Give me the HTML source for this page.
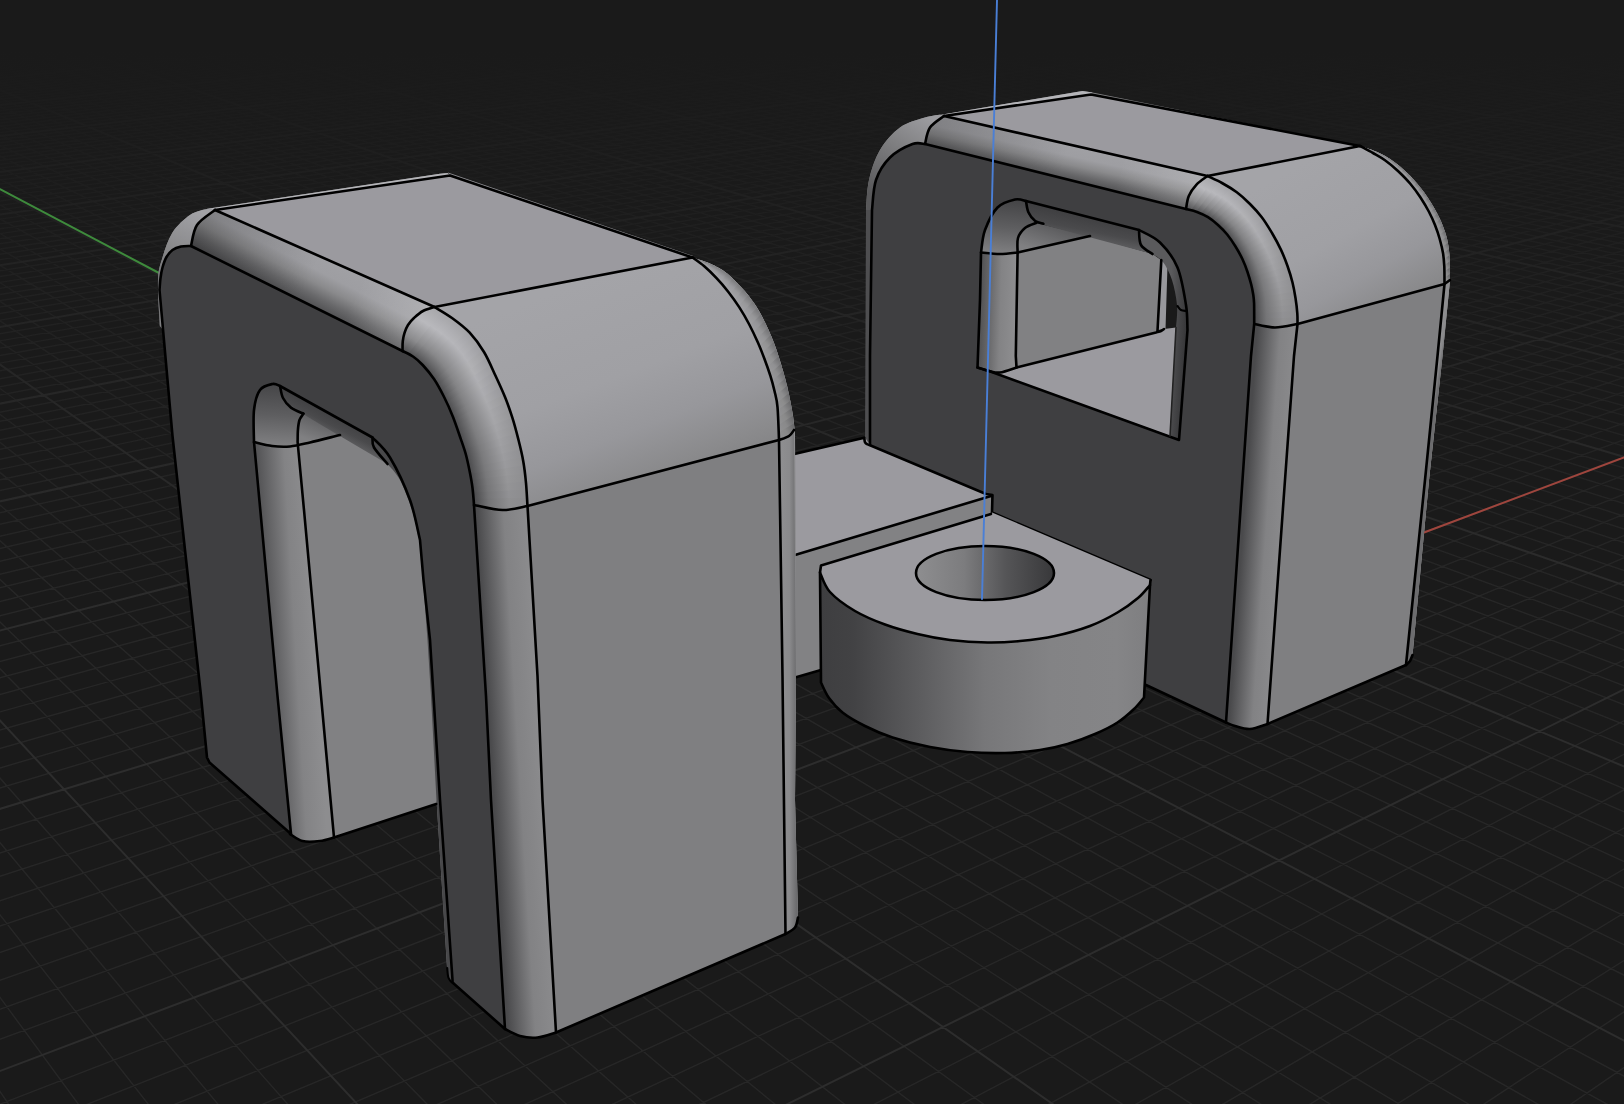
<!DOCTYPE html><html><head><meta charset="utf-8"><title>viewport</title><style>html,body{margin:0;padding:0;background:#1a1a1a;overflow:hidden;font-family:"Liberation Sans",sans-serif}</style></head><body><svg width="1624" height="1104" viewBox="0 0 1624 1104" style="display:block"><defs><linearGradient id="g1" gradientUnits="userSpaceOnUse" x1="0" y1="0" x2="0" y2="620"><stop offset="0" stop-color="#1a1a1a"/><stop offset="0.08" stop-color="#1a1a1a"/><stop offset="0.45" stop-color="#1a1a1a80"/><stop offset="1" stop-color="#1a1a1a00"/></linearGradient><linearGradient id="g2" gradientUnits="userSpaceOnUse" x1="1290" y1="170" x2="1380" y2="330"><stop offset="0" stop-color="#a4a4a8"/><stop offset="0.45" stop-color="#a0a0a4"/><stop offset="0.7" stop-color="#97979b"/><stop offset="0.9" stop-color="#8a8a8c"/><stop offset="1" stop-color="#838385"/></linearGradient><linearGradient id="g3" gradientUnits="userSpaceOnUse" x1="1380" y1="150" x2="1450" y2="300"><stop offset="0" stop-color="#b0b0b4"/><stop offset="1" stop-color="#8c8c8e"/></linearGradient><linearGradient id="g4" gradientUnits="userSpaceOnUse" x1="1362.7" y1="147.4" x2="1363.0" y2="146.9"><stop offset="0" stop-color="#acacb0"/><stop offset="0.5" stop-color="#a0a0a4"/><stop offset="1" stop-color="#808082"/></linearGradient><linearGradient id="g5" gradientUnits="userSpaceOnUse" x1="1368.1" y1="150.3" x2="1368.9" y2="148.9"><stop offset="0" stop-color="#ababaf"/><stop offset="0.5" stop-color="#9f9fa2"/><stop offset="1" stop-color="#7f7f81"/></linearGradient><linearGradient id="g6" gradientUnits="userSpaceOnUse" x1="1373.5" y1="153.3" x2="1374.7" y2="151.0"><stop offset="0" stop-color="#aaaaae"/><stop offset="0.5" stop-color="#9e9ea2"/><stop offset="1" stop-color="#7e7e80"/></linearGradient><linearGradient id="g7" gradientUnits="userSpaceOnUse" x1="1378.8" y1="156.3" x2="1380.4" y2="153.6"><stop offset="0" stop-color="#a9a9ad"/><stop offset="0.5" stop-color="#9d9da0"/><stop offset="1" stop-color="#7d7d7f"/></linearGradient><linearGradient id="g8" gradientUnits="userSpaceOnUse" x1="1384.0" y1="159.6" x2="1385.9" y2="156.5"><stop offset="0" stop-color="#a8a8ac"/><stop offset="0.5" stop-color="#9c9ca0"/><stop offset="1" stop-color="#7c7c7e"/></linearGradient><linearGradient id="g9" gradientUnits="userSpaceOnUse" x1="1389.0" y1="163.2" x2="1391.1" y2="159.9"><stop offset="0" stop-color="#a7a7ab"/><stop offset="0.5" stop-color="#9b9b9e"/><stop offset="1" stop-color="#7c7c7e"/></linearGradient><linearGradient id="g10" gradientUnits="userSpaceOnUse" x1="1393.7" y1="167.2" x2="1396.2" y2="163.5"><stop offset="0" stop-color="#a6a6a9"/><stop offset="0.5" stop-color="#9a9a9e"/><stop offset="1" stop-color="#7b7b7d"/></linearGradient><linearGradient id="g11" gradientUnits="userSpaceOnUse" x1="1398.3" y1="171.3" x2="1401.0" y2="167.4"><stop offset="0" stop-color="#a5a5a8"/><stop offset="0.5" stop-color="#9a9a9c"/><stop offset="1" stop-color="#7a7a7c"/></linearGradient><linearGradient id="g12" gradientUnits="userSpaceOnUse" x1="1402.7" y1="175.5" x2="1405.6" y2="171.5"><stop offset="0" stop-color="#a4a4a7"/><stop offset="0.5" stop-color="#99999c"/><stop offset="1" stop-color="#79797b"/></linearGradient><linearGradient id="g13" gradientUnits="userSpaceOnUse" x1="1406.9" y1="180.0" x2="1410.1" y2="175.9"><stop offset="0" stop-color="#a2a2a6"/><stop offset="0.5" stop-color="#98989a"/><stop offset="1" stop-color="#79797b"/></linearGradient><linearGradient id="g14" gradientUnits="userSpaceOnUse" x1="1410.9" y1="184.6" x2="1414.4" y2="180.4"><stop offset="0" stop-color="#a1a1a5"/><stop offset="0.5" stop-color="#97979a"/><stop offset="1" stop-color="#78787a"/></linearGradient><linearGradient id="g15" gradientUnits="userSpaceOnUse" x1="1414.8" y1="189.4" x2="1418.4" y2="185.1"><stop offset="0" stop-color="#a0a0a3"/><stop offset="0.5" stop-color="#969698"/><stop offset="1" stop-color="#777779"/></linearGradient><linearGradient id="g16" gradientUnits="userSpaceOnUse" x1="1418.4" y1="194.4" x2="1422.3" y2="190.0"><stop offset="0" stop-color="#9f9fa2"/><stop offset="0.5" stop-color="#959598"/><stop offset="1" stop-color="#767678"/></linearGradient><linearGradient id="g17" gradientUnits="userSpaceOnUse" x1="1421.8" y1="199.5" x2="1426.0" y2="195.0"><stop offset="0" stop-color="#9e9ea1"/><stop offset="0.5" stop-color="#949496"/><stop offset="1" stop-color="#757577"/></linearGradient><linearGradient id="g18" gradientUnits="userSpaceOnUse" x1="1425.0" y1="204.7" x2="1429.4" y2="200.2"><stop offset="0" stop-color="#9d9da0"/><stop offset="0.5" stop-color="#949496"/><stop offset="1" stop-color="#757577"/></linearGradient><linearGradient id="g19" gradientUnits="userSpaceOnUse" x1="1428.0" y1="210.1" x2="1432.7" y2="205.5"><stop offset="0" stop-color="#9c9c9f"/><stop offset="0.5" stop-color="#939394"/><stop offset="1" stop-color="#747476"/></linearGradient><linearGradient id="g20" gradientUnits="userSpaceOnUse" x1="1430.8" y1="215.5" x2="1435.8" y2="210.9"><stop offset="0" stop-color="#9b9b9e"/><stop offset="0.5" stop-color="#929294"/><stop offset="1" stop-color="#737375"/></linearGradient><linearGradient id="g21" gradientUnits="userSpaceOnUse" x1="1433.4" y1="221.1" x2="1438.6" y2="216.4"><stop offset="0" stop-color="#9a9a9c"/><stop offset="0.5" stop-color="#919192"/><stop offset="1" stop-color="#727274"/></linearGradient><linearGradient id="g22" gradientUnits="userSpaceOnUse" x1="1435.7" y1="226.8" x2="1441.2" y2="222.1"><stop offset="0" stop-color="#99999b"/><stop offset="0.5" stop-color="#909092"/><stop offset="1" stop-color="#717173"/></linearGradient><linearGradient id="g23" gradientUnits="userSpaceOnUse" x1="1437.7" y1="232.6" x2="1443.6" y2="227.9"><stop offset="0" stop-color="#97979a"/><stop offset="0.5" stop-color="#8f8f90"/><stop offset="1" stop-color="#717173"/></linearGradient><linearGradient id="g24" gradientUnits="userSpaceOnUse" x1="1439.5" y1="238.4" x2="1445.6" y2="233.7"><stop offset="0" stop-color="#969699"/><stop offset="0.5" stop-color="#8e8e90"/><stop offset="1" stop-color="#707072"/></linearGradient><linearGradient id="g25" gradientUnits="userSpaceOnUse" x1="1441.1" y1="244.4" x2="1447.2" y2="239.7"><stop offset="0" stop-color="#959598"/><stop offset="0.5" stop-color="#8e8e8e"/><stop offset="1" stop-color="#6f6f71"/></linearGradient><linearGradient id="g26" gradientUnits="userSpaceOnUse" x1="1442.5" y1="250.4" x2="1448.4" y2="245.8"><stop offset="0" stop-color="#949496"/><stop offset="0.5" stop-color="#8d8d8e"/><stop offset="1" stop-color="#6e6e70"/></linearGradient><linearGradient id="g27" gradientUnits="userSpaceOnUse" x1="1443.5" y1="256.4" x2="1449.2" y2="252.0"><stop offset="0" stop-color="#939395"/><stop offset="0.5" stop-color="#8c8c8c"/><stop offset="1" stop-color="#6e6e70"/></linearGradient><linearGradient id="g28" gradientUnits="userSpaceOnUse" x1="1444.1" y1="262.5" x2="1449.6" y2="258.2"><stop offset="0" stop-color="#929294"/><stop offset="0.5" stop-color="#8b8b8c"/><stop offset="1" stop-color="#6d6d6f"/></linearGradient><linearGradient id="g29" gradientUnits="userSpaceOnUse" x1="1444.4" y1="268.7" x2="1449.8" y2="264.4"><stop offset="0" stop-color="#919193"/><stop offset="0.5" stop-color="#8a8a8a"/><stop offset="1" stop-color="#6c6c6e"/></linearGradient><linearGradient id="g30" gradientUnits="userSpaceOnUse" x1="1444.5" y1="274.8" x2="1449.9" y2="270.7"><stop offset="0" stop-color="#909092"/><stop offset="0.5" stop-color="#89898a"/><stop offset="1" stop-color="#6b6b6d"/></linearGradient><linearGradient id="g31" gradientUnits="userSpaceOnUse" x1="1444.5" y1="280.9" x2="1450.0" y2="276.9"><stop offset="0" stop-color="#8f8f91"/><stop offset="0.5" stop-color="#888888"/><stop offset="1" stop-color="#6a6a6c"/></linearGradient><linearGradient id="g32" gradientUnits="userSpaceOnUse" x1="1437" y1="356" x2="1443" y2="357"><stop offset="0" stop-color="#8e8e90"/><stop offset="0.5" stop-color="#8a8a8c"/><stop offset="1" stop-color="#6c6c6e"/></linearGradient><linearGradient id="g33" gradientUnits="userSpaceOnUse" x1="1075" y1="146" x2="1067.3" y2="180.5"><stop offset="0" stop-color="#a0a0a4"/><stop offset="0.3" stop-color="#9e9ea2"/><stop offset="0.55" stop-color="#8a8a8c"/><stop offset="0.8" stop-color="#68686a"/><stop offset="1" stop-color="#525254"/></linearGradient><linearGradient id="g34" gradientUnits="userSpaceOnUse" x1="935" y1="130" x2="1197" y2="192"><stop offset="0" stop-color="#00000030"/><stop offset="0.5" stop-color="#00000000"/><stop offset="0.7" stop-color="#ffffff00"/><stop offset="1" stop-color="#ffffff26"/></linearGradient><linearGradient id="g35" gradientUnits="userSpaceOnUse" x1="930" y1="118" x2="880" y2="200"><stop offset="0" stop-color="#9c9ca0"/><stop offset="0.4" stop-color="#808082"/><stop offset="1" stop-color="#58585a"/></linearGradient><linearGradient id="g36" gradientUnits="userSpaceOnUse" x1="1186" y1="209" x2="1207.5" y2="176"><stop offset="0" stop-color="#505052"/><stop offset="0.28" stop-color="#8c8c8e"/><stop offset="0.66" stop-color="#b9b9bd"/><stop offset="1" stop-color="#a6a6aa"/></linearGradient><linearGradient id="g37" gradientUnits="userSpaceOnUse" x1="1254.2" y1="324" x2="1297.5" y2="324"><stop offset="0" stop-color="#48484a"/><stop offset="0.28" stop-color="#747476"/><stop offset="0.66" stop-color="#8e8e90"/><stop offset="1" stop-color="#8a8a8c"/></linearGradient><linearGradient id="g38" gradientUnits="userSpaceOnUse" x1="1188.5" y1="209.6" x2="1210.5" y2="177.4"><stop offset="0" stop-color="#505052"/><stop offset="0.28" stop-color="#8c8c8e"/><stop offset="0.66" stop-color="#b9b9bd"/><stop offset="1" stop-color="#a6a6a9"/></linearGradient><linearGradient id="g39" gradientUnits="userSpaceOnUse" x1="1193.5" y1="210.9" x2="1216.4" y2="180.2"><stop offset="0" stop-color="#505052"/><stop offset="0.28" stop-color="#8b8b8d"/><stop offset="0.66" stop-color="#b8b8bc"/><stop offset="1" stop-color="#a4a4a8"/></linearGradient><linearGradient id="g40" gradientUnits="userSpaceOnUse" x1="1198.4" y1="212.6" x2="1222.2" y2="183.2"><stop offset="0" stop-color="#4f4f51"/><stop offset="0.28" stop-color="#8a8a8c"/><stop offset="0.66" stop-color="#b8b8bc"/><stop offset="1" stop-color="#a4a4a7"/></linearGradient><linearGradient id="g41" gradientUnits="userSpaceOnUse" x1="1203.2" y1="214.7" x2="1227.9" y2="186.4"><stop offset="0" stop-color="#4f4f51"/><stop offset="0.28" stop-color="#89898b"/><stop offset="0.66" stop-color="#b7b7bb"/><stop offset="1" stop-color="#a2a2a6"/></linearGradient><linearGradient id="g42" gradientUnits="userSpaceOnUse" x1="1207.7" y1="217.1" x2="1233.4" y2="190.0"><stop offset="0" stop-color="#4f4f51"/><stop offset="0.28" stop-color="#88888a"/><stop offset="0.66" stop-color="#b6b6ba"/><stop offset="1" stop-color="#a2a2a5"/></linearGradient><linearGradient id="g43" gradientUnits="userSpaceOnUse" x1="1212.0" y1="220.0" x2="1238.7" y2="193.8"><stop offset="0" stop-color="#4e4e50"/><stop offset="0.28" stop-color="#878789"/><stop offset="0.66" stop-color="#b5b5b9"/><stop offset="1" stop-color="#a0a0a4"/></linearGradient><linearGradient id="g44" gradientUnits="userSpaceOnUse" x1="1216.0" y1="223.3" x2="1243.7" y2="198.1"><stop offset="0" stop-color="#4e4e50"/><stop offset="0.28" stop-color="#868688"/><stop offset="0.66" stop-color="#b4b4b8"/><stop offset="1" stop-color="#a0a0a3"/></linearGradient><linearGradient id="g45" gradientUnits="userSpaceOnUse" x1="1219.9" y1="226.8" x2="1248.5" y2="202.5"><stop offset="0" stop-color="#4e4e50"/><stop offset="0.28" stop-color="#868688"/><stop offset="0.66" stop-color="#b3b3b7"/><stop offset="1" stop-color="#9e9ea2"/></linearGradient><linearGradient id="g46" gradientUnits="userSpaceOnUse" x1="1223.6" y1="230.4" x2="1253.1" y2="207.2"><stop offset="0" stop-color="#4e4e50"/><stop offset="0.28" stop-color="#858587"/><stop offset="0.66" stop-color="#b2b2b5"/><stop offset="1" stop-color="#9e9ea1"/></linearGradient><linearGradient id="g47" gradientUnits="userSpaceOnUse" x1="1227.0" y1="234.3" x2="1257.5" y2="212.0"><stop offset="0" stop-color="#4d4d4f"/><stop offset="0.28" stop-color="#848486"/><stop offset="0.66" stop-color="#b1b1b4"/><stop offset="1" stop-color="#9c9ca0"/></linearGradient><linearGradient id="g48" gradientUnits="userSpaceOnUse" x1="1230.1" y1="238.4" x2="1261.6" y2="217.1"><stop offset="0" stop-color="#4d4d4f"/><stop offset="0.28" stop-color="#838385"/><stop offset="0.66" stop-color="#afafb3"/><stop offset="1" stop-color="#9c9c9f"/></linearGradient><linearGradient id="g49" gradientUnits="userSpaceOnUse" x1="1233.1" y1="242.7" x2="1265.4" y2="222.4"><stop offset="0" stop-color="#4d4d4f"/><stop offset="0.28" stop-color="#828284"/><stop offset="0.66" stop-color="#aeaeb1"/><stop offset="1" stop-color="#9a9a9e"/></linearGradient><linearGradient id="g50" gradientUnits="userSpaceOnUse" x1="1235.8" y1="247.1" x2="1269.0" y2="228.0"><stop offset="0" stop-color="#4c4c4e"/><stop offset="0.28" stop-color="#818183"/><stop offset="0.66" stop-color="#acacb0"/><stop offset="1" stop-color="#9a9a9d"/></linearGradient><linearGradient id="g51" gradientUnits="userSpaceOnUse" x1="1238.5" y1="251.6" x2="1272.3" y2="233.6"><stop offset="0" stop-color="#4c4c4e"/><stop offset="0.28" stop-color="#808082"/><stop offset="0.66" stop-color="#ababae"/><stop offset="1" stop-color="#98989c"/></linearGradient><linearGradient id="g52" gradientUnits="userSpaceOnUse" x1="1240.9" y1="256.1" x2="1275.5" y2="239.3"><stop offset="0" stop-color="#4c4c4e"/><stop offset="0.28" stop-color="#808082"/><stop offset="0.66" stop-color="#a9a9ac"/><stop offset="1" stop-color="#98989a"/></linearGradient><linearGradient id="g53" gradientUnits="userSpaceOnUse" x1="1243.2" y1="260.8" x2="1278.6" y2="245.1"><stop offset="0" stop-color="#4c4c4e"/><stop offset="0.28" stop-color="#7f7f81"/><stop offset="0.66" stop-color="#a7a7aa"/><stop offset="1" stop-color="#969699"/></linearGradient><linearGradient id="g54" gradientUnits="userSpaceOnUse" x1="1245.2" y1="265.6" x2="1281.5" y2="251.0"><stop offset="0" stop-color="#4b4b4d"/><stop offset="0.28" stop-color="#7e7e80"/><stop offset="0.66" stop-color="#a6a6a9"/><stop offset="1" stop-color="#969698"/></linearGradient><linearGradient id="g55" gradientUnits="userSpaceOnUse" x1="1246.9" y1="270.4" x2="1284.1" y2="257.0"><stop offset="0" stop-color="#4b4b4d"/><stop offset="0.28" stop-color="#7d7d7f"/><stop offset="0.66" stop-color="#a4a4a7"/><stop offset="1" stop-color="#949497"/></linearGradient><linearGradient id="g56" gradientUnits="userSpaceOnUse" x1="1248.6" y1="275.4" x2="1286.4" y2="263.1"><stop offset="0" stop-color="#4b4b4d"/><stop offset="0.28" stop-color="#7c7c7e"/><stop offset="0.66" stop-color="#a2a2a5"/><stop offset="1" stop-color="#949496"/></linearGradient><linearGradient id="g57" gradientUnits="userSpaceOnUse" x1="1250.1" y1="280.3" x2="1288.6" y2="269.3"><stop offset="0" stop-color="#4a4a4c"/><stop offset="0.28" stop-color="#7b7b7d"/><stop offset="0.66" stop-color="#a0a0a3"/><stop offset="1" stop-color="#929295"/></linearGradient><linearGradient id="g58" gradientUnits="userSpaceOnUse" x1="1251.4" y1="285.4" x2="1290.6" y2="275.5"><stop offset="0" stop-color="#4a4a4c"/><stop offset="0.28" stop-color="#7a7a7c"/><stop offset="0.66" stop-color="#9e9ea1"/><stop offset="1" stop-color="#929294"/></linearGradient><linearGradient id="g59" gradientUnits="userSpaceOnUse" x1="1252.5" y1="290.4" x2="1292.3" y2="281.8"><stop offset="0" stop-color="#4a4a4c"/><stop offset="0.28" stop-color="#7a7a7c"/><stop offset="0.66" stop-color="#9c9c9f"/><stop offset="1" stop-color="#909093"/></linearGradient><linearGradient id="g60" gradientUnits="userSpaceOnUse" x1="1253.4" y1="295.5" x2="1293.8" y2="288.2"><stop offset="0" stop-color="#4a4a4c"/><stop offset="0.28" stop-color="#79797b"/><stop offset="0.66" stop-color="#9a9a9d"/><stop offset="1" stop-color="#909092"/></linearGradient><linearGradient id="g61" gradientUnits="userSpaceOnUse" x1="1253.9" y1="300.7" x2="1294.9" y2="294.7"><stop offset="0" stop-color="#49494b"/><stop offset="0.28" stop-color="#78787a"/><stop offset="0.66" stop-color="#98989a"/><stop offset="1" stop-color="#8e8e91"/></linearGradient><linearGradient id="g62" gradientUnits="userSpaceOnUse" x1="1254.1" y1="305.9" x2="1295.9" y2="301.2"><stop offset="0" stop-color="#49494b"/><stop offset="0.28" stop-color="#777779"/><stop offset="0.66" stop-color="#969698"/><stop offset="1" stop-color="#8e8e90"/></linearGradient><linearGradient id="g63" gradientUnits="userSpaceOnUse" x1="1254.2" y1="311.0" x2="1296.7" y2="307.7"><stop offset="0" stop-color="#49494b"/><stop offset="0.28" stop-color="#767678"/><stop offset="0.66" stop-color="#949496"/><stop offset="1" stop-color="#8c8c8f"/></linearGradient><linearGradient id="g64" gradientUnits="userSpaceOnUse" x1="1254.2" y1="316.2" x2="1297.3" y2="314.2"><stop offset="0" stop-color="#48484a"/><stop offset="0.28" stop-color="#757577"/><stop offset="0.66" stop-color="#919194"/><stop offset="1" stop-color="#8c8c8e"/></linearGradient><linearGradient id="g65" gradientUnits="userSpaceOnUse" x1="1254.2" y1="321.4" x2="1297.5" y2="320.7"><stop offset="0" stop-color="#48484a"/><stop offset="0.28" stop-color="#747476"/><stop offset="0.66" stop-color="#8f8f91"/><stop offset="1" stop-color="#8a8a8d"/></linearGradient><linearGradient id="g66" gradientUnits="userSpaceOnUse" x1="1245" y1="500" x2="1287" y2="503"><stop offset="0" stop-color="#4a4a4c"/><stop offset="0.55" stop-color="#828284"/><stop offset="1" stop-color="#8b8b8d"/></linearGradient><linearGradient id="g67" gradientUnits="userSpaceOnUse" x1="1050" y1="222" x2="1040" y2="252"><stop offset="0" stop-color="#58585a"/><stop offset="1" stop-color="#808082"/></linearGradient><linearGradient id="g68" gradientUnits="userSpaceOnUse" x1="979" y1="300" x2="1015" y2="301"><stop offset="0" stop-color="#4e4e50"/><stop offset="0.6" stop-color="#838385"/><stop offset="1" stop-color="#8d8d8f"/></linearGradient><linearGradient id="g69" gradientUnits="userSpaceOnUse" x1="1005" y1="200" x2="1000" y2="254"><stop offset="0" stop-color="#454547"/><stop offset="0.5" stop-color="#5e5e60"/><stop offset="1" stop-color="#808082"/></linearGradient><linearGradient id="g70" gradientUnits="userSpaceOnUse" x1="1085" y1="214" x2="1080" y2="240"><stop offset="0" stop-color="#3e3e40"/><stop offset="0.6" stop-color="#4a4a4c"/><stop offset="1" stop-color="#5e5e60"/></linearGradient><linearGradient id="g71" gradientUnits="userSpaceOnUse" x1="1168" y1="340" x2="1188" y2="341"><stop offset="0" stop-color="#5a5a5c"/><stop offset="0.5" stop-color="#454547"/><stop offset="1" stop-color="#333335"/></linearGradient><linearGradient id="g72" gradientUnits="userSpaceOnUse" x1="820" y1="0" x2="1150" y2="0"><stop offset="0" stop-color="#3e3e40"/><stop offset="0.1" stop-color="#424244"/><stop offset="0.3" stop-color="#5c5c5e"/><stop offset="0.5" stop-color="#777779"/><stop offset="0.7" stop-color="#838385"/><stop offset="0.9" stop-color="#858587"/><stop offset="1" stop-color="#7e7e80"/></linearGradient><linearGradient id="g73" gradientUnits="userSpaceOnUse" x1="916" y1="0" x2="1054" y2="0"><stop offset="0" stop-color="#8e8e90"/><stop offset="0.35" stop-color="#7c7c7e"/><stop offset="0.65" stop-color="#555557"/><stop offset="1" stop-color="#38383a"/></linearGradient><linearGradient id="g74" gradientUnits="userSpaceOnUse" x1="560" y1="290" x2="640" y2="500"><stop offset="0" stop-color="#a4a4a8"/><stop offset="0.45" stop-color="#a0a0a4"/><stop offset="0.7" stop-color="#97979b"/><stop offset="0.9" stop-color="#8a8a8c"/><stop offset="1" stop-color="#838385"/></linearGradient><linearGradient id="g75" gradientUnits="userSpaceOnUse" x1="700" y1="260" x2="796" y2="440"><stop offset="0" stop-color="#b2b2b6"/><stop offset="1" stop-color="#8e8e90"/></linearGradient><linearGradient id="g76" gradientUnits="userSpaceOnUse" x1="695.6" y1="259.7" x2="696.1" y2="258.7"><stop offset="0" stop-color="#acacb0"/><stop offset="0.5" stop-color="#a0a0a4"/><stop offset="1" stop-color="#808082"/></linearGradient><linearGradient id="g77" gradientUnits="userSpaceOnUse" x1="701.5" y1="264.1" x2="703.4" y2="261.1"><stop offset="0" stop-color="#ababaf"/><stop offset="0.5" stop-color="#9f9fa2"/><stop offset="1" stop-color="#7f7f81"/></linearGradient><linearGradient id="g78" gradientUnits="userSpaceOnUse" x1="707.2" y1="269.0" x2="710.5" y2="263.9"><stop offset="0" stop-color="#aaaaae"/><stop offset="0.5" stop-color="#9e9ea2"/><stop offset="1" stop-color="#7e7e80"/></linearGradient><linearGradient id="g79" gradientUnits="userSpaceOnUse" x1="712.6" y1="274.1" x2="717.3" y2="267.2"><stop offset="0" stop-color="#a9a9ad"/><stop offset="0.5" stop-color="#9d9da0"/><stop offset="1" stop-color="#7d7d7f"/></linearGradient><linearGradient id="g80" gradientUnits="userSpaceOnUse" x1="717.8" y1="279.5" x2="723.8" y2="271.2"><stop offset="0" stop-color="#a8a8ac"/><stop offset="0.5" stop-color="#9c9ca0"/><stop offset="1" stop-color="#7c7c7e"/></linearGradient><linearGradient id="g81" gradientUnits="userSpaceOnUse" x1="722.7" y1="285.1" x2="729.8" y2="275.9"><stop offset="0" stop-color="#a7a7ab"/><stop offset="0.5" stop-color="#9b9b9e"/><stop offset="1" stop-color="#7c7c7e"/></linearGradient><linearGradient id="g82" gradientUnits="userSpaceOnUse" x1="727.5" y1="290.9" x2="735.4" y2="281.2"><stop offset="0" stop-color="#a6a6a9"/><stop offset="0.5" stop-color="#9a9a9e"/><stop offset="1" stop-color="#7b7b7d"/></linearGradient><linearGradient id="g83" gradientUnits="userSpaceOnUse" x1="732.0" y1="296.8" x2="740.7" y2="286.6"><stop offset="0" stop-color="#a5a5a8"/><stop offset="0.5" stop-color="#9a9a9c"/><stop offset="1" stop-color="#7a7a7c"/></linearGradient><linearGradient id="g84" gradientUnits="userSpaceOnUse" x1="736.4" y1="302.9" x2="745.7" y2="292.3"><stop offset="0" stop-color="#a4a4a7"/><stop offset="0.5" stop-color="#99999c"/><stop offset="1" stop-color="#79797b"/></linearGradient><linearGradient id="g85" gradientUnits="userSpaceOnUse" x1="740.5" y1="309.2" x2="750.5" y2="298.3"><stop offset="0" stop-color="#a2a2a6"/><stop offset="0.5" stop-color="#98989a"/><stop offset="1" stop-color="#79797b"/></linearGradient><linearGradient id="g86" gradientUnits="userSpaceOnUse" x1="744.3" y1="315.6" x2="754.9" y2="304.5"><stop offset="0" stop-color="#a1a1a5"/><stop offset="0.5" stop-color="#97979a"/><stop offset="1" stop-color="#78787a"/></linearGradient><linearGradient id="g87" gradientUnits="userSpaceOnUse" x1="748.0" y1="322.1" x2="759.0" y2="311.0"><stop offset="0" stop-color="#a0a0a3"/><stop offset="0.5" stop-color="#969698"/><stop offset="1" stop-color="#777779"/></linearGradient><linearGradient id="g88" gradientUnits="userSpaceOnUse" x1="751.4" y1="328.7" x2="762.6" y2="317.7"><stop offset="0" stop-color="#9f9fa2"/><stop offset="0.5" stop-color="#959598"/><stop offset="1" stop-color="#767678"/></linearGradient><linearGradient id="g89" gradientUnits="userSpaceOnUse" x1="754.7" y1="335.5" x2="766.0" y2="324.5"><stop offset="0" stop-color="#9e9ea1"/><stop offset="0.5" stop-color="#949496"/><stop offset="1" stop-color="#757577"/></linearGradient><linearGradient id="g90" gradientUnits="userSpaceOnUse" x1="757.8" y1="342.3" x2="769.2" y2="331.5"><stop offset="0" stop-color="#9d9da0"/><stop offset="0.5" stop-color="#949496"/><stop offset="1" stop-color="#757577"/></linearGradient><linearGradient id="g91" gradientUnits="userSpaceOnUse" x1="760.7" y1="349.2" x2="772.2" y2="338.5"><stop offset="0" stop-color="#9c9c9f"/><stop offset="0.5" stop-color="#939394"/><stop offset="1" stop-color="#747476"/></linearGradient><linearGradient id="g92" gradientUnits="userSpaceOnUse" x1="763.4" y1="356.1" x2="774.9" y2="345.6"><stop offset="0" stop-color="#9b9b9e"/><stop offset="0.5" stop-color="#929294"/><stop offset="1" stop-color="#737375"/></linearGradient><linearGradient id="g93" gradientUnits="userSpaceOnUse" x1="766.0" y1="363.1" x2="777.4" y2="352.9"><stop offset="0" stop-color="#9a9a9c"/><stop offset="0.5" stop-color="#919192"/><stop offset="1" stop-color="#727274"/></linearGradient><linearGradient id="g94" gradientUnits="userSpaceOnUse" x1="768.5" y1="370.2" x2="779.8" y2="360.1"><stop offset="0" stop-color="#99999b"/><stop offset="0.5" stop-color="#909092"/><stop offset="1" stop-color="#717173"/></linearGradient><linearGradient id="g95" gradientUnits="userSpaceOnUse" x1="770.8" y1="377.3" x2="782.0" y2="367.4"><stop offset="0" stop-color="#97979a"/><stop offset="0.5" stop-color="#8f8f90"/><stop offset="1" stop-color="#717173"/></linearGradient><linearGradient id="g96" gradientUnits="userSpaceOnUse" x1="772.9" y1="384.5" x2="784.1" y2="374.8"><stop offset="0" stop-color="#969699"/><stop offset="0.5" stop-color="#8e8e90"/><stop offset="1" stop-color="#707072"/></linearGradient><linearGradient id="g97" gradientUnits="userSpaceOnUse" x1="774.7" y1="391.7" x2="786.1" y2="382.1"><stop offset="0" stop-color="#959598"/><stop offset="0.5" stop-color="#8e8e8e"/><stop offset="1" stop-color="#6f6f71"/></linearGradient><linearGradient id="g98" gradientUnits="userSpaceOnUse" x1="776.3" y1="399.0" x2="787.9" y2="389.6"><stop offset="0" stop-color="#949496"/><stop offset="0.5" stop-color="#8d8d8e"/><stop offset="1" stop-color="#6e6e70"/></linearGradient><linearGradient id="g99" gradientUnits="userSpaceOnUse" x1="777.4" y1="406.4" x2="789.5" y2="397.0"><stop offset="0" stop-color="#939395"/><stop offset="0.5" stop-color="#8c8c8c"/><stop offset="1" stop-color="#6e6e70"/></linearGradient><linearGradient id="g100" gradientUnits="userSpaceOnUse" x1="777.9" y1="413.9" x2="791.0" y2="404.5"><stop offset="0" stop-color="#929294"/><stop offset="0.5" stop-color="#8b8b8c"/><stop offset="1" stop-color="#6d6d6f"/></linearGradient><linearGradient id="g101" gradientUnits="userSpaceOnUse" x1="778.3" y1="421.3" x2="792.3" y2="412.0"><stop offset="0" stop-color="#919193"/><stop offset="0.5" stop-color="#8a8a8a"/><stop offset="1" stop-color="#6c6c6e"/></linearGradient><linearGradient id="g102" gradientUnits="userSpaceOnUse" x1="778.6" y1="428.8" x2="793.3" y2="419.6"><stop offset="0" stop-color="#909092"/><stop offset="0.5" stop-color="#89898a"/><stop offset="1" stop-color="#6b6b6d"/></linearGradient><linearGradient id="g103" gradientUnits="userSpaceOnUse" x1="778.9" y1="436.3" x2="794.1" y2="427.2"><stop offset="0" stop-color="#8f8f91"/><stop offset="0.5" stop-color="#888888"/><stop offset="1" stop-color="#6a6a6c"/></linearGradient><linearGradient id="g104" gradientUnits="userSpaceOnUse" x1="782" y1="0" x2="797" y2="0"><stop offset="0" stop-color="#8e8e90"/><stop offset="0.5" stop-color="#8a8a8c"/><stop offset="1" stop-color="#6a6a6c"/></linearGradient><linearGradient id="g105" gradientUnits="userSpaceOnUse" x1="325" y1="258" x2="303" y2="301"><stop offset="0" stop-color="#a0a0a4"/><stop offset="0.3" stop-color="#9e9ea2"/><stop offset="0.55" stop-color="#8a8a8c"/><stop offset="0.8" stop-color="#68686a"/><stop offset="1" stop-color="#525254"/></linearGradient><linearGradient id="g106" gradientUnits="userSpaceOnUse" x1="203" y1="228" x2="418" y2="329"><stop offset="0" stop-color="#00000030"/><stop offset="0.5" stop-color="#00000000"/><stop offset="0.7" stop-color="#ffffff00"/><stop offset="1" stop-color="#ffffff26"/></linearGradient><linearGradient id="g107" gradientUnits="userSpaceOnUse" x1="200" y1="212" x2="165" y2="290"><stop offset="0" stop-color="#a2a2a6"/><stop offset="0.5" stop-color="#8a8a8c"/><stop offset="1" stop-color="#707072"/></linearGradient><linearGradient id="g108" gradientUnits="userSpaceOnUse" x1="402.5" y1="351" x2="434.5" y2="307"><stop offset="0" stop-color="#505052"/><stop offset="0.28" stop-color="#8c8c8e"/><stop offset="0.66" stop-color="#b9b9bd"/><stop offset="1" stop-color="#a6a6aa"/></linearGradient><linearGradient id="g109" gradientUnits="userSpaceOnUse" x1="474" y1="505" x2="527.5" y2="506"><stop offset="0" stop-color="#48484a"/><stop offset="0.28" stop-color="#747476"/><stop offset="0.66" stop-color="#8e8e90"/><stop offset="1" stop-color="#8a8a8c"/></linearGradient><linearGradient id="g110" gradientUnits="userSpaceOnUse" x1="405.3" y1="352.4" x2="438.0" y2="309.1"><stop offset="0" stop-color="#505052"/><stop offset="0.28" stop-color="#8c8c8e"/><stop offset="0.66" stop-color="#b9b9bd"/><stop offset="1" stop-color="#a6a6a9"/></linearGradient><linearGradient id="g111" gradientUnits="userSpaceOnUse" x1="410.9" y1="355.3" x2="445.0" y2="313.4"><stop offset="0" stop-color="#505052"/><stop offset="0.28" stop-color="#8b8b8d"/><stop offset="0.66" stop-color="#b8b8bc"/><stop offset="1" stop-color="#a4a4a8"/></linearGradient><linearGradient id="g112" gradientUnits="userSpaceOnUse" x1="416.0" y1="358.9" x2="451.8" y2="317.9"><stop offset="0" stop-color="#4f4f51"/><stop offset="0.28" stop-color="#8a8a8c"/><stop offset="0.66" stop-color="#b8b8bc"/><stop offset="1" stop-color="#a4a4a7"/></linearGradient><linearGradient id="g113" gradientUnits="userSpaceOnUse" x1="420.7" y1="363.1" x2="458.4" y2="322.8"><stop offset="0" stop-color="#4f4f51"/><stop offset="0.28" stop-color="#89898b"/><stop offset="0.66" stop-color="#b7b7bb"/><stop offset="1" stop-color="#a2a2a6"/></linearGradient><linearGradient id="g114" gradientUnits="userSpaceOnUse" x1="425.1" y1="367.6" x2="464.7" y2="328.0"><stop offset="0" stop-color="#4f4f51"/><stop offset="0.28" stop-color="#88888a"/><stop offset="0.66" stop-color="#b6b6ba"/><stop offset="1" stop-color="#a2a2a5"/></linearGradient><linearGradient id="g115" gradientUnits="userSpaceOnUse" x1="429.1" y1="372.4" x2="470.5" y2="333.7"><stop offset="0" stop-color="#4e4e50"/><stop offset="0.28" stop-color="#878789"/><stop offset="0.66" stop-color="#b5b5b9"/><stop offset="1" stop-color="#a0a0a4"/></linearGradient><linearGradient id="g116" gradientUnits="userSpaceOnUse" x1="432.9" y1="377.5" x2="475.8" y2="340.0"><stop offset="0" stop-color="#4e4e50"/><stop offset="0.28" stop-color="#868688"/><stop offset="0.66" stop-color="#b4b4b8"/><stop offset="1" stop-color="#a0a0a3"/></linearGradient><linearGradient id="g117" gradientUnits="userSpaceOnUse" x1="436.3" y1="382.7" x2="480.6" y2="346.7"><stop offset="0" stop-color="#4e4e50"/><stop offset="0.28" stop-color="#868688"/><stop offset="0.66" stop-color="#b3b3b7"/><stop offset="1" stop-color="#9e9ea2"/></linearGradient><linearGradient id="g118" gradientUnits="userSpaceOnUse" x1="439.5" y1="388.2" x2="484.8" y2="353.6"><stop offset="0" stop-color="#4e4e50"/><stop offset="0.28" stop-color="#858587"/><stop offset="0.66" stop-color="#b2b2b5"/><stop offset="1" stop-color="#9e9ea1"/></linearGradient><linearGradient id="g119" gradientUnits="userSpaceOnUse" x1="442.4" y1="393.7" x2="488.7" y2="360.9"><stop offset="0" stop-color="#4d4d4f"/><stop offset="0.28" stop-color="#848486"/><stop offset="0.66" stop-color="#b1b1b4"/><stop offset="1" stop-color="#9c9ca0"/></linearGradient><linearGradient id="g120" gradientUnits="userSpaceOnUse" x1="445.2" y1="399.4" x2="492.1" y2="368.3"><stop offset="0" stop-color="#4d4d4f"/><stop offset="0.28" stop-color="#838385"/><stop offset="0.66" stop-color="#afafb3"/><stop offset="1" stop-color="#9c9c9f"/></linearGradient><linearGradient id="g121" gradientUnits="userSpaceOnUse" x1="447.9" y1="405.1" x2="495.5" y2="375.7"><stop offset="0" stop-color="#4d4d4f"/><stop offset="0.28" stop-color="#828284"/><stop offset="0.66" stop-color="#aeaeb1"/><stop offset="1" stop-color="#9a9a9e"/></linearGradient><linearGradient id="g122" gradientUnits="userSpaceOnUse" x1="450.5" y1="410.8" x2="499.0" y2="383.2"><stop offset="0" stop-color="#4c4c4e"/><stop offset="0.28" stop-color="#818183"/><stop offset="0.66" stop-color="#acacb0"/><stop offset="1" stop-color="#9a9a9d"/></linearGradient><linearGradient id="g123" gradientUnits="userSpaceOnUse" x1="452.8" y1="416.7" x2="502.3" y2="390.7"><stop offset="0" stop-color="#4c4c4e"/><stop offset="0.28" stop-color="#808082"/><stop offset="0.66" stop-color="#ababae"/><stop offset="1" stop-color="#98989c"/></linearGradient><linearGradient id="g124" gradientUnits="userSpaceOnUse" x1="455.1" y1="422.5" x2="505.4" y2="398.2"><stop offset="0" stop-color="#4c4c4e"/><stop offset="0.28" stop-color="#808082"/><stop offset="0.66" stop-color="#a9a9ac"/><stop offset="1" stop-color="#98989a"/></linearGradient><linearGradient id="g125" gradientUnits="userSpaceOnUse" x1="457.2" y1="428.5" x2="508.3" y2="405.9"><stop offset="0" stop-color="#4c4c4e"/><stop offset="0.28" stop-color="#7f7f81"/><stop offset="0.66" stop-color="#a7a7aa"/><stop offset="1" stop-color="#969699"/></linearGradient><linearGradient id="g126" gradientUnits="userSpaceOnUse" x1="459.2" y1="434.4" x2="511.0" y2="413.6"><stop offset="0" stop-color="#4b4b4d"/><stop offset="0.28" stop-color="#7e7e80"/><stop offset="0.66" stop-color="#a6a6a9"/><stop offset="1" stop-color="#969698"/></linearGradient><linearGradient id="g127" gradientUnits="userSpaceOnUse" x1="461.3" y1="440.4" x2="513.5" y2="421.4"><stop offset="0" stop-color="#4b4b4d"/><stop offset="0.28" stop-color="#7d7d7f"/><stop offset="0.66" stop-color="#a4a4a7"/><stop offset="1" stop-color="#949497"/></linearGradient><linearGradient id="g128" gradientUnits="userSpaceOnUse" x1="463.3" y1="446.3" x2="515.7" y2="429.3"><stop offset="0" stop-color="#4b4b4d"/><stop offset="0.28" stop-color="#7c7c7e"/><stop offset="0.66" stop-color="#a2a2a5"/><stop offset="1" stop-color="#949496"/></linearGradient><linearGradient id="g129" gradientUnits="userSpaceOnUse" x1="465.2" y1="452.3" x2="517.8" y2="437.2"><stop offset="0" stop-color="#4a4a4c"/><stop offset="0.28" stop-color="#7b7b7d"/><stop offset="0.66" stop-color="#a0a0a3"/><stop offset="1" stop-color="#929295"/></linearGradient><linearGradient id="g130" gradientUnits="userSpaceOnUse" x1="466.8" y1="458.4" x2="519.8" y2="445.2"><stop offset="0" stop-color="#4a4a4c"/><stop offset="0.28" stop-color="#7a7a7c"/><stop offset="0.66" stop-color="#9e9ea1"/><stop offset="1" stop-color="#929294"/></linearGradient><linearGradient id="g131" gradientUnits="userSpaceOnUse" x1="468.3" y1="464.5" x2="521.6" y2="453.2"><stop offset="0" stop-color="#4a4a4c"/><stop offset="0.28" stop-color="#7a7a7c"/><stop offset="0.66" stop-color="#9c9c9f"/><stop offset="1" stop-color="#909093"/></linearGradient><linearGradient id="g132" gradientUnits="userSpaceOnUse" x1="469.5" y1="470.7" x2="523.2" y2="461.2"><stop offset="0" stop-color="#4a4a4c"/><stop offset="0.28" stop-color="#79797b"/><stop offset="0.66" stop-color="#9a9a9d"/><stop offset="1" stop-color="#909092"/></linearGradient><linearGradient id="g133" gradientUnits="userSpaceOnUse" x1="470.7" y1="476.9" x2="524.4" y2="469.3"><stop offset="0" stop-color="#49494b"/><stop offset="0.28" stop-color="#78787a"/><stop offset="0.66" stop-color="#98989a"/><stop offset="1" stop-color="#8e8e91"/></linearGradient><linearGradient id="g134" gradientUnits="userSpaceOnUse" x1="471.8" y1="483.1" x2="525.4" y2="477.4"><stop offset="0" stop-color="#49494b"/><stop offset="0.28" stop-color="#777779"/><stop offset="0.66" stop-color="#969698"/><stop offset="1" stop-color="#8e8e90"/></linearGradient><linearGradient id="g135" gradientUnits="userSpaceOnUse" x1="472.6" y1="489.3" x2="526.2" y2="485.6"><stop offset="0" stop-color="#49494b"/><stop offset="0.28" stop-color="#767678"/><stop offset="0.66" stop-color="#949496"/><stop offset="1" stop-color="#8c8c8f"/></linearGradient><linearGradient id="g136" gradientUnits="userSpaceOnUse" x1="473.3" y1="495.6" x2="526.8" y2="493.7"><stop offset="0" stop-color="#48484a"/><stop offset="0.28" stop-color="#757577"/><stop offset="0.66" stop-color="#919194"/><stop offset="1" stop-color="#8c8c8e"/></linearGradient><linearGradient id="g137" gradientUnits="userSpaceOnUse" x1="473.8" y1="501.9" x2="527.3" y2="501.9"><stop offset="0" stop-color="#48484a"/><stop offset="0.28" stop-color="#747476"/><stop offset="0.66" stop-color="#8f8f91"/><stop offset="1" stop-color="#8a8a8d"/></linearGradient><linearGradient id="g138" gradientUnits="userSpaceOnUse" x1="488" y1="700" x2="537" y2="697"><stop offset="0" stop-color="#4a4a4c"/><stop offset="0.55" stop-color="#828284"/><stop offset="1" stop-color="#8b8b8d"/></linearGradient><linearGradient id="g139" gradientUnits="userSpaceOnUse" x1="325" y1="415" x2="315" y2="442"><stop offset="0" stop-color="#58585a"/><stop offset="1" stop-color="#808082"/></linearGradient><linearGradient id="g140" gradientUnits="userSpaceOnUse" x1="262" y1="600" x2="313" y2="597"><stop offset="0" stop-color="#4e4e50"/><stop offset="0.6" stop-color="#838385"/><stop offset="1" stop-color="#8d8d8f"/></linearGradient><linearGradient id="g141" gradientUnits="userSpaceOnUse" x1="275" y1="384" x2="272" y2="446"><stop offset="0" stop-color="#454547"/><stop offset="0.5" stop-color="#5e5e60"/><stop offset="1" stop-color="#808082"/></linearGradient><linearGradient id="g142" gradientUnits="userSpaceOnUse" x1="335" y1="412" x2="325" y2="432"><stop offset="0" stop-color="#3e3e40"/><stop offset="0.6" stop-color="#4a4a4c"/><stop offset="1" stop-color="#5e5e60"/></linearGradient></defs><rect width="1624" height="1104" fill="#1a1a1a"/>
<path d="M-449963.8,22808.4 L-9719.0,141.0 M-448717.1,22813.9 L-9648.4,138.7 M-447470.5,22819.3 L-9578.5,136.4 M-446223.9,22824.8 L-9509.3,134.2 M-444977.2,22830.3 L-9440.9,132.0 M-443730.6,22835.7 L-9373.1,129.8 M545899.8,27176.2 L524148.9,26074.6 M-442484.0,22841.2 L-9306.1,127.6 M544356.9,27169.5 L395413.6,19606.2 M-441237.4,22846.7 L-9239.7,125.5 M542814.1,27162.7 L317371.6,15684.9 M-439990.7,22852.1 L-9174.0,123.4 M541271.2,27155.9 L265005.7,13053.7 M-437497.5,22863.1 L-9044.7,119.2 M538185.4,27142.4 L199164.3,9745.4 M-436250.9,22868.5 L-8981.0,117.1 M536642.5,27135.6 L177121.7,8637.9 M-435004.2,22874.0 L-8917.9,115.1 M535099.6,27128.9 L159453.1,7750.1 M-433757.6,22879.5 L-8855.5,113.0 M533556.7,27122.1 L144974.0,7022.6 M-432511.0,22885.0 L-8793.7,111.0 M532013.8,27115.3 L132892.4,6415.5 M-431264.4,22890.4 L-8732.5,109.1 M530470.9,27108.6 L122658.2,5901.3 M-430017.7,22895.9 L-8671.9,107.1 M528928.0,27101.8 L113877.9,5460.1 M-428771.1,22901.4 L-8611.9,105.2 M527385.1,27095.0 L106262.1,5077.5 M-427524.5,22906.8 L-8552.5,103.2 M525842.2,27088.3 L99593.7,4742.4 M-425031.2,22917.8 L-8435.3,99.4 M522756.4,27074.7 L88469.8,4183.5 M-423784.6,22923.2 L-8377.6,97.6 M521213.6,27068.0 L83782.5,3948.0 M-422538.0,22928.7 L-8320.4,95.7 M519670.7,27061.2 L79562.0,3735.9 M-421291.4,22934.2 L-8263.8,93.9 M518127.8,27054.4 L75742.0,3544.0 M-420044.7,22939.6 L-8207.7,92.1 M516584.9,27047.7 L72268.0,3369.4 M-418798.1,22945.1 L-8152.2,90.3 M515042.0,27040.9 L69095.1,3210.0 M-417551.5,22950.6 L-8097.1,88.5 M513499.1,27034.1 L66185.7,3063.8 M-416304.9,22956.0 L-8042.6,86.7 M511956.2,27027.4 L63508.3,2929.3 M-415058.2,22961.5 L-7988.6,85.0 M510413.3,27020.6 L61036.3,2805.1 M-412565.0,22972.4 L-7882.0,81.5 M507327.5,27007.1 L56620.4,2583.2 M-411318.3,22977.9 L-7829.5,79.8 M505784.6,27000.3 L54640.3,2483.7 M-410071.7,22983.4 L-7777.4,78.2 M504241.7,26993.5 L52791.8,2390.8 M-408825.1,22988.8 L-7725.8,76.5 M502698.8,26986.7 L51062.3,2303.9 M-407578.5,22994.3 L-7674.7,74.8 M501155.9,26980.0 L49440.6,2222.4 M-406331.8,22999.8 L-7624.0,73.2 M499613.0,26973.2 L47917.0,2145.9 M-405085.2,23005.2 L-7573.8,71.6 M498070.2,26966.4 L46482.7,2073.8 M-403838.6,23010.7 L-7524.0,70.0 M496527.3,26959.7 L45130.3,2005.8 M-402592.0,23016.2 L-7474.7,68.4 M494984.4,26952.9 L43852.8,1941.7 M-400098.7,23027.1 L-7377.3,65.2 M491898.6,26939.4 L41499.1,1823.4 M-398852.1,23032.6 L-7329.3,63.7 M490355.7,26932.6 L40412.6,1768.8 M-397605.5,23038.0 L-7281.7,62.1 M488812.8,26925.8 L39380.4,1716.9 M-396358.8,23043.5 L-7234.5,60.6 M487269.9,26919.1 L38398.3,1667.6 M-395112.2,23049.0 L-7187.7,59.1 M485727.0,26912.3 L37463.0,1620.6 M-393865.6,23054.4 L-7141.3,57.6 M484184.1,26905.5 L36571.1,1575.8 M-392619.0,23059.9 L-7095.3,56.1 M482641.2,26898.8 L35719.6,1533.0 M-391372.3,23065.4 L-7049.7,54.6 M481098.3,26892.0 L34905.9,1492.1 M-390125.7,23070.9 L-7004.4,53.1 M479555.4,26885.2 L34127.6,1453.0 M-387632.5,23081.8 L-6915.1,50.3 M476469.7,26871.7 L32668.0,1379.7 M-386385.8,23087.3 L-6871.1,48.8 M474926.8,26864.9 L31982.8,1345.2 M-385139.2,23092.7 L-6827.3,47.4 M473383.9,26858.2 L31325.0,1312.2 M-383892.6,23098.2 L-6784.0,46.0 M471841.0,26851.4 L30692.9,1280.4 M-382646.0,23103.7 L-6741.0,44.6 M470298.1,26844.6 L30085.2,1249.9 M-381399.3,23109.1 L-6698.3,43.2 M468755.2,26837.9 L29500.3,1220.5 M-380152.7,23114.6 L-6656.1,41.9 M467212.3,26831.1 L28937.0,1192.2 M-378906.1,23120.1 L-6614.1,40.5 M465669.4,26824.3 L28394.2,1164.9 M-377659.4,23125.5 L-6572.5,39.2 M464126.5,26817.6 L27870.8,1138.6 M-375166.2,23136.5 L-6490.3,36.5 M461040.7,26804.0 L26878.0,1088.7 M-373919.6,23141.9 L-6449.7,35.2 M459497.8,26797.3 L26406.8,1065.1 M-372672.9,23147.4 L-6409.4,33.9 M457954.9,26790.5 L25951.2,1042.2 M-371426.3,23152.9 L-6369.5,32.6 M456412.0,26783.7 L25510.6,1020.0 M-370179.7,23158.3 L-6329.8,31.3 M454869.2,26777.0 L25084.2,998.6 M-368933.1,23163.8 L-6290.5,30.0 M453326.3,26770.2 L24671.4,977.9 M-367686.4,23169.3 L-6251.5,28.8 M451783.4,26763.4 L24271.4,957.8 M-366439.8,23174.7 L-6212.8,27.5 M450240.5,26756.7 L23883.7,938.3 M-365193.2,23180.2 L-6174.4,26.3 M448697.6,26749.9 L23507.7,919.4 M-362699.9,23191.1 L-6098.5,23.8 M445611.8,26736.4 L22788.9,883.3 M-361453.3,23196.6 L-6060.9,22.6 M444068.9,26729.6 L22445.1,866.0 M-360206.7,23202.1 L-6023.7,21.4 M442526.0,26722.8 L22111.1,849.2 M-358960.1,23207.5 L-5986.8,20.2 M440983.1,26716.1 L21786.5,832.9 M-357713.4,23213.0 L-5950.1,19.0 M439440.2,26709.3 L21471.0,817.1 M-356466.8,23218.5 L-5913.7,17.9 M437897.3,26702.5 L21164.0,801.6 M-355220.2,23223.9 L-5877.6,16.7 M436354.4,26695.8 L20865.4,786.6 M-353973.6,23229.4 L-5841.8,15.5 M434811.5,26689.0 L20574.7,772.0 M-352726.9,23234.9 L-5806.2,14.4 M433268.7,26682.2 L20291.6,757.8 M-350233.7,23245.8 L-5735.9,12.1 M430182.9,26668.7 L19747.2,730.5 M-348987.0,23251.3 L-5701.1,11.0 M428640.0,26661.9 L19485.4,717.3 M-347740.4,23256.8 L-5666.6,9.9 M427097.1,26655.2 L19230.1,704.5 M-346493.8,23262.2 L-5632.4,8.7 M425554.2,26648.4 L18981.1,692.0 M-345247.2,23267.7 L-5598.4,7.6 M424011.3,26641.6 L18738.1,679.7 M-344000.5,23273.2 L-5564.6,6.6 M422468.4,26634.9 L18501.0,667.8 M-342753.9,23278.6 L-5531.1,5.5 M420925.5,26628.1 L18269.5,656.2 M-341507.3,23284.1 L-5497.8,4.4 M419382.6,26621.3 L18043.5,644.8 M-340260.7,23289.6 L-5464.8,3.3 M417839.7,26614.6 L17822.8,633.8 M-337767.4,23300.5 L-5399.5,1.2 M414753.9,26601.0 L17396.3,612.3 M-336520.8,23306.0 L-5367.2,0.2 M413211.0,26594.3 L17190.2,602.0 M-335274.2,23311.4 L-5335.1,-0.9 M411668.1,26587.5 L16988.7,591.8 M-334027.5,23316.9 L-5303.2,-1.9 M410125.3,26580.7 L16791.6,581.9 M-332780.9,23322.4 L-5271.6,-2.9 M408582.4,26574.0 L16598.8,572.3 M-331534.3,23327.8 L-5240.2,-3.9 M407039.5,26567.2 L16410.2,562.8 M-330287.7,23333.3 L-5209.0,-5.0 M405496.6,26560.4 L16225.6,553.5 M-329041.0,23338.8 L-5178.1,-6.0 M403953.7,26553.7 L16044.8,544.4 M-327794.4,23344.2 L-5147.3,-6.9 M402410.8,26546.9 L15867.8,535.5 M-325301.2,23355.2 L-5086.5,-8.9 M399325.0,26533.4 L15524.7,518.3 M-324054.5,23360.6 L-5056.4,-9.9 M397782.1,26526.6 L15358.3,509.9 M-322807.9,23366.1 L-5026.5,-10.9 M396239.2,26519.8 L15195.2,501.7 M-321561.3,23371.6 L-4996.8,-11.8 M394696.3,26513.1 L15035.4,493.7 M-320314.7,23377.0 L-4967.3,-12.8 M393153.4,26506.3 L14878.7,485.8 M-319068.0,23382.5 L-4938.0,-13.7 M391610.5,26499.5 L14725.1,478.1 M-317821.4,23388.0 L-4908.9,-14.7 M390067.6,26492.8 L14574.4,470.5 M-316574.8,23393.4 L-4880.0,-15.6 M388524.8,26486.0 L14426.5,463.1 M-315328.1,23398.9 L-4851.3,-16.5 M386981.9,26479.2 L14281.5,455.8 M-312834.9,23409.8 L-4794.5,-18.4 M383896.1,26465.7 L13999.4,441.7 M-311588.3,23415.3 L-4766.4,-19.3 M382353.2,26458.9 L13862.3,434.8 M-310341.6,23420.8 L-4738.4,-20.2 M380810.3,26452.2 L13727.6,428.0 M-309095.0,23426.2 L-4710.7,-21.1 M379267.4,26445.4 L13595.4,421.4 M-307848.4,23431.7 L-4683.1,-22.0 M377724.5,26438.6 L13465.5,414.8 M-306601.8,23437.2 L-4655.8,-22.9 M376181.6,26431.8 L13338.0,408.4 M-305355.1,23442.7 L-4628.6,-23.7 M374638.7,26425.1 L13212.6,402.1 M-304108.5,23448.1 L-4601.5,-24.6 M373095.8,26418.3 L13089.5,395.9 M-302861.9,23453.6 L-4574.7,-25.5 M371552.9,26411.5 L12968.4,389.8 M-300368.6,23464.5 L-4521.5,-27.2 M368467.1,26398.0 L12732.5,378.0 M-299122.0,23470.0 L-4495.2,-28.0 M366924.3,26391.2 L12617.5,372.2 M-297875.4,23475.5 L-4469.0,-28.9 M365381.4,26384.5 L12504.5,366.5 M-296628.8,23480.9 L-4443.1,-29.7 M363838.5,26377.7 L12393.3,360.9 M-295382.1,23486.4 L-4417.2,-30.6 M362295.6,26370.9 L12283.9,355.5 M-294135.5,23491.9 L-4391.6,-31.4 M360752.7,26364.2 L12176.3,350.0 M-292888.9,23497.3 L-4366.1,-32.2 M359209.8,26357.4 L12070.4,344.7 M-291642.3,23502.8 L-4340.8,-33.0 M357666.9,26350.6 L11966.2,339.5 M-290395.6,23508.3 L-4315.6,-33.9 M356124.0,26343.9 L11863.7,334.3 M-287902.4,23519.2 L-4265.7,-35.5 M353038.2,26330.3 L11663.5,324.3 M-286655.8,23524.7 L-4241.0,-36.3 M351495.3,26323.6 L11565.7,319.4 M-285409.1,23530.1 L-4216.5,-37.1 M349952.4,26316.8 L11469.4,314.5 M-284162.5,23535.6 L-4192.1,-37.9 M348409.5,26310.0 L11374.5,309.8 M-282915.9,23541.1 L-4167.9,-38.6 M346866.6,26303.3 L11281.2,305.1 M-281669.2,23546.5 L-4143.8,-39.4 M345323.8,26296.5 L11189.2,300.4 M-280422.6,23552.0 L-4119.8,-40.2 M343780.9,26289.7 L11098.6,295.9 M-279176.0,23557.5 L-4096.1,-41.0 M342238.0,26283.0 L11009.3,291.4 M-277929.4,23562.9 L-4072.4,-41.7 M340695.1,26276.2 L10921.3,287.0 M-275436.1,23573.9 L-4025.6,-43.2 M337609.3,26262.7 L10749.2,278.3 M-274189.5,23579.3 L-4002.3,-44.0 M336066.4,26255.9 L10665.1,274.1 M-272942.9,23584.8 L-3979.3,-44.7 M334523.5,26249.1 L10582.1,269.9 M-271696.2,23590.3 L-3956.3,-45.5 M332980.6,26242.4 L10500.2,265.8 M-270449.6,23595.7 L-3933.6,-46.2 M331437.7,26235.6 L10419.6,261.8 M-269203.0,23601.2 L-3910.9,-47.0 M329894.8,26228.8 L10340.1,257.8 M-267956.4,23606.7 L-3888.4,-47.7 M328351.9,26222.1 L10261.6,253.8 M-266709.7,23612.2 L-3866.0,-48.4 M326809.0,26215.3 L10184.3,250.0 M-265463.1,23617.6 L-3843.7,-49.1 M325266.1,26208.5 L10108.0,246.1 M-262969.9,23628.6 L-3799.6,-50.6 M322180.4,26195.0 L9958.5,238.6 M-261723.2,23634.0 L-3777.8,-51.3 M320637.5,26188.2 L9885.3,234.9 M-260476.6,23639.5 L-3756.0,-52.0 M319094.6,26181.5 L9813.0,231.3 M-259230.0,23645.0 L-3734.4,-52.7 M317551.7,26174.7 L9741.7,227.7 M-257983.4,23650.4 L-3713.0,-53.4 M316008.8,26167.9 L9671.3,224.2 M-256736.7,23655.9 L-3691.6,-54.1 M314465.9,26161.2 L9601.9,220.7 M-255490.1,23661.4 L-3670.4,-54.7 M312923.0,26154.4 L9533.3,217.2 M-254243.5,23666.8 L-3649.3,-55.4 M311380.1,26147.6 L9465.7,213.8 M-252996.9,23672.3 L-3628.3,-56.1 M309837.2,26140.9 L9398.9,210.5 M-250503.6,23683.2 L-3586.7,-57.4 M306751.4,26127.3 L9267.8,203.9 M-249257.0,23688.7 L-3566.1,-58.1 M305208.5,26120.6 L9203.5,200.7 M-248010.3,23694.2 L-3545.6,-58.8 M303665.6,26113.8 L9140.0,197.5 M-246763.7,23699.6 L-3525.2,-59.4 M302122.7,26107.0 L9077.3,194.3 M-245517.1,23705.1 L-3504.9,-60.1 M300579.9,26100.3 L9015.4,191.2 M-244270.5,23710.6 L-3484.8,-60.7 M299037.0,26093.5 L8954.2,188.1 M-243023.8,23716.0 L-3464.7,-61.4 M297494.1,26086.7 L8893.8,185.1 M-241777.2,23721.5 L-3444.8,-62.0 M295951.2,26080.0 L8834.1,182.1 M-240530.6,23727.0 L-3425.0,-62.7 M294408.3,26073.2 L8775.1,179.2 M-238037.3,23737.9 L-3385.7,-64.0 M291322.5,26059.7 L8659.3,173.3 M-236790.7,23743.4 L-3366.2,-64.6 M289779.6,26052.9 L8602.4,170.5 M-235544.1,23748.8 L-3346.8,-65.2 M288236.7,26046.1 L8546.2,167.6 M-234297.5,23754.3 L-3327.5,-65.8 M286693.8,26039.4 L8490.6,164.9 M-233050.8,23759.8 L-3308.4,-66.5 M285150.9,26032.6 L8435.7,162.1 M-231804.2,23765.2 L-3289.3,-67.1 M283608.0,26025.8 L8381.4,159.4 M-230557.6,23770.7 L-3270.4,-67.7 M282065.1,26019.1 L8327.7,156.7 M-229311.0,23776.2 L-3251.5,-68.3 M280522.2,26012.3 L8274.7,154.0 M-228064.3,23781.6 L-3232.8,-68.9 M278979.4,26005.5 L8222.2,151.4 M-225571.1,23792.6 L-3195.6,-70.1 M275893.6,25992.0 L8119.1,146.2 M-224324.5,23798.1 L-3177.1,-70.7 M274350.7,25985.2 L8068.4,143.6 M-223077.8,23803.5 L-3158.8,-71.3 M272807.8,25978.5 L8018.3,141.1 M-221831.2,23809.0 L-3140.6,-71.9 M271264.9,25971.7 L7968.7,138.6 M-220584.6,23814.5 L-3122.4,-72.5 M269722.0,25964.9 L7919.7,136.2 M-219338.0,23819.9 L-3104.4,-73.1 M268179.1,25958.2 L7871.2,133.7 M-218091.3,23825.4 L-3086.4,-73.6 M266636.2,25951.4 L7823.2,131.3 M-216844.7,23830.9 L-3068.6,-74.2 M265093.3,25944.6 L7775.7,128.9 M-215598.1,23836.3 L-3050.8,-74.8 M263550.4,25937.9 L7728.8,126.6 M-213104.8,23847.3 L-3015.6,-75.9 M260464.6,25924.3 L7636.4,121.9 M-211858.2,23852.7 L-2998.1,-76.5 M258921.7,25917.6 L7590.9,119.6 M-210611.6,23858.2 L-2980.7,-77.1 M257378.8,25910.8 L7545.9,117.4 M-209364.9,23863.7 L-2963.4,-77.6 M255836.0,25904.0 L7501.4,115.2 M-208118.3,23869.1 L-2946.2,-78.2 M254293.1,25897.3 L7457.4,112.9 M-206871.7,23874.6 L-2929.1,-78.7 M252750.2,25890.5 L7413.8,110.7 M-205625.1,23880.1 L-2912.1,-79.3 M251207.3,25883.7 L7370.6,108.6 M-204378.4,23885.5 L-2895.1,-79.8 M249664.4,25876.9 L7327.9,106.4 M-203131.8,23891.0 L-2878.3,-80.4 M248121.5,25870.2 L7285.7,104.3 M-200638.6,23901.9 L-2844.9,-81.5 M245035.7,25856.6 L7202.4,100.1 M-199391.9,23907.4 L-2828.3,-82.0 M243492.8,25849.9 L7161.4,98.1 M-198145.3,23912.9 L-2811.8,-82.5 M241949.9,25843.1 L7120.8,96.0 M-196898.7,23918.3 L-2795.3,-83.1 M240407.0,25836.3 L7080.6,94.0 M-195652.1,23923.8 L-2779.0,-83.6 M238864.1,25829.6 L7040.8,92.0 M-194405.4,23929.3 L-2762.8,-84.1 M237321.2,25822.8 L7001.4,90.0 M-193158.8,23934.7 L-2746.6,-84.6 M235778.3,25816.0 L6962.4,88.1 M-191912.2,23940.2 L-2730.5,-85.2 M234235.5,25809.3 L6923.8,86.1 M-190665.6,23945.7 L-2714.5,-85.7 M232692.6,25802.5 L6885.5,84.2 M-188172.3,23956.6 L-2682.7,-86.7 M229606.8,25789.0 L6810.1,80.4 M-186925.7,23962.1 L-2667.0,-87.2 M228063.9,25782.2 L6773.0,78.6 M-185679.1,23967.5 L-2651.3,-87.7 M226521.0,25775.4 L6736.2,76.7 M-184432.4,23973.0 L-2635.7,-88.2 M224978.1,25768.7 L6699.7,74.9 M-183185.8,23978.5 L-2620.1,-88.7 M223435.2,25761.9 L6663.6,73.1 M-181939.2,23984.0 L-2604.7,-89.2 M221892.3,25755.1 L6627.8,71.3 M-180692.5,23989.4 L-2589.3,-89.7 M220349.4,25748.4 L6592.4,69.5 M-179445.9,23994.9 L-2574.0,-90.2 M218806.5,25741.6 L6557.2,67.7 M-178199.3,24000.4 L-2558.8,-90.7 M217263.6,25734.8 L6522.5,66.0 M-175706.0,24011.3 L-2528.6,-91.7 M214177.8,25721.3 L6453.8,62.5 M-174459.4,24016.8 L-2513.5,-92.2 M212635.0,25714.5 L6420.0,60.8 M-173212.8,24022.2 L-2498.6,-92.7 M211092.1,25707.8 L6386.5,59.1 M-171966.2,24027.7 L-2483.8,-93.1 M209549.2,25701.0 L6353.2,57.5 M-170719.5,24033.2 L-2469.0,-93.6 M208006.3,25694.2 L6320.3,55.8 M-169472.9,24038.6 L-2454.3,-94.1 M206463.4,25687.5 L6287.7,54.2 M-168226.3,24044.1 L-2439.6,-94.6 M204920.5,25680.7 L6255.3,52.5 M-166979.7,24049.6 L-2425.1,-95.0 M203377.6,25673.9 L6223.3,50.9 M-165733.0,24055.0 L-2410.6,-95.5 M201834.7,25667.2 L6191.5,49.3 M-163239.8,24066.0 L-2381.8,-96.4 M198748.9,25653.6 L6128.8,46.2 M-161993.2,24071.4 L-2367.5,-96.9 M197206.0,25646.9 L6097.8,44.6 M-160746.5,24076.9 L-2353.2,-97.4 M195663.1,25640.1 L6067.2,43.1 M-159499.9,24082.4 L-2339.1,-97.8 M194120.2,25633.3 L6036.7,41.6 M-158253.3,24087.8 L-2325.0,-98.3 M192577.3,25626.6 L6006.6,40.0 M-157006.7,24093.3 L-2311.0,-98.7 M191034.5,25619.8 L5976.7,38.5 M-155760.0,24098.8 L-2297.0,-99.2 M189491.6,25613.0 L5947.1,37.1 M-154513.4,24104.2 L-2283.1,-99.6 M187948.7,25606.3 L5917.7,35.6 M-153266.8,24109.7 L-2269.3,-100.1 M186405.8,25599.5 L5888.6,34.1 M-150773.5,24120.6 L-2241.8,-101.0 M183320.0,25586.0 L5831.0,31.2 M-149526.9,24126.1 L-2228.2,-101.4 M181777.1,25579.2 L5802.6,29.8 M-148280.3,24131.6 L-2214.6,-101.8 M180234.2,25572.4 L5774.5,28.4 M-147033.6,24137.0 L-2201.1,-102.3 M178691.3,25565.7 L5746.5,27.0 M-145787.0,24142.5 L-2187.7,-102.7 M177148.4,25558.9 L5718.8,25.6 M-144540.4,24148.0 L-2174.3,-103.2 M175605.5,25552.1 L5691.3,24.2 M-143293.8,24153.4 L-2161.0,-103.6 M174062.6,25545.4 L5664.1,22.8 M-142047.1,24158.9 L-2147.7,-104.0 M172519.7,25538.6 L5637.1,21.5 M-140800.5,24164.4 L-2134.5,-104.4 M170976.8,25531.8 L5610.2,20.1 M-138307.3,24175.3 L-2108.3,-105.3 M167891.1,25518.3 L5557.3,17.5 M-137060.6,24180.8 L-2095.3,-105.7 M166348.2,25511.5 L5531.1,16.2 M-135814.0,24186.3 L-2082.3,-106.1 M164805.3,25504.8 L5505.2,14.8 M-134567.4,24191.7 L-2069.4,-106.5 M163262.4,25498.0 L5479.4,13.6 M-133320.8,24197.2 L-2056.6,-107.0 M161719.5,25491.2 L5453.9,12.3 M-132074.1,24202.7 L-2043.8,-107.4 M160176.6,25484.5 L5428.5,11.0 M-130827.5,24208.1 L-2031.1,-107.8 M158633.7,25477.7 L5403.4,9.7 M-129580.9,24213.6 L-2018.4,-108.2 M157090.8,25470.9 L5378.4,8.5 M-128334.3,24219.1 L-2005.8,-108.6 M155547.9,25464.2 L5353.7,7.2 M-125841.0,24230.0 L-1980.8,-109.4 M152462.1,25450.6 L5304.7,4.8 M-124594.4,24235.5 L-1968.3,-109.8 M150919.2,25443.9 L5280.6,3.6 M-123347.8,24240.9 L-1955.9,-110.2 M149376.3,25437.1 L5256.6,2.4 M-122101.1,24246.4 L-1943.6,-110.6 M147833.4,25430.3 L5232.8,1.2 M-120854.5,24251.9 L-1931.3,-111.0 M146290.6,25423.6 L5209.1,-0.0 M-119607.9,24257.3 L-1919.1,-111.4 M144747.7,25416.8 L5185.7,-1.2 M-118361.3,24262.8 L-1906.9,-111.8 M143204.8,25410.0 L5162.4,-2.4 M-117114.6,24268.3 L-1894.8,-112.2 M141661.9,25403.3 L5139.3,-3.5 M-115868.0,24273.7 L-1882.7,-112.6 M140119.0,25396.5 L5116.4,-4.7 M-113374.7,24284.7 L-1858.8,-113.4 M137033.2,25383.0 L5071.1,-7.0 M-112128.1,24290.1 L-1846.9,-113.7 M135490.3,25376.2 L5048.6,-8.1 M-110881.5,24295.6 L-1835.0,-114.1 M133947.4,25369.4 L5026.4,-9.2 M-109634.9,24301.1 L-1823.2,-114.5 M132404.5,25362.7 L5004.3,-10.3 M-108388.2,24306.5 L-1811.5,-114.9 M130861.6,25355.9 L4982.4,-11.4 M-107141.6,24312.0 L-1799.8,-115.3 M129318.7,25349.1 L4960.6,-12.5 M-105895.0,24317.5 L-1788.1,-115.6 M127775.8,25342.4 L4939.0,-13.6 M-104648.4,24322.9 L-1776.5,-116.0 M126232.9,25335.6 L4917.6,-14.7 M-103401.7,24328.4 L-1765.0,-116.4 M124690.1,25328.8 L4896.3,-15.7 M-100908.5,24339.3 L-1742.0,-117.1 M121604.3,25315.3 L4854.2,-17.9 M-99661.9,24344.8 L-1730.6,-117.5 M120061.4,25308.5 L4833.3,-18.9 M-98415.2,24350.3 L-1719.3,-117.9 M118518.5,25301.7 L4812.7,-19.9 M-97168.6,24355.8 L-1708.0,-118.2 M116975.6,25295.0 L4792.1,-21.0 M-95922.0,24361.2 L-1696.7,-118.6 M115432.7,25288.2 L4771.7,-22.0 M-94675.4,24366.7 L-1685.5,-119.0 M113889.8,25281.4 L4751.5,-23.0 M-93428.7,24372.2 L-1674.3,-119.3 M112346.9,25274.7 L4731.4,-24.0 M-92182.1,24377.6 L-1663.2,-119.7 M110804.0,25267.9 L4711.4,-25.0 M-90935.5,24383.1 L-1652.1,-120.0 M109261.1,25261.1 L4691.6,-26.0 M-88442.2,24394.0 L-1630.1,-120.8 M106175.3,25247.6 L4652.4,-28.0 M-87195.6,24399.5 L-1619.2,-121.1 M104632.4,25240.8 L4632.9,-29.0 M-85949.0,24405.0 L-1608.3,-121.5 M103089.6,25234.1 L4613.7,-29.9 M-84702.3,24410.4 L-1597.5,-121.8 M101546.7,25227.3 L4594.5,-30.9 M-83455.7,24415.9 L-1586.7,-122.2 M100003.8,25220.5 L4575.5,-31.9 M-82209.1,24421.4 L-1575.9,-122.5 M98460.9,25213.8 L4556.6,-32.8 M-80962.5,24426.8 L-1565.2,-122.9 M96918.0,25207.0 L4537.8,-33.8 M-79715.8,24432.3 L-1554.6,-123.2 M95375.1,25200.2 L4519.2,-34.7 M-78469.2,24437.8 L-1544.0,-123.5 M93832.2,25193.5 L4500.7,-35.6 M-75976.0,24448.7 L-1522.9,-124.2 M90746.4,25179.9 L4464.1,-37.5 M-74729.3,24454.2 L-1512.4,-124.6 M89203.5,25173.2 L4445.9,-38.4 M-73482.7,24459.6 L-1501.9,-124.9 M87660.6,25166.4 L4427.9,-39.3 M-72236.1,24465.1 L-1491.5,-125.2 M86117.7,25159.6 L4410.0,-40.2 M-70989.5,24470.6 L-1481.2,-125.6 M84574.8,25152.9 L4392.2,-41.1 M-69742.8,24476.0 L-1470.9,-125.9 M83031.9,25146.1 L4374.6,-42.0 M-68496.2,24481.5 L-1460.6,-126.2 M81489.0,25139.3 L4357.0,-42.8 M-67249.6,24487.0 L-1450.3,-126.6 M79946.2,25132.6 L4339.6,-43.7 M-66003.0,24492.4 L-1440.2,-126.9 M78403.3,25125.8 L4322.3,-44.6 M-63509.7,24503.4 L-1419.9,-127.6 M75317.5,25112.3 L4288.0,-46.3 M-62263.1,24508.8 L-1409.8,-127.9 M73774.6,25105.5 L4271.0,-47.2 M-61016.5,24514.3 L-1399.8,-128.2 M72231.7,25098.7 L4254.2,-48.0 M-59769.8,24519.8 L-1389.8,-128.5 M70688.8,25092.0 L4237.4,-48.9 M-58523.2,24525.2 L-1379.9,-128.9 M69145.9,25085.2 L4220.7,-49.7 M-57276.6,24530.7 L-1369.9,-129.2 M67603.0,25078.4 L4204.2,-50.5 M-56030.0,24536.2 L-1360.1,-129.5 M66060.1,25071.7 L4187.8,-51.3 M-54783.3,24541.7 L-1350.2,-129.8 M64517.2,25064.9 L4171.4,-52.2 M-53536.7,24547.1 L-1340.4,-130.1 M62974.3,25058.1 L4155.2,-53.0 M-51043.4,24558.1 L-1321.0,-130.8 M59888.5,25044.6 L4123.0,-54.6 M-49796.8,24563.5 L-1311.3,-131.1 M58345.7,25037.8 L4107.1,-55.4 M-48550.2,24569.0 L-1301.7,-131.4 M56802.8,25031.1 L4091.3,-56.2 M-47303.6,24574.5 L-1292.1,-131.7 M55259.9,25024.3 L4075.5,-57.0 M-46056.9,24579.9 L-1282.5,-132.0 M53717.0,25017.5 L4059.9,-57.8 M-44810.3,24585.4 L-1273.0,-132.3 M52174.1,25010.8 L4044.3,-58.6 M-43563.7,24590.9 L-1263.5,-132.6 M50631.2,25004.0 L4028.9,-59.3 M-42317.1,24596.3 L-1254.0,-132.9 M49088.3,24997.2 L4013.6,-60.1 M-41070.4,24601.8 L-1244.6,-133.2 M47545.4,24990.5 L3998.3,-60.9 M-38577.2,24612.7 L-1225.9,-133.8 M44459.6,24976.9 L3968.1,-62.4 M-37330.6,24618.2 L-1216.6,-134.1 M42916.7,24970.2 L3953.1,-63.1 M-36083.9,24623.7 L-1207.3,-134.4 M41373.8,24963.4 L3938.2,-63.9 M-34837.3,24629.1 L-1198.1,-134.7 M39830.9,24956.6 L3923.4,-64.6 M-33590.7,24634.6 L-1188.9,-135.0 M38288.0,24949.9 L3908.7,-65.4 M-32344.1,24640.1 L-1179.7,-135.3 M36745.2,24943.1 L3894.1,-66.1 M-31097.4,24645.5 L-1170.6,-135.6 M35202.3,24936.3 L3879.6,-66.8 M-29850.8,24651.0 L-1161.5,-135.9 M33659.4,24929.6 L3865.1,-67.6 M-28604.2,24656.5 L-1152.4,-136.2 M32116.5,24922.8 L3850.8,-68.3 M-26110.9,24667.4 L-1134.4,-136.8 M29030.7,24909.3 L3822.3,-69.7 M-24864.3,24672.9 L-1125.4,-137.1 M27487.8,24902.5 L3808.2,-70.4 M-23617.7,24678.3 L-1116.5,-137.4 M25944.9,24895.7 L3794.2,-71.1 M-22371.1,24683.8 L-1107.6,-137.7 M24402.0,24889.0 L3780.3,-71.8 M-21124.4,24689.3 L-1098.8,-138.0 M22859.1,24882.2 L3766.4,-72.5 M-19877.8,24694.7 L-1089.9,-138.2 M21316.2,24875.4 L3752.6,-73.2 M-18631.2,24700.2 L-1081.2,-138.5 M19773.3,24868.7 L3738.9,-73.9 M-17384.5,24705.7 L-1072.4,-138.8 M18230.4,24861.9 L3725.3,-74.6 M-16137.9,24711.1 L-1063.7,-139.1 M16687.5,24855.1 L3711.8,-75.3 M-13644.7,24722.1 L-1046.3,-139.7 M13601.8,24841.6 L3684.9,-76.6 M-12398.0,24727.6 L-1037.7,-139.9 M12058.9,24834.8 L3671.6,-77.3 M-11151.4,24733.0 L-1029.1,-140.2 M10516.0,24828.1 L3658.4,-77.9 M-9904.8,24738.5 L-1020.5,-140.5 M8973.1,24821.3 L3645.2,-78.6 M-8658.2,24744.0 L-1012.0,-140.8 M7430.2,24814.5 L3632.2,-79.3 M-7411.5,24749.4 L-1003.5,-141.0 M5887.3,24807.8 L3619.1,-79.9 M-6164.9,24754.9 L-995.0,-141.3 M4344.4,24801.0 L3606.2,-80.6 M-4918.3,24760.4 L-986.6,-141.6 M2801.5,24794.2 L3593.4,-81.2 M-3671.7,24765.8 L-978.2,-141.9 M1258.6,24787.5 L3580.6,-81.9 M-1178.4,24776.8 L-961.5,-142.4 M-1827.2,24773.9 L3555.2,-83.1 M68.2,24782.2 L-953.1,-142.7 M-3370.1,24767.1 L3542.6,-83.8 M1314.8,24787.7 L-944.9,-142.9 M-4913.0,24760.4 L3530.1,-84.4 M2561.5,24793.2 L-936.6,-143.2 M-6455.9,24753.6 L3517.7,-85.0 M3808.1,24798.6 L-928.4,-143.5 M-7998.7,24746.8 L3505.3,-85.6 M5054.7,24804.1 L-920.2,-143.7 M-9541.6,24740.1 L3493.0,-86.3 M6301.3,24809.6 L-912.0,-144.0 M-11084.5,24733.3 L3480.8,-86.9 M7548.0,24815.0 L-903.9,-144.3 M-12627.4,24726.5 L3468.6,-87.5 M8794.6,24820.5 L-895.8,-144.5 M-14170.3,24719.8 L3456.5,-88.1 M11287.8,24831.4 L-879.6,-145.0 M-17256.1,24706.2 L3432.5,-89.3 M12534.5,24836.9 L-871.6,-145.3 M-18799.0,24699.5 L3420.6,-89.9 M13781.1,24842.4 L-863.6,-145.6 M-20341.9,24692.7 L3408.8,-90.5 M15027.7,24847.8 L-855.7,-145.8 M-21884.8,24685.9 L3397.0,-91.1 M16274.4,24853.3 L-847.7,-146.1 M-23427.7,24679.2 L3385.3,-91.7 M17521.0,24858.8 L-839.8,-146.3 M-24970.6,24672.4 L3373.7,-92.3 M18767.6,24864.2 L-831.9,-146.6 M-26513.5,24665.6 L3362.1,-92.8 M20014.2,24869.7 L-824.1,-146.8 M-28056.4,24658.9 L3350.6,-93.4 M21260.9,24875.2 L-816.3,-147.1 M-29599.2,24652.1 L3339.1,-94.0 M23754.1,24886.1 L-800.7,-147.6 M-32685.0,24638.6 L3316.4,-95.1 M25000.7,24891.6 L-793.0,-147.8 M-34227.9,24631.8 L3305.1,-95.7 M26247.4,24897.0 L-785.3,-148.1 M-35770.8,24625.0 L3293.9,-96.3 M27494.0,24902.5 L-777.6,-148.3 M-37313.7,24618.3 L3282.7,-96.8 M28740.6,24908.0 L-769.9,-148.6 M-38856.6,24611.5 L3271.6,-97.4 M29987.2,24913.5 L-762.3,-148.8 M-40399.5,24604.7 L3260.5,-97.9 M31233.9,24918.9 L-754.7,-149.1 M-41942.4,24598.0 L3249.6,-98.5 M32480.5,24924.4 L-747.1,-149.3 M-43485.3,24591.2 L3238.6,-99.0 M33727.1,24929.9 L-739.5,-149.6 M-45028.2,24584.4 L3227.7,-99.6 M36220.4,24940.8 L-724.5,-150.1 M-48114.0,24570.9 L3206.2,-100.7 M37467.0,24946.3 L-717.0,-150.3 M-49656.9,24564.1 L3195.5,-101.2 M38713.6,24951.7 L-709.6,-150.5 M-51199.7,24557.4 L3184.8,-101.7 M39960.2,24957.2 L-702.2,-150.8 M-52742.6,24550.6 L3174.2,-102.3 M41206.9,24962.7 L-694.8,-151.0 M-54285.5,24543.8 L3163.7,-102.8 M42453.5,24968.1 L-687.4,-151.3 M-55828.4,24537.1 L3153.2,-103.3 M43700.1,24973.6 L-680.0,-151.5 M-57371.3,24530.3 L3142.7,-103.9 M44946.7,24979.1 L-672.7,-151.7 M-58914.2,24523.5 L3132.3,-104.4 M46193.4,24984.5 L-665.4,-152.0 M-60457.1,24516.8 L3122.0,-104.9 M48686.6,24995.5 L-650.9,-152.4 M-63542.9,24503.2 L3101.5,-105.9 M49933.3,25000.9 L-643.7,-152.7 M-65085.8,24496.5 L3091.3,-106.4 M51179.9,25006.4 L-636.5,-152.9 M-66628.7,24489.7 L3081.2,-106.9 M52426.5,25011.9 L-629.3,-153.1 M-68171.6,24482.9 L3071.1,-107.5 M53673.1,25017.3 L-622.2,-153.4 M-69714.5,24476.2 L3061.1,-108.0 M54919.8,25022.8 L-615.0,-153.6 M-71257.4,24469.4 L3051.1,-108.5 M56166.4,25028.3 L-607.9,-153.8 M-72800.3,24462.6 L3041.2,-109.0 M57413.0,25033.7 L-600.8,-154.1 M-74343.1,24455.9 L3031.3,-109.5 M58659.6,25039.2 L-593.8,-154.3 M-75886.0,24449.1 L3021.5,-109.9 M61152.9,25050.1 L-579.8,-154.7 M-78971.8,24435.6 L3002.0,-110.9 M62399.5,25055.6 L-572.8,-155.0 M-80514.7,24428.8 L2992.3,-111.4 M63646.1,25061.1 L-565.8,-155.2 M-82057.6,24422.0 L2982.7,-111.9 M64892.8,25066.5 L-558.9,-155.4 M-83600.5,24415.3 L2973.1,-112.4 M66139.4,25072.0 L-552.0,-155.6 M-85143.4,24408.5 L2963.5,-112.9 M67386.0,25077.5 L-545.1,-155.9 M-86686.3,24401.7 L2954.0,-113.3 M68632.6,25083.0 L-538.2,-156.1 M-88229.2,24395.0 L2944.6,-113.8 M69879.3,25088.4 L-531.4,-156.3 M-89772.1,24388.2 L2935.2,-114.3 M71125.9,25093.9 L-524.5,-156.5 M-91315.0,24381.4 L2925.8,-114.8 M73619.1,25104.8 L-511.0,-157.0 M-94400.8,24367.9 L2907.2,-115.7 M74865.8,25110.3 L-504.2,-157.2 M-95943.6,24361.1 L2898.0,-116.2 M76112.4,25115.8 L-497.5,-157.4 M-97486.5,24354.4 L2888.8,-116.6 M77359.0,25121.2 L-490.8,-157.6 M-99029.4,24347.6 L2879.7,-117.1 M78605.6,25126.7 L-484.1,-157.8 M-100572.3,24340.8 L2870.6,-117.5 M79852.3,25132.2 L-477.4,-158.1 M-102115.2,24334.1 L2861.5,-118.0 M81098.9,25137.6 L-470.7,-158.3 M-103658.1,24327.3 L2852.5,-118.4 M82345.5,25143.1 L-464.1,-158.5 M-105201.0,24320.5 L2843.5,-118.9 M83592.2,25148.6 L-457.5,-158.7 M-106743.9,24313.8 L2834.6,-119.3 M86085.4,25159.5 L-444.4,-159.1 M-109829.7,24300.2 L2816.9,-120.2 M87332.0,25165.0 L-437.8,-159.3 M-111372.6,24293.5 L2808.1,-120.7 M88578.7,25170.4 L-431.3,-159.6 M-112915.5,24286.7 L2799.3,-121.1 M89825.3,25175.9 L-424.8,-159.8 M-114458.4,24279.9 L2790.6,-121.5 M91071.9,25181.4 L-418.3,-160.0 M-116001.3,24273.2 L2781.9,-122.0 M92318.5,25186.8 L-411.9,-160.2 M-117544.1,24266.4 L2773.3,-122.4 M93565.2,25192.3 L-405.5,-160.4 M-119087.0,24259.6 L2764.7,-122.9 M94811.8,25197.8 L-399.0,-160.6 M-120629.9,24252.9 L2756.1,-123.3 M96058.4,25203.2 L-392.7,-160.8 M-122172.8,24246.1 L2747.6,-123.7 M98551.7,25214.2 L-379.9,-161.2 M-125258.6,24232.5 L2730.7,-124.6 M99798.3,25219.6 L-373.6,-161.4 M-126801.5,24225.8 L2722.3,-125.0 M101044.9,25225.1 L-367.3,-161.6 M-128344.4,24219.0 L2713.9,-125.4 M102291.5,25230.6 L-361.0,-161.8 M-129887.3,24212.2 L2705.6,-125.8 M103538.2,25236.0 L-354.7,-162.0 M-131430.2,24205.5 L2697.3,-126.2 M104784.8,25241.5 L-348.5,-162.2 M-132973.1,24198.7 L2689.0,-126.7 M106031.4,25247.0 L-342.2,-162.4 M-134516.0,24191.9 L2680.8,-127.1 M107278.0,25252.4 L-336.0,-162.6 M-136058.9,24185.2 L2672.6,-127.5 M108524.7,25257.9 L-329.8,-162.8 M-137601.8,24178.4 L2664.5,-127.9 M111017.9,25268.9 L-317.5,-163.2 M-140687.5,24164.9 L2648.3,-128.7 M112264.5,25274.3 L-311.4,-163.4 M-142230.4,24158.1 L2640.3,-129.1 M113511.2,25279.8 L-305.2,-163.6 M-143773.3,24151.3 L2632.3,-129.5 M114757.8,25285.3 L-299.1,-163.8 M-145316.2,24144.6 L2624.3,-129.9 M116004.4,25290.7 L-293.1,-164.0 M-146859.1,24137.8 L2616.4,-130.3 M117251.1,25296.2 L-287.0,-164.2 M-148402.0,24131.0 L2608.5,-130.7 M118497.7,25301.7 L-281.0,-164.4 M-149944.9,24124.3 L2600.6,-131.1 M119744.3,25307.1 L-274.9,-164.6 M-151487.8,24117.5 L2592.8,-131.5 M120990.9,25312.6 L-268.9,-164.8 M-153030.7,24110.7 L2585.0,-131.9 M123484.2,25323.5 L-257.0,-165.2 M-156116.5,24097.2 L2569.5,-132.7 M124730.8,25329.0 L-251.0,-165.4 M-157659.4,24090.4 L2561.8,-133.0 M125977.4,25334.5 L-245.1,-165.6 M-159202.3,24083.7 L2554.2,-133.4 M127224.1,25339.9 L-239.2,-165.8 M-160745.2,24076.9 L2546.6,-133.8 M128470.7,25345.4 L-233.3,-166.0 M-162288.0,24070.1 L2539.0,-134.2 M129717.3,25350.9 L-227.4,-166.1 M-163830.9,24063.4 L2531.4,-134.6 M130963.9,25356.3 L-221.6,-166.3 M-165373.8,24056.6 L2523.9,-134.9 M132210.6,25361.8 L-215.7,-166.5 M-166916.7,24049.8 L2516.4,-135.3 M133457.2,25367.3 L-209.9,-166.7 M-168459.6,24043.1 L2508.9,-135.7 M135950.4,25378.2 L-198.3,-167.1 M-171545.4,24029.5 L2494.1,-136.4 M137197.1,25383.7 L-192.6,-167.3 M-173088.3,24022.8 L2486.8,-136.8 M138443.7,25389.1 L-186.8,-167.5 M-174631.2,24016.0 L2479.4,-137.2 M139690.3,25394.6 L-181.1,-167.6 M-176174.1,24009.2 L2472.1,-137.5 M140936.9,25400.1 L-175.4,-167.8 M-177717.0,24002.5 L2464.9,-137.9 M142183.6,25405.5 L-169.7,-168.0 M-179259.9,23995.7 L2457.6,-138.3 M143430.2,25411.0 L-164.0,-168.2 M-180802.8,23988.9 L2450.4,-138.6 M144676.8,25416.5 L-158.3,-168.4 M-182345.7,23982.2 L2443.2,-139.0 M145923.4,25421.9 L-152.7,-168.6 M-183888.5,23975.4 L2436.1,-139.4 M148416.7,25432.9 L-141.4,-168.9 M-186974.3,23961.9 L2421.9,-140.1 M149663.3,25438.3 L-135.8,-169.1 M-188517.2,23955.1 L2414.8,-140.4 M150910.0,25443.8 L-130.3,-169.3 M-190060.1,23948.3 L2407.8,-140.8 M152156.6,25449.3 L-124.7,-169.5 M-191603.0,23941.6 L2400.8,-141.1 M153403.2,25454.8 L-119.1,-169.7 M-193145.9,23934.8 L2393.8,-141.5 M154649.8,25460.2 L-113.6,-169.8 M-194688.8,23928.0 L2386.9,-141.8 M155896.5,25465.7 L-108.1,-170.0 M-196231.7,23921.3 L2380.0,-142.2 M157143.1,25471.2 L-102.6,-170.2 M-197774.6,23914.5 L2373.1,-142.5 M158389.7,25476.6 L-97.1,-170.4 M-199317.5,23907.7 L2366.2,-142.9 M160883.0,25487.6 L-86.2,-170.7 M-202403.3,23894.2 L2352.6,-143.6 M162129.6,25493.0 L-80.8,-170.9 M-203946.2,23887.4 L2345.8,-143.9 M163376.2,25498.5 L-75.4,-171.1 M-205489.0,23880.7 L2339.1,-144.2 M164622.8,25504.0 L-70.0,-171.2 M-207031.9,23873.9 L2332.3,-144.6 M165869.5,25509.4 L-64.6,-171.4 M-208574.8,23867.1 L2325.7,-144.9 M167116.1,25514.9 L-59.2,-171.6 M-210117.7,23860.4 L2319.0,-145.2 M168362.7,25520.4 L-53.9,-171.8 M-211660.6,23853.6 L2312.4,-145.6 M169609.3,25525.8 L-48.5,-171.9 M-213203.5,23846.8 L2305.7,-145.9 M170856.0,25531.3 L-43.2,-172.1 M-214746.4,23840.1 L2299.2,-146.2 M173349.2,25542.2 L-32.6,-172.5 M-217832.2,23826.5 L2286.1,-146.9 M174595.8,25547.7 L-27.3,-172.6 M-219375.1,23819.8 L2279.6,-147.2 M175842.5,25553.2 L-22.1,-172.8 M-220918.0,23813.0 L2273.1,-147.6 M177089.1,25558.6 L-16.8,-173.0 M-222460.9,23806.2 L2266.6,-147.9 M178335.7,25564.1 L-11.6,-173.1 M-224003.8,23799.5 L2260.2,-148.2 M179582.3,25569.6 L-6.4,-173.3 M-225546.7,23792.7 L2253.8,-148.5 M180829.0,25575.0 L-1.2,-173.5 M-227089.6,23785.9 L2247.4,-148.8 M182075.6,25580.5 L4.0,-173.6 M-228632.4,23779.2 L2241.1,-149.2 M183322.2,25586.0 L9.2,-173.8 M-230175.3,23772.4 L2234.8,-149.5 M185815.5,25596.9 L19.5,-174.1 M-233261.1,23758.9 L2222.2,-150.1 M187062.1,25602.4 L24.6,-174.3 M-234804.0,23752.1 L2215.9,-150.4 M188308.7,25607.8 L29.7,-174.5 M-236346.9,23745.3 L2209.7,-150.7 M189555.4,25613.3 L34.8,-174.6 M-237889.8,23738.6 L2203.5,-151.0 M190802.0,25618.8 L39.9,-174.8 M-239432.7,23731.8 L2197.3,-151.4 M192048.6,25624.2 L45.0,-175.0 M-240975.6,23725.0 L2191.2,-151.7 M193295.2,25629.7 L50.0,-175.1 M-242518.5,23718.3 L2185.0,-152.0 M194541.9,25635.2 L55.1,-175.3 M-244061.4,23711.5 L2178.9,-152.3 M195788.5,25640.7 L60.1,-175.5 M-245604.3,23704.7 L2172.9,-152.6 M198281.7,25651.6 L70.1,-175.8 M-248690.1,23691.2 L2160.8,-153.2 M199528.4,25657.1 L75.1,-175.9 M-250232.9,23684.4 L2154.7,-153.5 M200775.0,25662.5 L80.0,-176.1 M-251775.8,23677.6 L2148.8,-153.8 M202021.6,25668.0 L85.0,-176.3 M-253318.7,23670.9 L2142.8,-154.1 M203268.2,25673.5 L89.9,-176.4 M-254861.6,23664.1 L2136.8,-154.4 M204514.9,25678.9 L94.9,-176.6 M-256404.5,23657.3 L2130.9,-154.7 M205761.5,25684.4 L99.8,-176.7 M-257947.4,23650.6 L2125.0,-155.0 M207008.1,25689.9 L104.7,-176.9 M-259490.3,23643.8 L2119.2,-155.3 M208254.7,25695.3 L109.6,-177.1 M-261033.2,23637.0 L2113.3,-155.6 M210748.0,25706.3 L119.3,-177.4 M-264119.0,23623.5 L2101.7,-156.2 M211994.6,25711.7 L124.1,-177.5 M-265661.9,23616.7 L2095.9,-156.5 M213241.3,25717.2 L129.0,-177.7 M-267204.8,23610.0 L2090.1,-156.7 M214487.9,25722.7 L133.8,-177.8 M-268747.7,23603.2 L2084.4,-157.0 M215734.5,25728.1 L138.6,-178.0 M-270290.6,23596.4 L2078.6,-157.3 M216981.1,25733.6 L143.4,-178.1 M-271833.4,23589.7 L2072.9,-157.6 M218227.8,25739.1 L148.2,-178.3 M-273376.3,23582.9 L2067.3,-157.9 M219474.4,25744.5 L152.9,-178.5 M-274919.2,23576.1 L2061.6,-158.2 M220721.0,25750.0 L157.7,-178.6 M-276462.1,23569.4 L2056.0,-158.5 M223214.3,25760.9 L167.1,-178.9 M-279547.9,23555.8 L2044.8,-159.0 M224460.9,25766.4 L171.8,-179.1 M-281090.8,23549.1 L2039.2,-159.3 M225707.5,25771.9 L176.5,-179.2 M-282633.7,23542.3 L2033.6,-159.6 M226954.1,25777.3 L181.2,-179.4 M-284176.6,23535.5 L2028.1,-159.9 M228200.8,25782.8 L185.9,-179.5 M-285719.5,23528.8 L2022.6,-160.1 M229447.4,25788.3 L190.6,-179.7 M-287262.4,23522.0 L2017.1,-160.4 M230694.0,25793.7 L195.2,-179.8 M-288805.3,23515.2 L2011.6,-160.7 M231940.6,25799.2 L199.9,-180.0 M-290348.2,23508.5 L2006.2,-161.0 M233187.3,25804.7 L204.5,-180.1 M-291891.1,23501.7 L2000.7,-161.2 M235680.5,25815.6 L213.7,-180.4 M-294976.8,23488.2 L1989.9,-161.8 M236927.1,25821.1 L218.3,-180.6 M-296519.7,23481.4 L1984.6,-162.0 M238173.8,25826.6 L222.8,-180.7 M-298062.6,23474.6 L1979.2,-162.3 M239420.4,25832.0 L227.4,-180.9 M-299605.5,23467.9 L1973.9,-162.6 M240667.0,25837.5 L231.9,-181.0 M-301148.4,23461.1 L1968.6,-162.9 M241913.6,25843.0 L236.5,-181.2 M-302691.3,23454.3 L1963.3,-163.1 M243160.3,25848.4 L241.0,-181.3 M-304234.2,23447.6 L1958.0,-163.4 M244406.9,25853.9 L245.5,-181.5 M-305777.1,23440.8 L1952.7,-163.6 M245653.5,25859.4 L250.0,-181.6 M-307320.0,23434.0 L1947.5,-163.9 M248146.8,25870.3 L259.0,-181.9 M-310405.8,23420.5 L1937.1,-164.4 M249393.4,25875.8 L263.4,-182.0 M-311948.7,23413.7 L1931.9,-164.7 M250640.0,25881.2 L267.9,-182.2 M-313491.6,23407.0 L1926.7,-165.0 M251886.7,25886.7 L272.3,-182.3 M-315034.5,23400.2 L1921.6,-165.2 M253133.3,25892.2 L276.8,-182.5 M-316577.3,23393.4 L1916.5,-165.5 M254379.9,25897.6 L281.2,-182.6 M-318120.2,23386.7 L1911.4,-165.7 M255626.5,25903.1 L285.6,-182.7 M-319663.1,23379.9 L1906.3,-166.0 M256873.2,25908.6 L290.0,-182.9 M-321206.0,23373.1 L1901.2,-166.2 M258119.8,25914.0 L294.4,-183.0 M-322748.9,23366.4 L1896.1,-166.5 M260613.0,25925.0 L303.1,-183.3 M-325834.7,23352.8 L1886.1,-167.0 M261859.7,25930.4 L307.4,-183.5 M-327377.6,23346.1 L1881.1,-167.2 M263106.3,25935.9 L311.8,-183.6 M-328920.5,23339.3 L1876.1,-167.5 M264352.9,25941.4 L316.1,-183.7 M-330463.4,23332.5 L1871.1,-167.7 M265599.5,25946.8 L320.4,-183.9 M-332006.3,23325.8 L1866.2,-168.0 M266846.2,25952.3 L324.7,-184.0 M-333549.2,23319.0 L1861.3,-168.2 M268092.8,25957.8 L329.0,-184.2 M-335092.1,23312.2 L1856.3,-168.5 M269339.4,25963.2 L333.3,-184.3 M-336635.0,23305.5 L1851.4,-168.7 M270586.0,25968.7 L337.5,-184.4 M-338177.8,23298.7 L1846.6,-169.0 M273079.3,25979.6 L346.0,-184.7 M-341263.6,23285.2 L1836.9,-169.5 M274325.9,25985.1 L350.3,-184.8 M-342806.5,23278.4 L1832.0,-169.7 M275572.5,25990.6 L354.5,-185.0 M-344349.4,23271.6 L1827.2,-170.0 M276819.2,25996.0 L358.7,-185.1 M-345892.3,23264.9 L1822.4,-170.2 M278065.8,26001.5 L362.9,-185.3 M-347435.2,23258.1 L1817.6,-170.4 M279312.4,26007.0 L367.1,-185.4 M-348978.1,23251.3 L1812.9,-170.7 M280559.1,26012.5 L371.3,-185.5 M-350521.0,23244.6 L1808.1,-170.9 M281805.7,26017.9 L375.5,-185.7 M-352063.9,23237.8 L1803.4,-171.2 M283052.3,26023.4 L379.6,-185.8 M-353606.8,23231.0 L1798.7,-171.4 M285545.6,26034.3 L387.9,-186.1 M-356692.6,23217.5 L1789.3,-171.9 M286792.2,26039.8 L392.0,-186.2 M-358235.5,23210.7 L1784.6,-172.1 M288038.8,26045.3 L396.1,-186.3 M-359778.3,23204.0 L1780.0,-172.3 M289285.4,26050.7 L400.2,-186.5 M-361321.2,23197.2 L1775.3,-172.6 M290532.1,26056.2 L404.3,-186.6 M-362864.1,23190.4 L1770.7,-172.8 M291778.7,26061.7 L408.4,-186.7 M-364407.0,23183.7 L1766.1,-173.0 M293025.3,26067.1 L412.5,-186.9 M-365949.9,23176.9 L1761.5,-173.3 M294271.9,26072.6 L416.6,-187.0 M-367492.8,23170.1 L1757.0,-173.5 M295518.6,26078.1 L420.6,-187.1 M-369035.7,23163.4 L1752.4,-173.7 M298011.8,26089.0 L428.7,-187.4 M-372121.5,23149.8 L1743.3,-174.2 M299258.4,26094.5 L432.7,-187.5 M-373664.4,23143.1 L1738.8,-174.4 M300505.1,26099.9 L436.7,-187.6 M-375207.3,23136.3 L1734.3,-174.6 M301751.7,26105.4 L440.7,-187.8 M-376750.2,23129.5 L1729.8,-174.8 M302998.3,26110.9 L444.7,-187.9 M-378293.1,23122.7 L1725.4,-175.1 M304244.9,26116.3 L448.7,-188.0 M-379836.0,23116.0 L1720.9,-175.3 M305491.6,26121.8 L452.7,-188.2 M-381378.8,23109.2 L1716.5,-175.5 M306738.2,26127.3 L456.6,-188.3 M-382921.7,23102.4 L1712.0,-175.7 M307984.8,26132.7 L460.6,-188.4 M-384464.6,23095.7 L1707.6,-176.0 M310478.1,26143.7 L468.4,-188.7 M-387550.4,23082.1 L1698.9,-176.4 M311724.7,26149.1 L472.4,-188.8 M-389093.3,23075.4 L1694.5,-176.6 M312971.3,26154.6 L476.3,-188.9 M-390636.2,23068.6 L1690.1,-176.8 M314218.0,26160.1 L480.2,-189.0 M-392179.1,23061.8 L1685.8,-177.1 M315464.6,26165.5 L484.1,-189.2 M-393722.0,23055.1 L1681.5,-177.3 M316711.2,26171.0 L488.0,-189.3 M-395264.9,23048.3 L1677.2,-177.5 M317957.8,26176.5 L491.8,-189.4 M-396807.8,23041.5 L1672.9,-177.7 M319204.5,26181.9 L495.7,-189.5 M-398350.7,23034.8 L1668.6,-177.9 M320451.1,26187.4 L499.6,-189.7 M-399893.6,23028.0 L1664.3,-178.1 M322944.3,26198.4 L507.2,-189.9 M-402979.4,23014.5 L1655.8,-178.6 M324191.0,26203.8 L511.1,-190.0 M-404522.2,23007.7 L1651.6,-178.8 M325437.6,26209.3 L514.9,-190.2 M-406065.1,23000.9 L1647.4,-179.0 M326684.2,26214.8 L518.7,-190.3 M-407608.0,22994.2 L1643.2,-179.2 M327930.8,26220.2 L522.5,-190.4 M-409150.9,22987.4 L1639.0,-179.4 M329177.5,26225.7 L526.3,-190.5 M-410693.8,22980.6 L1634.9,-179.6 M330424.1,26231.2 L530.0,-190.7 M-412236.7,22973.9 L1630.7,-179.8 M331670.7,26236.6 L533.8,-190.8 M-413779.6,22967.1 L1626.6,-180.0 M332917.3,26242.1 L537.6,-190.9 M-415322.5,22960.3 L1622.4,-180.2 M335410.6,26253.0 L545.1,-191.1 M-418408.3,22946.8 L1614.2,-180.7 M336657.2,26258.5 L548.8,-191.3 M-419951.2,22940.0 L1610.1,-180.9 M337903.8,26264.0 L552.5,-191.4 M-421494.1,22933.3 L1606.0,-181.1 M339150.5,26269.4 L556.2,-191.5 M-423037.0,22926.5 L1602.0,-181.3 M340397.1,26274.9 L559.9,-191.6 M-424579.9,22919.7 L1597.9,-181.5 M341643.7,26280.4 L563.6,-191.7 M-426122.7,22913.0 L1593.9,-181.7 M342890.3,26285.8 L567.3,-191.9 M-427665.6,22906.2 L1589.8,-181.9 M344137.0,26291.3 L571.0,-192.0 M-429208.5,22899.4 L1585.8,-182.1 M345383.6,26296.8 L574.7,-192.1 M-430751.4,22892.7 L1581.8,-182.3 M347876.9,26307.7 L582.0,-192.3 M-433837.2,22879.1 L1573.9,-182.7 M349123.5,26313.2 L585.6,-192.5 M-435380.1,22872.4 L1569.9,-182.9 M350370.1,26318.6 L589.3,-192.6 M-436923.0,22865.6 L1565.9,-183.1 M351616.7,26324.1 L592.9,-192.7 M-438465.9,22858.8 L1562.0,-183.3 M352863.4,26329.6 L596.5,-192.8 M-440008.8,22852.1 L1558.1,-183.5 M354110.0,26335.0 L600.1,-192.9 M-441551.7,22845.3 L1554.2,-183.7 M355356.6,26340.5 L603.7,-193.0 M-443094.6,22838.5 L1550.3,-183.9 M356603.2,26346.0 L607.3,-193.2 M-444637.5,22831.8 L1546.4,-184.1 M357849.9,26351.4 L610.9,-193.3 M-446180.4,22825.0 L1542.5,-184.3 M360343.1,26362.4 L618.0,-193.5 M-449266.1,22811.5 L1534.8,-184.6 M361589.7,26367.8 L621.6,-193.6 M-450809.0,22804.7 L1530.9,-184.8 M362836.4,26373.3 L625.1,-193.7 M-361062.4,18175.3 L1527.1,-185.0 M364083.0,26378.8 L628.7,-193.9 M-284369.2,14238.4 L1523.3,-185.2 M365329.6,26384.3 L632.2,-194.0 M-234607.8,11684.0 L1519.5,-185.4 M366576.2,26389.7 L635.7,-194.1 M-199710.8,9892.6 L1515.7,-185.6 M367822.9,26395.2 L639.2,-194.2 M-173883.5,8566.8 L1511.9,-185.8 M369069.5,26400.7 L642.7,-194.3 M-153996.6,7545.9 L1508.1,-186.0 M370316.1,26406.1 L646.2,-194.4 M-138212.1,6735.6 L1504.3,-186.2 M372809.4,26417.1 L653.2,-194.6 M-114740.9,5530.8 L1496.8,-186.6 M374056.0,26422.5 L656.7,-194.8 M-105778.5,5070.7 L1493.1,-186.7 M375302.6,26428.0 L660.1,-194.9 M-98124.9,4677.8 L1489.4,-186.9 M376549.2,26433.5 L663.6,-195.0 M-91513.0,4338.4 L1485.7,-187.1 M377795.9,26438.9 L667.0,-195.1 M-85743.6,4042.2 L1482.0,-187.3 M379042.5,26444.4 L670.5,-195.2 M-80665.3,3781.6 L1478.3,-187.5 M380289.1,26449.9 L673.9,-195.3 M-76161.0,3550.3 L1474.7,-187.7 M381535.8,26455.3 L677.3,-195.4 M-72138.6,3343.8 L1471.0,-187.9 M382782.4,26460.8 L680.8,-195.5 M-68524.6,3158.3 L1467.3,-188.0 M385275.6,26471.7 L687.6,-195.8 M-62296.1,2838.6 L1460.1,-188.4 M386522.3,26477.2 L691.0,-195.9 M-59593.5,2699.9 L1456.5,-188.6 M387768.9,26482.7 L694.3,-196.0 M-57119.0,2572.8 L1452.9,-188.8 M389015.5,26488.1 L697.7,-196.1 M-54845.0,2456.1 L1449.3,-188.9 M390262.1,26493.6 L701.1,-196.2 M-52747.9,2348.5 L1445.7,-189.1 M391508.8,26499.1 L704.4,-196.3 M-50807.9,2248.9 L1442.1,-189.3 M392755.4,26504.5 L707.8,-196.4 M-49008.1,2156.5 L1438.5,-189.5 M394002.0,26510.0 L711.1,-196.5 M-47333.7,2070.5 L1435.0,-189.7 M395248.6,26515.5 L714.5,-196.6 M-45772.0,1990.4 L1431.4,-189.8 M397741.9,26526.4 L721.1,-196.8 M-42944.3,1845.2 L1424.4,-190.2 M398988.5,26531.9 L724.5,-197.0 M-41660.2,1779.3 L1420.9,-190.4 M400235.1,26537.3 L727.8,-197.1 M-40452.4,1717.3 L1417.4,-190.5 M401481.8,26542.8 L731.1,-197.2 M-39314.1,1658.9 L1413.9,-190.7 M402728.4,26548.3 L734.3,-197.3 M-38239.6,1603.7 L1410.4,-190.9 M403975.0,26553.8 L737.6,-197.4 M-37223.7,1551.5 L1406.9,-191.1 M405221.6,26559.2 L740.9,-197.5 M-36261.7,1502.2 L1403.5,-191.2 M406468.3,26564.7 L744.2,-197.6 M-35349.4,1455.3 L1400.0,-191.4 M407714.9,26570.2 L747.4,-197.7 M-34483.0,1410.9 L1396.6,-191.6 M410208.1,26581.1 L753.9,-197.9 M-32875.0,1328.3 L1389.7,-191.9 M411454.8,26586.6 L757.2,-198.0 M-32127.5,1289.9 L1386.3,-192.1 M412701.4,26592.0 L760.4,-198.1 M-31414.2,1253.3 L1382.9,-192.3 M413948.0,26597.5 L763.6,-198.2 M-30732.9,1218.3 L1379.5,-192.4 M415194.7,26603.0 L766.9,-198.3 M-30081.3,1184.9 L1376.1,-192.6 M416441.3,26608.4 L770.1,-198.4 M-29457.7,1152.9 L1372.8,-192.8 M417687.9,26613.9 L773.3,-198.5 M-28860.2,1122.2 L1369.4,-193.0 M418934.5,26619.4 L776.5,-198.6 M-28287.2,1092.8 L1366.1,-193.1 M420181.2,26624.8 L779.7,-198.7 M-27737.3,1064.6 L1362.7,-193.3 M422674.4,26635.8 L786.0,-198.9 M-26701.4,1011.4 L1356.1,-193.6 M423921.0,26641.2 L789.2,-199.0 M-26212.9,986.3 L1352.8,-193.8 M425167.7,26646.7 L792.3,-199.1 M-25742.6,962.2 L1349.5,-194.0 M426414.3,26652.2 L795.5,-199.2 M-25289.5,938.9 L1346.2,-194.1 M427660.9,26657.6 L798.6,-199.4 M-24852.6,916.5 L1342.9,-194.3 M428907.5,26663.1 L801.8,-199.5 M-24431.2,894.9 L1339.6,-194.5 M430154.2,26668.6 L804.9,-199.6 M-24024.4,874.0 L1336.3,-194.6 M431400.8,26674.0 L808.0,-199.7 M-23631.5,853.8 L1333.1,-194.8 M432647.4,26679.5 L811.2,-199.8 M-23251.7,834.3 L1329.8,-194.9 M435140.7,26690.4 L817.4,-200.0 M-22529.0,797.2 L1323.4,-195.3 M436387.3,26695.9 L820.5,-200.1 M-22185.0,779.6 L1320.1,-195.4 M437633.9,26701.4 L823.6,-200.2 M-21851.8,762.4 L1316.9,-195.6 M438880.5,26706.8 L826.6,-200.3 M-21528.8,745.9 L1313.7,-195.8 M440127.2,26712.3 L829.7,-200.4 M-21215.8,729.8 L1310.5,-195.9 M441373.8,26717.8 L832.8,-200.5 M-20912.0,714.2 L1307.4,-196.1 M442620.4,26723.2 L835.8,-200.6 M-20617.3,699.1 L1304.2,-196.2 M443867.0,26728.7 L838.9,-200.7 M-20331.2,684.4 L1301.0,-196.4 M445113.7,26734.2 L841.9,-200.8 M-20053.2,670.1 L1297.9,-196.6 M447606.9,26745.1 L848.0,-200.9 M-19520.6,642.8 L1291.6,-196.9 M448853.6,26750.6 L851.1,-201.0 M-19265.3,629.7 L1288.4,-197.0 M450100.2,26756.1 L854.1,-201.1 M-19016.9,616.9 L1285.3,-197.2 M451346.8,26761.5 L857.1,-201.2 M-18775.1,604.5 L1282.2,-197.3 M452593.4,26767.0 L860.1,-201.3 M-18539.8,592.4 L1279.1,-197.5 M453840.1,26772.5 L863.1,-201.4 M-18310.6,580.7 L1276.0,-197.7 M455086.7,26777.9 L866.1,-201.5 M-18087.3,569.2 L1272.9,-197.8 M456333.3,26783.4 L869.1,-201.6 M-17869.6,558.0 L1269.8,-198.0 M457579.9,26788.9 L872.1,-201.7 M-17657.4,547.1 L1266.8,-198.1 M460073.2,26799.8 L878.0,-201.9 M-17248.7,526.2 L1260.6,-198.4 M461319.8,26805.3 L881.0,-202.0 M-17051.7,516.0 L1257.6,-198.6 M462566.4,26810.7 L883.9,-202.1 M-16859.4,506.2 L1254.6,-198.7 M463813.1,26816.2 L886.9,-202.2 M-16671.7,496.5 L1251.5,-198.9 M465059.7,26821.7 L889.8,-202.3 M-16488.4,487.1 L1248.5,-199.0 M466306.3,26827.1 L892.8,-202.4 M-16309.3,477.9 L1245.5,-199.2 M467552.9,26832.6 L895.7,-202.5 M-16134.2,468.9 L1242.5,-199.3 M468799.6,26838.1 L898.6,-202.6 M-15963.1,460.2 L1239.5,-199.5 M470046.2,26843.5 L901.6,-202.7 M-15795.9,451.6 L1236.5,-199.6 M472539.4,26854.5 L907.4,-202.9 M-15472.3,435.0 L1230.6,-199.9 M473786.1,26859.9 L910.3,-203.0 M-15315.7,426.9 L1227.6,-200.1 M475032.7,26865.4 L913.2,-203.1 M-15162.5,419.1 L1224.6,-200.2 M476279.3,26870.9 L916.0,-203.2 M-15012.5,411.4 L1221.7,-200.4 M477526.0,26876.3 L918.9,-203.2 M-14865.7,403.8 L1218.7,-200.5 M478772.6,26881.8 L921.8,-203.3 M-14721.9,396.4 L1215.8,-200.7 M480019.2,26887.3 L924.7,-203.4 M-14581.0,389.2 L1212.9,-200.8 M481265.8,26892.7 L927.5,-203.5 M-14443.0,382.1 L1210.0,-201.0 M482512.5,26898.2 L930.4,-203.6 M-14307.8,375.2 L1207.1,-201.1 M485005.7,26909.1 L936.1,-203.8 M-14045.2,361.7 L1201.3,-201.4 M486252.3,26914.6 L938.9,-203.9 M-13917.8,355.2 L1198.4,-201.5 M487499.0,26920.1 L941.8,-204.0 M-13792.9,348.8 L1195.5,-201.7 M488745.6,26925.6 L944.6,-204.1 M-13670.3,342.5 L1192.6,-201.8 M489992.2,26931.0 L947.4,-204.2 M-13550.0,336.3 L1189.8,-202.0 M491238.8,26936.5 L950.2,-204.3 M-13432.0,330.2 L1186.9,-202.1 M492485.5,26942.0 L953.0,-204.3 M-13316.2,324.3 L1184.1,-202.3 M493732.1,26947.4 L955.8,-204.4 M-13202.6,318.5 L1181.2,-202.4 M494978.7,26952.9 L958.6,-204.5 M-13091.0,312.7 L1178.4,-202.6 M497472.0,26963.8 L964.2,-204.7 M-12873.7,301.6 L1172.8,-202.8 M498718.6,26969.3 L967.0,-204.8 M-12768.0,296.1 L1169.9,-203.0 M499965.2,26974.8 L969.8,-204.9 M-12664.2,290.8 L1167.1,-203.1 M501211.8,26980.2 L972.5,-205.0 M-12562.1,285.6 L1164.4,-203.3 M502458.5,26985.7 L975.3,-205.1 M-12461.8,280.4 L1161.6,-203.4 M503705.1,26991.2 L978.0,-205.2 M-12363.3,275.4 L1158.8,-203.5 M504951.7,26996.6 L980.8,-205.2 M-12266.4,270.4 L1156.0,-203.7 M506198.3,27002.1 L983.5,-205.3 M-12171.1,265.5 L1153.2,-203.8 M507445.0,27007.6 L986.3,-205.4 M-12077.5,260.7 L1150.5,-204.0 M509938.2,27018.5 L991.7,-205.6 M-11894.8,251.3 L1145.0,-204.2 M511184.9,27024.0 L994.5,-205.7 M-11805.6,246.7 L1142.3,-204.4 M512431.5,27029.4 L997.2,-205.8 M-11718.0,242.2 L1139.5,-204.5 M513678.1,27034.9 L999.9,-205.9 M-11631.7,237.8 L1136.8,-204.6 M514924.7,27040.4 L1002.6,-206.0 M-11546.8,233.5 L1134.1,-204.8 M516171.4,27045.8 L1005.3,-206.0 M-11463.2,229.2 L1131.4,-204.9 M517418.0,27051.3 L1008.0,-206.1 M-11381.0,224.9 L1128.7,-205.1 M518664.6,27056.8 L1010.7,-206.2 M-11300.0,220.8 L1126.0,-205.2 M519911.2,27062.2 L1013.3,-206.3 M-11220.3,216.7 L1123.3,-205.3 M522404.5,27073.2 L1018.7,-206.5 M-11064.4,208.7 L1117.9,-205.6 M523651.1,27078.6 L1021.4,-206.6 M-10988.3,204.8 L1115.3,-205.7 M524897.7,27084.1 L1024.0,-206.6 M-10913.3,200.9 L1112.6,-205.9 M526144.4,27089.6 L1026.7,-206.7 M-10839.4,197.1 L1110.0,-206.0 M527391.0,27095.0 L1029.3,-206.8 M-10766.6,193.4 L1107.3,-206.1 M528637.6,27100.5 L1032.0,-206.9 M-10694.9,189.7 L1104.7,-206.3 M529884.2,27106.0 L1034.6,-207.0 M-10624.2,186.1 L1102.0,-206.4 M531130.9,27111.5 L1037.2,-207.1 M-10554.5,182.5 L1099.4,-206.5 M532377.5,27116.9 L1039.9,-207.2 M-10485.8,179.0 L1096.8,-206.7 M534870.7,27127.9 L1045.1,-207.3 M-10351.3,172.1 L1091.6,-206.9 M536117.4,27133.3 L1047.7,-207.4 M-10285.5,168.7 L1089.0,-207.0 M537364.0,27138.8 L1050.3,-207.5 M-10220.6,165.4 L1086.4,-207.2 M538610.6,27144.3 L1052.9,-207.6 M-10156.6,162.1 L1083.8,-207.3 M539857.2,27149.7 L1055.5,-207.7 M-10093.5,158.9 L1081.2,-207.4 M541103.9,27155.2 L1058.1,-207.7 M-10031.2,155.7 L1078.6,-207.6 M542350.5,27160.7 L1060.7,-207.8 M-9969.8,152.5 L1076.1,-207.7 M543597.1,27166.1 L1063.3,-207.9 M-9909.2,149.4 L1073.5,-207.8 M544843.8,27171.6 L1065.8,-208.0 M-9849.4,146.3 L1071.0,-208.0" stroke="#272727" stroke-width="1.4" fill="none"/>
<path d="M-451210.4,22802.9 L-9790.5,143.3 M-438744.1,22857.6 L-9109.0,121.2 M539728.3,27149.2 L227434.5,11165.9 M-426277.9,22912.3 L-8493.6,101.3 M524299.3,27081.5 L93706.1,4446.6 M-413811.6,22967.0 L-7935.0,83.3 M508870.4,27013.8 L58746.8,2690.0 M-401345.3,23021.6 L-7425.8,66.8 M493441.5,26946.1 L42644.2,1880.9 M-388879.1,23076.3 L-6959.6,51.7 M478012.5,26878.5 L33382.3,1415.6 M-376412.8,23131.0 L-6531.2,37.8 M462583.6,26810.8 L27365.7,1113.2 M-363946.6,23185.7 L-6136.3,25.1 M447154.7,26743.1 L23142.9,901.1 M-351480.3,23240.3 L-5770.9,13.2 M431725.8,26675.5 L20015.9,744.0 M-339014.0,23295.0 L-5432.0,2.3 M416296.8,26607.8 L17607.1,622.9 M-326547.8,23349.7 L-5116.8,-7.9 M400867.9,26540.1 L15694.5,526.8 M-314081.5,23404.4 L-4822.8,-17.4 M385439.0,26472.5 L14139.1,448.7 M-301615.3,23459.1 L-4548.0,-26.3 M370010.0,26404.8 L12849.5,383.9 M-289149.0,23513.7 L-4290.6,-34.7 M354581.1,26337.1 L11762.8,329.3 M-276682.7,23568.4 L-4048.9,-42.5 M339152.2,26269.4 L10834.7,282.6 M-264216.5,23623.1 L-3821.6,-49.8 M323723.2,26201.8 L10032.7,242.3 M-251750.2,23677.8 L-3607.4,-56.8 M308294.3,26134.1 L9332.9,207.2 M-239284.0,23732.4 L-3405.3,-63.3 M292865.4,26066.4 L8716.9,176.2 M-226817.7,23787.1 L-3214.1,-69.5 M277436.5,25998.8 L8170.4,148.8 M-214351.4,23841.8 L-3033.1,-75.4 M262007.5,25931.1 L7682.3,124.2 M-201885.2,23896.5 L-2861.5,-80.9 M246578.6,25863.4 L7243.8,102.2 M-189418.9,23951.1 L-2698.6,-86.2 M231149.7,25795.7 L6847.7,82.3 M-176952.7,24005.8 L-2543.6,-91.2 M215720.7,25728.1 L6488.0,64.2 M-164486.4,24060.5 L-2396.1,-96.0 M200291.8,25660.4 L6160.0,47.8 M-152020.2,24115.2 L-2255.5,-100.5 M184862.9,25592.7 L5859.7,32.7 M-139553.9,24169.9 L-2121.4,-104.9 M169433.9,25525.1 L5583.7,18.8 M-127087.6,24224.5 L-1993.3,-109.0 M154005.0,25457.4 L5329.1,6.0 M-114621.4,24279.2 L-1870.7,-113.0 M138576.1,25389.7 L5093.6,-5.8 M-102155.1,24333.9 L-1753.5,-116.8 M123147.2,25322.0 L4875.2,-16.8 M-89688.9,24388.6 L-1641.1,-120.4 M107718.2,25254.4 L4671.9,-27.0 M-77222.6,24443.2 L-1533.4,-123.9 M92289.3,25186.7 L4482.3,-36.5 M-64756.3,24497.9 L-1430.0,-127.2 M76860.4,25119.0 L4305.1,-45.5 M-52290.1,24552.6 L-1330.7,-130.4 M61431.4,25051.4 L4139.0,-53.8 M-39823.8,24607.3 L-1235.2,-133.5 M46002.5,24983.7 L3983.1,-61.6 M-27357.6,24661.9 L-1143.4,-136.5 M30573.6,24916.0 L3836.5,-69.0 M-14891.3,24716.6 L-1055.0,-139.4 M15144.6,24848.4 L3698.3,-75.9 M-2425.0,24771.3 L-969.8,-142.1 M-284.3,24780.7 L3567.9,-82.5 M10041.2,24826.0 L-887.7,-144.8 M-15713.2,24713.0 L3444.5,-88.7 M22507.5,24880.6 L-808.5,-147.3 M-31142.1,24645.3 L3327.7,-94.6 M34973.7,24935.3 L-732.0,-149.8 M-46571.1,24577.7 L3216.9,-100.1 M47440.0,24990.0 L-658.1,-152.2 M-62000.0,24510.0 L3111.7,-105.4 M59906.3,25044.7 L-586.8,-154.5 M-77428.9,24442.3 L3011.7,-110.4 M72372.5,25099.4 L-517.7,-156.8 M-92857.9,24374.7 L2916.5,-115.2 M84838.8,25154.0 L-450.9,-158.9 M-108286.8,24307.0 L2825.7,-119.8 M97305.0,25208.7 L-386.3,-161.0 M-123715.7,24239.3 L2739.1,-124.1 M109771.3,25263.4 L-323.7,-163.0 M-139144.6,24171.6 L2656.4,-128.3 M122237.6,25318.1 L-263.0,-165.0 M-154573.6,24104.0 L2577.2,-132.3 M134703.8,25372.7 L-204.1,-166.9 M-170002.5,24036.3 L2501.5,-136.1 M147170.1,25427.4 L-147.0,-168.8 M-185431.4,23968.6 L2429.0,-139.7 M159636.3,25482.1 L-91.7,-170.5 M-200860.4,23901.0 L2359.4,-143.2 M172102.6,25536.8 L-37.9,-172.3 M-216289.3,23833.3 L2292.6,-146.6 M184568.9,25591.4 L14.3,-174.0 M-231718.2,23765.6 L2228.5,-149.8 M197035.1,25646.1 L65.1,-175.6 M-247147.2,23698.0 L2166.8,-152.9 M209501.4,25700.8 L114.4,-177.2 M-262576.1,23630.3 L2107.5,-155.9 M221967.6,25755.5 L162.4,-178.8 M-278005.0,23562.6 L2050.4,-158.7 M234433.9,25810.1 L209.1,-180.3 M-293433.9,23494.9 L1995.3,-161.5 M246900.2,25864.8 L254.5,-181.7 M-308862.9,23427.3 L1942.3,-164.2 M259366.4,25919.5 L298.7,-183.2 M-324291.8,23359.6 L1891.1,-166.7 M271832.7,25974.2 L341.8,-184.6 M-339720.7,23291.9 L1841.7,-169.2 M284298.9,26028.9 L383.8,-185.9 M-355149.7,23224.3 L1794.0,-171.6 M296765.2,26083.5 L424.7,-187.2 M-370578.6,23156.6 L1747.8,-173.9 M309231.4,26138.2 L464.5,-188.5 M-386007.5,23088.9 L1703.2,-176.2 M321697.7,26192.9 L503.4,-189.8 M-401436.5,23021.2 L1660.1,-178.4 M334164.0,26247.6 L541.3,-191.0 M-416865.4,22953.6 L1618.3,-180.5 M346630.2,26302.2 L578.3,-192.2 M-432294.3,22885.9 L1577.8,-182.5 M359096.5,26356.9 L614.4,-193.4 M-447723.2,22818.2 L1538.6,-184.5 M371562.7,26411.6 L649.7,-194.5 M-125379.3,6076.9 L1500.6,-186.4 M384029.0,26466.3 L684.2,-195.6 M-65259.9,2990.7 L1463.7,-188.2 M396495.3,26520.9 L717.8,-196.7 M-44312.1,1915.4 L1427.9,-190.0 M408961.5,26575.6 L750.7,-197.8 M-33659.3,1368.6 L1393.2,-191.8 M421427.8,26630.3 L782.8,-198.8 M-27209.1,1037.5 L1359.4,-193.5 M433894.0,26685.0 L814.3,-199.9 M-22884.4,815.5 L1326.6,-195.1 M446360.3,26739.7 L845.0,-200.9 M-19783.1,656.3 L1294.7,-196.7 M458826.6,26794.3 L875.1,-201.8 M-17450.5,536.5 L1263.7,-198.3 M471292.8,26849.0 L904.5,-202.8 M-15632.3,443.2 L1233.5,-199.8 M483759.1,26903.7 L933.2,-203.7 M-14175.2,368.4 L1204.2,-201.3 M496225.3,26958.4 L961.4,-204.6 M-12981.4,307.1 L1175.6,-202.7 M508691.6,27013.0 L989.0,-205.5 M-11985.4,256.0 L1147.7,-204.1 M521157.9,27067.7 L1016.0,-206.4 M-11141.8,212.7 L1120.6,-205.5 M533624.1,27122.4 L1042.5,-207.2 M-10418.1,175.5 L1094.2,-206.8 M546090.4,27177.1 L1068.4,-208.1 M-9790.5,143.3 L1068.4,-208.1" stroke="#2d2d2d" stroke-width="2" fill="none"/>
<rect width="1624" height="620" fill="url(#g1)"/>
<path d="M0,189.2 L160,273.5" fill="none" stroke="#3e8a3c" stroke-width="2.0" stroke-linecap="round" stroke-linejoin="round" />
<path d="M1420,534 L1624,457.5" fill="none" stroke="#9f453d" stroke-width="2.0" stroke-linecap="round" stroke-linejoin="round" />
<path d="M867.0,442.0 L868.0,210.0 L866.0,210.0 C866.5,205.0 866.7,190.0 869.0,180.0 C871.3,170.0 874.8,158.8 880.0,150.0 C885.2,141.2 892.5,132.9 900.0,127.5 C907.5,122.1 917.9,119.7 925.0,117.5 C932.1,115.3 939.6,115.0 942.5,114.5 L1082.5,91.0 L1092.5,92.5 L1360.0,146.0 C1362.7,146.9 1370.9,149.3 1376.0,151.5 C1381.1,153.7 1385.7,156.2 1390.4,159.3 C1395.1,162.4 1399.7,166.2 1404.0,170.0 C1408.3,173.8 1412.2,177.8 1416.0,182.2 C1419.8,186.6 1423.7,191.6 1427.0,196.5 C1430.3,201.4 1433.5,206.8 1436.1,211.5 C1438.7,216.2 1440.7,220.4 1442.5,225.0 C1444.3,229.6 1446.0,234.3 1447.1,239.0 C1448.2,243.7 1448.8,248.4 1449.3,253.0 C1449.8,257.6 1449.7,261.8 1449.8,266.3 C1449.9,270.8 1450.0,277.7 1450.0,280.0 L1442.5,356.0 L1429.0,480.0 L1412.5,655.0 C1412.1,656.0 1411.1,659.3 1410.0,661.0 C1408.9,662.7 1406.7,664.3 1406.0,665.0 L1267.5,724.0 C1264.6,724.8 1255.4,728.7 1250.0,729.0 C1244.6,729.3 1239.0,727.1 1235.0,726.0 C1231.0,724.9 1227.5,723.1 1226.0,722.5 L1146.0,685.0 L870.0,560.0 Z" fill="#7f7f81" />
<path d="M944.0,116.0 L1091.0,94.5 L1360.0,146.0 L1207.5,176.0 Z" fill="#9b9a9f" />
<path d="M942.5,114.5 L1082.5,91.0 L1092.5,92.5 L1091.0,94.5 L944.0,116.0 Z" fill="#b4b4b8" />
<path d="M1207.5,176.0 L1360.0,146.0 C1362.2,147.2 1368.8,150.6 1373.0,153.0 C1377.2,155.4 1380.8,157.2 1385.0,160.2 C1389.2,163.2 1393.8,167.0 1398.0,171.0 C1402.2,175.0 1406.8,179.6 1410.5,184.0 C1414.2,188.4 1417.5,192.9 1420.5,197.5 C1423.5,202.1 1426.4,206.9 1428.8,211.5 C1431.2,216.1 1433.2,220.4 1435.0,225.0 C1436.8,229.6 1438.4,234.3 1439.7,239.0 C1441.0,243.7 1442.2,248.4 1443.0,253.0 C1443.8,257.6 1444.0,261.1 1444.3,266.3 C1444.5,271.5 1444.5,281.1 1444.5,284.0 L1297.5,324.0 C1297.5,322.2 1297.6,317.6 1297.3,313.3 C1297.0,309.0 1296.3,303.1 1295.5,298.0 C1294.7,292.9 1293.8,287.8 1292.5,282.5 C1291.2,277.2 1289.4,271.4 1287.5,266.0 C1285.6,260.6 1283.6,255.4 1281.0,249.9 C1278.4,244.4 1275.2,238.4 1272.0,233.0 C1268.8,227.6 1265.5,222.0 1261.8,217.2 C1258.1,212.4 1254.2,208.2 1250.0,204.0 C1245.8,199.8 1241.5,195.8 1236.8,192.3 C1232.1,188.8 1226.9,185.7 1222.0,183.0 C1217.1,180.3 1209.9,177.2 1207.5,176.0 Z" fill="url(#g2)" />
<path d="M1360.0,146.0 C1362.7,146.9 1370.9,149.3 1376.0,151.5 C1381.1,153.7 1385.7,156.2 1390.4,159.3 C1395.1,162.4 1399.7,166.2 1404.0,170.0 C1408.3,173.8 1412.2,177.8 1416.0,182.2 C1419.8,186.6 1423.7,191.6 1427.0,196.5 C1430.3,201.4 1433.5,206.8 1436.1,211.5 C1438.7,216.2 1440.7,220.4 1442.5,225.0 C1444.3,229.6 1446.0,234.3 1447.1,239.0 C1448.2,243.7 1448.8,248.4 1449.3,253.0 C1449.8,257.6 1449.7,261.8 1449.8,266.3 C1449.9,270.8 1450.0,277.7 1450.0,280.0 L1442.5,356.0 L1429.0,480.0 L1412.5,655.0 L1406.0,665.0 L1425.0,480.0 L1437.5,356.0 L1444.5,284.0 C1444.5,281.1 1444.5,271.5 1444.3,266.3 C1444.0,261.1 1443.8,257.6 1443.0,253.0 C1442.2,248.4 1441.0,243.7 1439.7,239.0 C1438.4,234.3 1436.8,229.6 1435.0,225.0 C1433.2,220.4 1431.2,216.1 1428.8,211.5 C1426.4,206.9 1423.5,202.1 1420.5,197.5 C1417.5,192.9 1414.2,188.4 1410.5,184.0 C1406.8,179.6 1402.2,175.0 1398.0,171.0 C1393.8,167.0 1389.2,163.2 1385.0,160.2 C1380.8,157.2 1377.2,155.4 1373.0,153.0 C1368.8,150.6 1362.2,147.2 1360.0,146.0 Z" fill="url(#g3)" />
<path d="M1360.0,146.0 L1366.8,149.6 L1367.4,148.4 L1360.0,146.0 Z" fill="url(#g4)" />
<path d="M1365.4,148.9 L1372.2,152.5 L1373.3,150.5 L1365.9,147.9 Z" fill="url(#g5)" />
<path d="M1370.8,151.8 L1377.5,155.6 L1379.0,152.9 L1371.8,149.9 Z" fill="url(#g6)" />
<path d="M1376.2,154.8 L1382.8,158.7 L1384.5,155.8 L1377.6,152.2 Z" fill="url(#g7)" />
<path d="M1381.5,157.9 L1387.8,162.3 L1389.8,159.0 L1383.2,155.0 Z" fill="url(#g8)" />
<path d="M1386.6,161.3 L1392.5,166.2 L1394.9,162.5 L1388.5,158.1 Z" fill="url(#g9)" />
<path d="M1391.4,165.2 L1397.1,170.2 L1399.8,166.4 L1393.7,161.6 Z" fill="url(#g10)" />
<path d="M1396.0,169.2 L1401.6,174.5 L1404.5,170.5 L1398.6,165.4 Z" fill="url(#g11)" />
<path d="M1400.5,173.4 L1405.9,178.9 L1409.0,174.8 L1403.4,169.4 Z" fill="url(#g12)" />
<path d="M1404.8,177.7 L1410.0,183.4 L1413.3,179.3 L1407.9,173.7 Z" fill="url(#g13)" />
<path d="M1409.0,182.2 L1413.8,188.2 L1417.4,183.9 L1412.3,178.1 Z" fill="url(#g14)" />
<path d="M1412.9,187.0 L1417.5,193.1 L1421.3,188.8 L1416.5,182.7 Z" fill="url(#g15)" />
<path d="M1416.6,191.9 L1420.9,198.2 L1425.1,193.8 L1420.4,187.5 Z" fill="url(#g16)" />
<path d="M1420.1,196.9 L1424.2,203.4 L1428.6,198.9 L1424.2,192.5 Z" fill="url(#g17)" />
<path d="M1423.4,202.1 L1427.3,208.7 L1431.9,204.2 L1427.7,197.6 Z" fill="url(#g18)" />
<path d="M1426.5,207.4 L1430.1,214.1 L1435.0,209.6 L1431.1,202.8 Z" fill="url(#g19)" />
<path d="M1429.5,212.8 L1432.7,219.7 L1437.9,215.0 L1434.3,208.2 Z" fill="url(#g20)" />
<path d="M1432.1,218.3 L1435.1,225.4 L1440.6,220.7 L1437.2,213.6 Z" fill="url(#g21)" />
<path d="M1434.6,223.9 L1437.2,231.1 L1443.0,226.4 L1440.0,219.2 Z" fill="url(#g22)" />
<path d="M1436.7,229.7 L1439.1,237.0 L1445.1,232.3 L1442.5,224.9 Z" fill="url(#g23)" />
<path d="M1438.7,235.5 L1440.7,242.9 L1446.9,238.2 L1444.7,230.8 Z" fill="url(#g24)" />
<path d="M1440.4,241.4 L1442.2,248.9 L1448.1,244.3 L1446.5,236.7 Z" fill="url(#g25)" />
<path d="M1441.9,247.3 L1443.3,254.9 L1449.0,250.5 L1447.9,242.8 Z" fill="url(#g26)" />
<path d="M1443.1,253.4 L1444.0,261.0 L1449.5,256.7 L1448.8,248.9 Z" fill="url(#g27)" />
<path d="M1443.8,259.5 L1444.3,267.1 L1449.7,262.9 L1449.5,255.1 Z" fill="url(#g28)" />
<path d="M1444.3,265.6 L1444.5,273.3 L1449.9,269.1 L1449.7,261.3 Z" fill="url(#g29)" />
<path d="M1444.4,271.7 L1444.5,279.4 L1449.9,275.3 L1449.8,267.6 Z" fill="url(#g30)" />
<path d="M1444.5,277.9 L1444.5,284.0 L1450.0,280.0 L1449.9,273.8 Z" fill="url(#g31)" />
<path d="M1444.5,284.0 L1450.0,280.0 L1442.5,356.0 L1429.0,480.0 L1412.5,655.0 L1406.0,665.0 L1425.0,480.0 L1437.5,356.0 Z" fill="url(#g32)" />
<path d="M1297.5,324.0 L1444.5,284.0 L1437.5,356.0 L1425.0,480.0 L1406.0,665.0 L1267.5,724.0 L1285.0,480.0 L1294.0,356.0 Z" fill="#7f7f81" />
<path d="M944.0,116.0 L1207.5,176.0 C1205.7,177.4 1199.6,181.2 1196.5,184.6 C1193.4,187.9 1190.5,192.0 1188.8,196.1 C1187.0,200.2 1186.5,206.8 1186.0,209.0 L925.0,144.0 C925.8,141.2 926.8,132.2 930.0,127.5 C933.2,122.8 941.7,117.9 944.0,116.0 Z" fill="url(#g33)" />
<path d="M944.0,116.0 L1207.5,176.0 C1205.7,177.4 1199.6,181.2 1196.5,184.6 C1193.4,187.9 1190.5,192.0 1188.8,196.1 C1187.0,200.2 1186.5,206.8 1186.0,209.0 L925.0,144.0 C925.8,141.2 926.8,132.2 930.0,127.5 C933.2,122.8 941.7,117.9 944.0,116.0 Z" fill="url(#g34)" />
<path d="M866.0,210.0 C866.5,205.0 866.7,190.0 869.0,180.0 C871.3,170.0 874.8,158.8 880.0,150.0 C885.2,141.2 892.5,132.9 900.0,127.5 C907.5,122.1 917.9,119.7 925.0,117.5 C932.1,115.3 939.6,115.0 942.5,114.5 L944.0,116.0 C941.7,117.9 933.2,122.8 930.0,127.5 C926.8,132.2 925.8,141.2 925.0,144.0 C922.9,144.0 918.3,141.8 912.5,144.0 C906.7,146.2 896.1,151.5 890.0,157.5 C883.9,163.5 879.0,171.2 876.0,180.0 C873.0,188.8 872.7,205.0 872.0,210.0 Z" fill="url(#g35)" />
<path d="M865.0,442.0 L866.0,210.0 L872.0,210.0 L870.0,445.0 Z" fill="#4e4e50" />
<path d="M1207.5,176.0 C1209.9,177.2 1217.1,180.3 1222.0,183.0 C1226.9,185.7 1232.1,188.8 1236.8,192.3 C1241.5,195.8 1245.8,199.8 1250.0,204.0 C1254.2,208.2 1258.1,212.4 1261.8,217.2 C1265.5,222.0 1268.8,227.6 1272.0,233.0 C1275.2,238.4 1278.4,244.4 1281.0,249.9 C1283.6,255.4 1285.6,260.6 1287.5,266.0 C1289.4,271.4 1291.2,277.2 1292.5,282.5 C1293.8,287.8 1294.7,292.9 1295.5,298.0 C1296.3,303.1 1297.0,309.0 1297.3,313.3 C1297.6,317.6 1297.5,322.2 1297.5,324.0 C1293.8,324.6 1282.2,327.5 1275.0,327.5 C1267.8,327.5 1257.7,324.6 1254.2,324.0 C1254.2,320.6 1254.2,308.5 1254.1,303.7 C1253.9,298.9 1253.8,298.2 1253.3,295.0 C1252.8,291.8 1252.2,288.3 1251.2,284.5 C1250.2,280.7 1248.9,276.2 1247.5,272.0 C1246.1,267.8 1244.6,263.8 1242.6,259.5 C1240.6,255.2 1238.1,250.7 1235.5,246.5 C1232.9,242.3 1230.1,238.1 1227.2,234.5 C1224.3,230.9 1221.2,227.9 1218.0,225.0 C1214.8,222.1 1211.5,219.4 1208.0,217.2 C1204.5,215.0 1200.7,213.4 1197.0,212.0 C1193.3,210.6 1187.8,209.5 1186.0,209.0 C1186.5,206.8 1187.0,200.2 1188.8,196.1 C1190.5,192.0 1193.4,187.9 1196.5,184.6 C1199.6,181.2 1205.7,177.4 1207.5,176.0 Z" fill="url(#g36)" />
<path d="M1254.2,324.0 C1257.7,324.6 1267.8,327.5 1275.0,327.5 C1282.2,327.5 1293.8,324.6 1297.5,324.0 L1297.0,312.0 L1254.0,312.0 Z" fill="url(#g37)" />
<path d="M1186.0,209.0 L1192.3,210.6 L1214.9,179.5 L1207.5,176.0 Z" fill="url(#g38)" />
<path d="M1191.0,210.2 L1197.2,212.1 L1220.8,182.4 L1213.4,178.7 Z" fill="url(#g39)" />
<path d="M1196.0,211.7 L1202.0,214.1 L1226.5,185.6 L1219.3,181.6 Z" fill="url(#g40)" />
<path d="M1200.9,213.5 L1206.6,216.5 L1232.1,189.0 L1225.1,184.7 Z" fill="url(#g41)" />
<path d="M1205.5,215.8 L1211.0,219.3 L1237.4,192.8 L1230.7,188.1 Z" fill="url(#g42)" />
<path d="M1209.9,218.5 L1215.1,222.5 L1242.5,197.0 L1236.1,191.8 Z" fill="url(#g43)" />
<path d="M1214.1,221.6 L1218.9,225.9 L1247.3,201.4 L1241.3,195.9 Z" fill="url(#g44)" />
<path d="M1218.0,225.0 L1222.7,229.5 L1252.0,206.0 L1246.1,200.3 Z" fill="url(#g45)" />
<path d="M1221.8,228.6 L1226.2,233.3 L1256.4,210.8 L1250.8,204.8 Z" fill="url(#g46)" />
<path d="M1225.3,232.3 L1229.4,237.4 L1260.7,215.8 L1255.4,209.6 Z" fill="url(#g47)" />
<path d="M1228.6,236.3 L1232.4,241.6 L1264.5,221.1 L1259.7,214.5 Z" fill="url(#g48)" />
<path d="M1231.7,240.5 L1235.2,246.0 L1268.1,226.6 L1263.6,219.7 Z" fill="url(#g49)" />
<path d="M1234.5,244.9 L1237.8,250.4 L1271.5,232.2 L1267.3,225.2 Z" fill="url(#g50)" />
<path d="M1237.2,249.3 L1240.3,255.0 L1274.8,237.9 L1270.7,230.8 Z" fill="url(#g51)" />
<path d="M1239.7,253.8 L1242.6,259.6 L1277.9,243.6 L1274.0,236.4 Z" fill="url(#g52)" />
<path d="M1242.1,258.4 L1244.7,264.4 L1280.8,249.5 L1277.1,242.2 Z" fill="url(#g53)" />
<path d="M1244.2,263.2 L1246.5,269.2 L1283.4,255.5 L1280.1,248.0 Z" fill="url(#g54)" />
<path d="M1246.1,268.0 L1248.2,274.1 L1285.9,261.6 L1282.8,254.0 Z" fill="url(#g55)" />
<path d="M1247.8,272.9 L1249.7,279.1 L1288.1,267.7 L1285.3,260.0 Z" fill="url(#g56)" />
<path d="M1249.4,277.8 L1251.1,284.1 L1290.1,274.0 L1287.6,266.2 Z" fill="url(#g57)" />
<path d="M1250.8,282.8 L1252.2,289.1 L1291.9,280.3 L1289.6,272.4 Z" fill="url(#g58)" />
<path d="M1252.0,287.9 L1253.2,294.2 L1293.4,286.6 L1291.5,278.7 Z" fill="url(#g59)" />
<path d="M1253.0,293.0 L1253.8,299.4 L1294.7,293.1 L1293.1,285.0 Z" fill="url(#g60)" />
<path d="M1253.8,298.1 L1254.1,304.6 L1295.7,299.5 L1294.4,291.4 Z" fill="url(#g61)" />
<path d="M1254.1,303.3 L1254.2,309.7 L1296.6,306.0 L1295.5,297.9 Z" fill="url(#g62)" />
<path d="M1254.2,308.4 L1254.2,314.9 L1297.2,312.5 L1296.4,304.4 Z" fill="url(#g63)" />
<path d="M1254.2,313.6 L1254.2,320.1 L1297.5,319.1 L1297.1,310.9 Z" fill="url(#g64)" />
<path d="M1254.2,318.8 L1254.2,324.0 L1297.5,324.0 L1297.5,317.4 Z" fill="url(#g65)" />
<path d="M1254.2,324.0 C1257.7,324.6 1267.8,327.5 1275.0,327.5 C1282.2,327.5 1293.8,324.6 1297.5,324.0 L1294.0,356.0 L1285.0,480.0 L1267.5,724.0 C1264.6,724.8 1255.4,728.7 1250.0,729.0 C1244.6,729.3 1239.0,727.1 1235.0,726.0 C1231.0,724.9 1227.5,723.1 1226.0,722.5 L1242.5,480.0 L1251.0,356.0 Z" fill="url(#g66)" />
<path d="M870.0,560.0 L870.0,445.0 L870.0,356.0 L872.0,210.0 C872.7,205.0 873.0,188.8 876.0,180.0 C879.0,171.2 883.9,163.5 890.0,157.5 C896.1,151.5 906.7,146.2 912.5,144.0 C918.3,141.8 922.9,144.0 925.0,144.0 L1186.0,209.0 C1187.8,209.5 1193.3,210.6 1197.0,212.0 C1200.7,213.4 1204.5,215.0 1208.0,217.2 C1211.5,219.4 1214.8,222.1 1218.0,225.0 C1221.2,227.9 1224.3,230.9 1227.2,234.5 C1230.1,238.1 1232.9,242.3 1235.5,246.5 C1238.1,250.7 1240.6,255.2 1242.6,259.5 C1244.6,263.8 1246.1,267.8 1247.5,272.0 C1248.9,276.2 1250.2,280.7 1251.2,284.5 C1252.2,288.3 1252.8,291.8 1253.3,295.0 C1253.8,298.2 1253.9,298.9 1254.1,303.7 C1254.2,308.5 1254.2,320.6 1254.2,324.0 L1251.0,356.0 L1242.5,480.0 L1226.0,722.5 L1146.0,685.0 Z" fill="#3f3f41" />
<path d="M977.5,367.5 L980.0,300.0 L981.0,252.5 C981.7,248.8 982.2,237.5 985.0,230.0 C987.8,222.5 992.5,212.6 997.5,207.5 C1002.5,202.4 1010.2,200.6 1015.0,199.5 C1019.8,198.4 1024.2,200.8 1026.0,201.0 L1139.0,230.0 C1142.5,232.1 1153.6,236.2 1160.0,242.5 C1166.4,248.8 1173.2,257.1 1177.5,267.5 C1181.8,277.9 1184.3,294.6 1186.0,305.0 C1187.7,315.4 1187.2,325.8 1187.5,330.0 L1179.0,440.0 L989.0,371.0 Z" fill="#1a1a1a" />
<path d="M1017.6,252.5 L1090.0,236.0 L1152.5,254.0 L1161.0,260.0 L1157.5,330.0 L1156.0,332.5 L1016.5,367.5 L1015.8,356.0 Z" fill="#818183" />
<path d="M1161.0,260.0 L1167.5,265.0 L1165.5,329.0 L1157.5,330.0 Z" fill="#98989c" />
<path d="M1017.6,252.5 C1017.7,250.1 1016.8,242.1 1018.0,238.0 C1019.2,233.9 1022.0,230.5 1025.0,228.0 C1028.0,225.5 1034.2,223.8 1036.0,223.0 L1040.0,224.0 L1090.0,236.0 Z" fill="url(#g67)" />
<path d="M989.0,371.0 L1016.5,367.5 L1156.0,332.5 L1164.0,329.0 L1176.0,327.5 L1170.0,436.0 Z" fill="#9b9a9f" />
<path d="M981.0,252.5 C984.2,252.8 993.9,254.0 1000.0,254.0 C1006.1,254.0 1014.7,252.8 1017.6,252.5 L1015.8,356.0 L1016.5,367.5 C1013.8,368.3 1004.6,371.9 1000.0,372.5 C995.4,373.1 992.8,371.8 989.0,371.0 C985.2,370.2 979.4,368.1 977.5,367.5 L980.0,300.0 Z" fill="url(#g68)" />
<path d="M981.0,252.5 C981.7,248.8 982.2,237.5 985.0,230.0 C987.8,222.5 992.5,212.6 997.5,207.5 C1002.5,202.4 1010.2,200.6 1015.0,199.5 C1019.8,198.4 1024.2,200.8 1026.0,201.0 C1026.5,203.3 1026.7,211.2 1029.0,215.0 C1031.3,218.8 1038.2,222.5 1040.0,224.0 L1036.0,223.0 C1034.2,223.8 1028.0,225.5 1025.0,228.0 C1022.0,230.5 1019.2,233.9 1018.0,238.0 C1016.8,242.1 1017.7,250.1 1017.6,252.5 C1014.7,252.8 1006.1,254.0 1000.0,254.0 C993.9,254.0 984.2,252.8 981.0,252.5 Z" fill="url(#g69)" />
<path d="M1026.0,201.0 L1139.0,230.0 C1139.3,232.5 1138.8,241.0 1141.0,245.0 C1143.2,249.0 1150.6,252.5 1152.5,254.0 L1040.0,224.0 C1038.2,222.5 1031.3,218.8 1029.0,215.0 C1026.7,211.2 1026.5,203.3 1026.0,201.0 Z" fill="url(#g70)" />
<path d="M1139.0,230.0 C1142.5,232.1 1153.6,236.2 1160.0,242.5 C1166.4,248.8 1173.2,257.1 1177.5,267.5 C1181.8,277.9 1184.3,294.6 1186.0,305.0 C1187.7,315.4 1187.2,325.8 1187.5,330.0 L1179.0,440.0 L1170.0,436.0 L1176.0,327.5 C1176.2,323.8 1177.7,312.9 1177.0,305.0 C1176.3,297.1 1174.3,287.2 1172.0,280.0 C1169.7,272.8 1166.2,266.3 1163.0,262.0 C1159.8,257.7 1154.2,255.3 1152.5,254.0 C1150.6,252.5 1143.2,249.0 1141.0,245.0 C1138.8,241.0 1139.3,232.5 1139.0,230.0 Z" fill="url(#g71)" />
<path d="M944.0,116.0 L1091.0,94.5 L1360.0,146.0" fill="none" stroke="#000" stroke-width="2.6" stroke-linecap="round" stroke-linejoin="round" />
<path d="M1146.0,685.0 L1226.0,722.5 C1227.5,723.1 1231.0,724.9 1235.0,726.0 C1239.0,727.1 1244.6,729.3 1250.0,729.0 C1255.4,728.7 1264.6,724.8 1267.5,724.0 L1406.0,665.0 C1406.7,664.3 1408.9,662.7 1410.0,661.0 C1411.1,659.3 1412.1,656.0 1412.5,655.0" fill="none" stroke="#000" stroke-width="2.6" stroke-linecap="round" stroke-linejoin="round" />
<path d="M944.0,116.0 L1207.5,176.0 L1360.0,146.0" fill="none" stroke="#000" stroke-width="2.6" stroke-linecap="round" stroke-linejoin="round" />
<path d="M1360.0,146.0 C1362.2,147.2 1368.8,150.6 1373.0,153.0 C1377.2,155.4 1380.8,157.2 1385.0,160.2 C1389.2,163.2 1393.8,167.0 1398.0,171.0 C1402.2,175.0 1406.8,179.6 1410.5,184.0 C1414.2,188.4 1417.5,192.9 1420.5,197.5 C1423.5,202.1 1426.4,206.9 1428.8,211.5 C1431.2,216.1 1433.2,220.4 1435.0,225.0 C1436.8,229.6 1438.4,234.3 1439.7,239.0 C1441.0,243.7 1442.2,248.4 1443.0,253.0 C1443.8,257.6 1444.0,261.1 1444.3,266.3 C1444.5,271.5 1444.5,281.1 1444.5,284.0 L1437.5,356.0 L1425.0,480.0 L1406.0,665.0" fill="none" stroke="#000" stroke-width="2.6" stroke-linecap="round" stroke-linejoin="round" />
<path d="M1297.5,324.0 L1444.5,284.0 L1450.0,280.0" fill="none" stroke="#000" stroke-width="2.6" stroke-linecap="round" stroke-linejoin="round" />
<path d="M1207.5,176.0 C1209.9,177.2 1217.1,180.3 1222.0,183.0 C1226.9,185.7 1232.1,188.8 1236.8,192.3 C1241.5,195.8 1245.8,199.8 1250.0,204.0 C1254.2,208.2 1258.1,212.4 1261.8,217.2 C1265.5,222.0 1268.8,227.6 1272.0,233.0 C1275.2,238.4 1278.4,244.4 1281.0,249.9 C1283.6,255.4 1285.6,260.6 1287.5,266.0 C1289.4,271.4 1291.2,277.2 1292.5,282.5 C1293.8,287.8 1294.7,292.9 1295.5,298.0 C1296.3,303.1 1297.0,309.0 1297.3,313.3 C1297.6,317.6 1297.5,322.2 1297.5,324.0 L1294.0,356.0 L1285.0,480.0 L1267.5,724.0" fill="none" stroke="#000" stroke-width="2.6" stroke-linecap="round" stroke-linejoin="round" />
<path d="M944.0,116.0 C941.7,117.9 933.2,122.8 930.0,127.5 C926.8,132.2 925.8,141.2 925.0,144.0" fill="none" stroke="#000" stroke-width="2.6" stroke-linecap="round" stroke-linejoin="round" />
<path d="M1207.5,176.0 C1205.7,177.4 1199.6,181.2 1196.5,184.6 C1193.4,187.9 1190.5,192.0 1188.8,196.1 C1187.0,200.2 1186.5,206.8 1186.0,209.0" fill="none" stroke="#000" stroke-width="2.6" stroke-linecap="round" stroke-linejoin="round" />
<path d="M1254.2,324.0 C1257.7,324.6 1267.8,327.5 1275.0,327.5 C1282.2,327.5 1293.8,324.6 1297.5,324.0" fill="none" stroke="#000" stroke-width="2.6" stroke-linecap="round" stroke-linejoin="round" />
<path d="M870.0,445.0 L870.0,356.0 L872.0,210.0 C872.7,205.0 873.0,188.8 876.0,180.0 C879.0,171.2 883.9,163.5 890.0,157.5 C896.1,151.5 906.7,146.2 912.5,144.0 C918.3,141.8 922.9,144.0 925.0,144.0 L1186.0,209.0 C1187.8,209.5 1193.3,210.6 1197.0,212.0 C1200.7,213.4 1204.5,215.0 1208.0,217.2 C1211.5,219.4 1214.8,222.1 1218.0,225.0 C1221.2,227.9 1224.3,230.9 1227.2,234.5 C1230.1,238.1 1232.9,242.3 1235.5,246.5 C1238.1,250.7 1240.6,255.2 1242.6,259.5 C1244.6,263.8 1246.1,267.8 1247.5,272.0 C1248.9,276.2 1250.2,280.7 1251.2,284.5 C1252.2,288.3 1252.8,291.8 1253.3,295.0 C1253.8,298.2 1253.9,298.9 1254.1,303.7 C1254.2,308.5 1254.2,320.6 1254.2,324.0 L1251.0,356.0 L1242.5,480.0 L1226.0,722.5" fill="none" stroke="#000" stroke-width="2.6" stroke-linecap="round" stroke-linejoin="round" />
<path d="M977.5,367.5 L980.0,300.0 L981.0,252.5 C981.7,248.8 982.2,237.5 985.0,230.0 C987.8,222.5 992.5,212.6 997.5,207.5 C1002.5,202.4 1010.2,200.6 1015.0,199.5 C1019.8,198.4 1024.2,200.8 1026.0,201.0 L1139.0,230.0 C1142.5,232.1 1153.6,236.2 1160.0,242.5 C1166.4,248.8 1173.2,257.1 1177.5,267.5 C1181.8,277.9 1184.3,294.6 1186.0,305.0 C1187.7,315.4 1187.2,325.8 1187.5,330.0 L1179.0,440.0 L989.0,371.0 Z" fill="none" stroke="#000" stroke-width="2.6" stroke-linecap="round" stroke-linejoin="round" />
<path d="M981.0,252.5 C984.2,252.8 993.9,254.0 1000.0,254.0 C1006.1,254.0 1014.7,252.8 1017.6,252.5 L1090.0,236.0" fill="none" stroke="#000" stroke-width="2.6" stroke-linecap="round" stroke-linejoin="round" />
<path d="M1017.6,252.5 L1015.8,356.0 L1016.5,367.5 L1156.0,332.5 C1156.8,332.2 1159.7,331.6 1161.0,331.0 C1162.3,330.4 1163.5,329.3 1164.0,329.0" fill="none" stroke="#000" stroke-width="2.6" stroke-linecap="round" stroke-linejoin="round" />
<path d="M1036.0,223.0 C1034.2,223.8 1028.0,225.5 1025.0,228.0 C1022.0,230.5 1019.2,233.9 1018.0,238.0 C1016.8,242.1 1017.7,250.1 1017.6,252.5" fill="none" stroke="#000" stroke-width="2.6" stroke-linecap="round" stroke-linejoin="round" />
<path d="M1026.0,201.0 C1026.4,202.9 1026.9,208.9 1028.4,212.2 C1029.9,215.5 1032.7,219.1 1035.2,221.0 C1037.7,222.9 1042.0,223.2 1043.4,223.7" fill="none" stroke="#000" stroke-width="2.6" stroke-linecap="round" stroke-linejoin="round" />
<path d="M1161.3,260.0 L1157.5,331.0" fill="none" stroke="#000" stroke-width="2.6" stroke-linecap="round" stroke-linejoin="round" />
<path d="M1177.5,306.0 C1178.1,306.7 1179.5,309.2 1181.0,310.0 C1182.5,310.8 1185.6,310.8 1186.5,311.0" fill="none" stroke="#000" stroke-width="2.08" stroke-linecap="round" stroke-linejoin="round" />
<path d="M1139.0,230.0 C1139.3,232.5 1138.8,241.0 1141.0,245.0 C1143.2,249.0 1150.6,252.5 1152.5,254.0" fill="none" stroke="#000" stroke-width="2.6" stroke-linecap="round" stroke-linejoin="round" />
<path d="M1176.0,327.5 L1170.0,436.0" fill="none" stroke="#222" stroke-width="1.56" stroke-linecap="round" stroke-linejoin="round" />
<path d="M977.5,367.5 C979.4,368.1 985.2,370.2 989.0,371.0 C992.8,371.8 995.4,373.1 1000.0,372.5 C1004.6,371.9 1013.8,368.3 1016.5,367.5" fill="none" stroke="#000" stroke-width="2.6" stroke-linecap="round" stroke-linejoin="round" />
<path d="M790.0,455.0 L865.0,437.5 L870.0,445.0 L986.0,494.0 L991.0,496.0 L790.0,556.5 Z" fill="#9b9a9f" />
<path d="M790.0,556.5 L991.0,496.0 L992.0,513.0 L821.0,565.5 L821.0,670.0 L790.0,679.0 Z" fill="#828284" />
<path d="M790.0,455.0 L864.3,437.7 C864.4,438.4 864.5,440.9 864.9,442.0 C865.3,443.1 865.9,443.5 866.8,444.0 C867.6,444.5 869.5,445.0 870.0,445.2 L986.0,494.0 L992.5,495.0 L992.0,512.5 L1150.5,580.0" fill="none" stroke="#000" stroke-width="2.6" stroke-linecap="round" stroke-linejoin="round" />
<path d="M790.0,556.5 L991.0,496.0" fill="none" stroke="#000" stroke-width="2.6" stroke-linecap="round" stroke-linejoin="round" />
<path d="M790.0,679.0 L821.0,670.0" fill="none" stroke="#000" stroke-width="2.6" stroke-linecap="round" stroke-linejoin="round" />
<path d="M820.0,572.5 L821.0,682.5 C822.3,685.1 825.4,693.0 829.0,698.0 C832.6,703.0 836.5,707.8 842.5,712.5 C848.5,717.2 856.7,721.8 865.0,726.0 C873.3,730.2 881.7,734.0 892.5,737.5 C903.3,741.0 917.5,744.6 930.0,747.0 C942.5,749.4 955.0,751.0 967.5,752.0 C980.0,753.0 992.9,753.3 1005.0,753.0 C1017.1,752.7 1029.6,751.5 1040.0,750.0 C1050.4,748.5 1058.3,746.7 1067.5,744.0 C1076.7,741.3 1086.7,737.6 1095.0,734.0 C1103.3,730.4 1111.0,726.7 1117.5,722.5 C1124.0,718.3 1129.6,713.2 1134.0,709.0 C1138.4,704.8 1142.3,699.4 1144.0,697.5 L1150.0,585.0 C1148.0,587.2 1143.4,593.4 1138.0,598.0 C1132.6,602.6 1125.5,607.8 1117.5,612.5 C1109.5,617.2 1100.4,622.1 1090.0,626.0 C1079.6,629.9 1066.7,633.5 1055.0,636.0 C1043.3,638.5 1031.2,639.9 1020.0,641.0 C1008.8,642.1 999.2,642.7 987.5,642.5 C975.8,642.3 961.7,641.4 950.0,640.0 C938.3,638.6 928.3,636.6 917.5,634.0 C906.7,631.4 895.4,628.3 885.0,624.5 C874.6,620.7 864.2,616.4 855.0,611.0 C845.8,605.6 835.8,598.4 830.0,592.0 C824.2,585.6 821.7,575.8 820.0,572.5 Z" fill="url(#g72)" />
<path d="M821.0,565.5 L991.0,514.0 L992.0,512.5 L1150.5,580.0 L1150.0,585.0 C1148.0,587.2 1143.4,593.4 1138.0,598.0 C1132.6,602.6 1125.5,607.8 1117.5,612.5 C1109.5,617.2 1100.4,622.1 1090.0,626.0 C1079.6,629.9 1066.7,633.5 1055.0,636.0 C1043.3,638.5 1031.2,639.9 1020.0,641.0 C1008.8,642.1 999.2,642.7 987.5,642.5 C975.8,642.3 961.7,641.4 950.0,640.0 C938.3,638.6 928.3,636.6 917.5,634.0 C906.7,631.4 895.4,628.3 885.0,624.5 C874.6,620.7 864.2,616.4 855.0,611.0 C845.8,605.6 835.8,598.4 830.0,592.0 C824.2,585.6 821.7,575.8 820.0,572.5 L820.0,572.5 Z" fill="#9b9a9f" />
<ellipse cx="985" cy="573" rx="69" ry="27" fill="url(#g73)" stroke="#000" stroke-width="2.6"/>
<path d="M820.0,572.5 L821.0,682.5 C822.3,685.1 825.4,693.0 829.0,698.0 C832.6,703.0 836.5,707.8 842.5,712.5 C848.5,717.2 856.7,721.8 865.0,726.0 C873.3,730.2 881.7,734.0 892.5,737.5 C903.3,741.0 917.5,744.6 930.0,747.0 C942.5,749.4 955.0,751.0 967.5,752.0 C980.0,753.0 992.9,753.3 1005.0,753.0 C1017.1,752.7 1029.6,751.5 1040.0,750.0 C1050.4,748.5 1058.3,746.7 1067.5,744.0 C1076.7,741.3 1086.7,737.6 1095.0,734.0 C1103.3,730.4 1111.0,726.7 1117.5,722.5 C1124.0,718.3 1129.6,713.2 1134.0,709.0 C1138.4,704.8 1142.3,699.4 1144.0,697.5 L1150.0,585.0 C1148.0,587.2 1143.4,593.4 1138.0,598.0 C1132.6,602.6 1125.5,607.8 1117.5,612.5 C1109.5,617.2 1100.4,622.1 1090.0,626.0 C1079.6,629.9 1066.7,633.5 1055.0,636.0 C1043.3,638.5 1031.2,639.9 1020.0,641.0 C1008.8,642.1 999.2,642.7 987.5,642.5 C975.8,642.3 961.7,641.4 950.0,640.0 C938.3,638.6 928.3,636.6 917.5,634.0 C906.7,631.4 895.4,628.3 885.0,624.5 C874.6,620.7 864.2,616.4 855.0,611.0 C845.8,605.6 835.8,598.4 830.0,592.0 C824.2,585.6 821.7,575.8 820.0,572.5 Z" fill="none" stroke="#000" stroke-width="2.6" stroke-linecap="round" stroke-linejoin="round" />
<path d="M820.0,572.5 L821.0,565.5 L991.0,514.0" fill="none" stroke="#000" stroke-width="2.6" stroke-linecap="round" stroke-linejoin="round" />
<path d="M1150.5,580.0 L1150.0,585.0" fill="none" stroke="#000" stroke-width="2.6" stroke-linecap="round" stroke-linejoin="round" />
<path d="M207.0,757.5 L201.0,696.0 L172.5,436.0 L163.0,330.0 L159.8,326.0 C159.5,318.3 157.6,291.4 158.0,280.0 C158.4,268.6 160.1,265.4 162.5,257.5 C164.9,249.6 167.9,239.6 172.5,232.5 C177.1,225.4 184.2,219.0 190.0,215.0 C195.8,211.0 204.6,209.8 207.5,208.8 L440.0,173.8 L447.5,173.0 L450.0,175.0 L692.5,257.5 C695.8,258.7 705.8,261.4 712.0,264.5 C718.2,267.6 723.0,269.6 730.0,276.0 C737.0,282.4 747.0,292.7 754.0,303.0 C761.0,313.3 766.8,325.5 772.0,338.0 C777.2,350.5 781.7,366.0 785.0,378.0 C788.3,390.0 790.3,400.9 792.0,410.0 C793.7,419.1 794.5,428.8 795.0,432.5 L796.0,676.0 L795.0,800.0 L798.0,917.5 C797.5,919.2 797.2,924.8 795.0,927.5 C792.8,930.2 786.7,932.9 785.0,934.0 L556.0,1032.5 C552.9,1033.3 543.5,1036.9 537.5,1037.5 C531.5,1038.1 525.4,1037.4 520.0,1036.0 C514.6,1034.6 507.5,1030.2 505.0,1029.0 L452.5,982.5 L447.5,975.0 L436.5,800.0 L436.2,804.0 L334.0,837.5 C331.7,838.1 325.2,840.4 320.0,841.0 C314.8,841.6 307.5,842.2 302.5,841.0 C297.5,839.8 292.1,835.2 290.0,834.0 L209.5,762.5 Z" fill="#7f7f81" />
<path d="M215.0,210.0 L450.0,175.5 L692.5,257.5 L434.5,307.0 Z" fill="#9b9a9f" />
<path d="M207.5,208.8 L440.0,173.8 L447.5,173.0 L450.0,175.5 L215.0,210.0 Z" fill="#b4b4b8" />
<path d="M448.0,172.6 L693.3,256.0 L692.5,257.5 L450.0,175.5 Z" fill="#8e8e92" />
<path d="M434.5,307.0 L692.5,257.5 C694.4,258.9 700.0,262.6 704.0,266.0 C708.0,269.4 712.3,273.6 716.3,277.9 C720.3,282.1 724.2,286.6 728.0,291.5 C731.8,296.4 735.7,301.7 739.2,307.1 C742.7,312.5 745.9,318.1 749.0,324.0 C752.1,329.9 755.3,336.7 757.9,342.5 C760.5,348.3 762.4,353.4 764.5,359.0 C766.6,364.6 768.7,370.5 770.4,375.8 C772.1,381.1 773.3,385.8 774.5,391.0 C775.7,396.2 776.8,398.9 777.5,407.1 C778.2,415.3 778.8,434.5 779.0,440.0 L527.5,506.0 C527.2,502.2 526.7,490.5 526.0,483.0 C525.3,475.5 524.5,468.2 523.2,461.0 C522.0,453.8 520.3,447.1 518.5,440.0 C516.7,432.9 514.8,425.4 512.5,418.2 C510.2,411.0 507.9,404.1 505.0,397.0 C502.1,389.9 498.9,383.0 495.4,375.5 C491.9,368.0 488.3,359.1 484.0,352.0 C479.7,344.9 475.0,338.4 469.7,332.7 C464.4,327.0 457.9,322.3 452.0,318.0 C446.1,313.7 437.4,308.8 434.5,307.0 Z" fill="url(#g74)" />
<path d="M692.5,257.5 C695.8,258.7 705.8,261.4 712.0,264.5 C718.2,267.6 723.0,269.6 730.0,276.0 C737.0,282.4 747.0,292.7 754.0,303.0 C761.0,313.3 766.8,325.5 772.0,338.0 C777.2,350.5 781.7,366.0 785.0,378.0 C788.3,390.0 790.3,400.9 792.0,410.0 C793.7,419.1 794.5,428.8 795.0,432.5 L796.0,676.0 L795.0,800.0 L798.0,917.5 L795.0,927.5 L785.0,934.0 L785.5,934.0 L782.5,676.0 L779.0,440.0 C778.8,434.5 778.2,415.3 777.5,407.1 C776.8,398.9 775.7,396.2 774.5,391.0 C773.3,385.8 772.1,381.1 770.4,375.8 C768.7,370.5 766.6,364.6 764.5,359.0 C762.4,353.4 760.5,348.3 757.9,342.5 C755.3,336.7 752.1,329.9 749.0,324.0 C745.9,318.1 742.7,312.5 739.2,307.1 C735.7,301.7 731.8,296.4 728.0,291.5 C724.2,286.6 720.3,282.1 716.3,277.9 C712.3,273.6 708.0,269.4 704.0,266.0 C700.0,262.6 694.4,258.9 692.5,257.5 Z" fill="url(#g75)" />
<path d="M692.5,257.5 L700.1,263.0 L701.6,260.5 L692.5,257.5 Z" fill="url(#g76)" />
<path d="M698.6,261.8 L705.9,267.7 L708.7,263.1 L699.8,259.8 Z" fill="url(#g77)" />
<path d="M704.5,266.4 L711.3,272.8 L715.6,266.3 L707.0,262.3 Z" fill="url(#g78)" />
<path d="M710.0,271.5 L716.5,278.2 L722.3,270.1 L714.0,265.5 Z" fill="url(#g79)" />
<path d="M715.3,276.8 L721.5,283.7 L728.4,274.6 L720.7,269.0 Z" fill="url(#g80)" />
<path d="M720.3,282.3 L726.3,289.4 L734.0,279.8 L727.0,273.4 Z" fill="url(#g81)" />
<path d="M725.2,288.0 L730.9,295.3 L739.4,285.3 L732.6,278.5 Z" fill="url(#g82)" />
<path d="M729.8,293.8 L735.3,301.4 L744.5,290.9 L738.1,283.9 Z" fill="url(#g83)" />
<path d="M734.3,299.8 L739.5,307.6 L749.4,296.8 L743.3,289.4 Z" fill="url(#g84)" />
<path d="M738.5,306.0 L743.4,314.0 L753.9,302.9 L748.2,295.3 Z" fill="url(#g85)" />
<path d="M742.5,312.3 L747.1,320.5 L758.0,309.4 L752.8,301.3 Z" fill="url(#g86)" />
<path d="M746.2,318.8 L750.6,327.1 L761.7,316.0 L757.0,307.7 Z" fill="url(#g87)" />
<path d="M749.7,325.4 L753.9,333.8 L765.2,322.8 L760.9,314.3 Z" fill="url(#g88)" />
<path d="M753.1,332.1 L757.0,340.6 L768.4,329.7 L764.4,321.1 Z" fill="url(#g89)" />
<path d="M756.3,338.9 L760.0,347.4 L771.5,336.8 L767.7,328.0 Z" fill="url(#g90)" />
<path d="M759.3,345.7 L762.7,354.4 L774.3,343.9 L770.7,335.0 Z" fill="url(#g91)" />
<path d="M762.1,352.6 L765.4,361.4 L776.8,351.0 L773.6,342.1 Z" fill="url(#g92)" />
<path d="M764.7,359.6 L767.9,368.4 L779.2,358.3 L776.2,349.2 Z" fill="url(#g93)" />
<path d="M767.3,366.6 L770.3,375.5 L781.4,365.6 L778.6,356.5 Z" fill="url(#g94)" />
<path d="M769.7,373.7 L772.4,382.7 L783.6,372.9 L780.9,363.8 Z" fill="url(#g95)" />
<path d="M771.9,380.9 L774.3,389.9 L785.6,380.3 L783.1,371.1 Z" fill="url(#g96)" />
<path d="M773.8,388.1 L775.9,397.2 L787.5,387.7 L785.1,378.5 Z" fill="url(#g97)" />
<path d="M775.6,395.4 L777.2,404.5 L789.1,395.2 L787.0,385.8 Z" fill="url(#g98)" />
<path d="M777.0,402.7 L777.8,412.0 L790.6,402.6 L788.8,393.3 Z" fill="url(#g99)" />
<path d="M777.7,410.1 L778.2,419.5 L792.0,410.2 L790.3,400.8 Z" fill="url(#g100)" />
<path d="M778.1,417.6 L778.5,426.9 L793.1,417.7 L791.7,408.3 Z" fill="url(#g101)" />
<path d="M778.5,425.1 L778.8,434.4 L794.0,425.3 L792.9,415.8 Z" fill="url(#g102)" />
<path d="M778.7,432.5 L779.0,440.0 L794.5,431.0 L793.8,423.4 Z" fill="url(#g103)" />
<path d="M779.0,440.0 L794.0,430.0 L796.0,676.0 L795.0,800.0 L798.0,917.5 L795.0,927.5 L785.5,934.0 L782.5,676.0 Z" fill="url(#g104)" />
<path d="M527.5,506.0 L779.0,440.0 L782.5,676.0 L785.5,934.0 L556.0,1032.5 L542.5,800.0 L537.5,676.0 Z" fill="#7f7f81" />
<path d="M215.0,210.0 L434.5,307.0 C432.6,307.7 426.4,309.2 423.0,311.0 C419.6,312.8 416.7,315.5 414.2,317.8 C411.7,320.1 409.6,322.5 408.0,325.0 C406.4,327.5 405.5,330.0 404.6,332.7 C403.7,335.4 403.2,337.9 402.8,341.0 C402.4,344.1 402.6,349.3 402.5,351.0 L191.0,246.0 C192.0,242.5 193.0,231.0 197.0,225.0 C201.0,219.0 212.0,212.5 215.0,210.0 Z" fill="url(#g105)" />
<path d="M215.0,210.0 L434.5,307.0 C432.6,307.7 426.4,309.2 423.0,311.0 C419.6,312.8 416.7,315.5 414.2,317.8 C411.7,320.1 409.6,322.5 408.0,325.0 C406.4,327.5 405.5,330.0 404.6,332.7 C403.7,335.4 403.2,337.9 402.8,341.0 C402.4,344.1 402.6,349.3 402.5,351.0 L191.0,246.0 C192.0,242.5 193.0,231.0 197.0,225.0 C201.0,219.0 212.0,212.5 215.0,210.0 Z" fill="url(#g106)" />
<path d="M159.8,326.0 C159.5,318.3 157.6,291.4 158.0,280.0 C158.4,268.6 160.1,265.4 162.5,257.5 C164.9,249.6 167.9,239.6 172.5,232.5 C177.1,225.4 184.2,219.0 190.0,215.0 C195.8,211.0 204.6,209.8 207.5,208.8 L215.0,210.0 C212.0,212.5 201.0,219.0 197.0,225.0 C193.0,231.0 192.0,242.5 191.0,246.0 C189.3,246.1 184.1,245.8 181.0,246.5 C177.9,247.2 174.9,248.2 172.5,250.0 C170.1,251.8 168.2,254.1 166.5,257.0 C164.8,259.9 163.5,264.0 162.5,267.5 C161.5,271.0 161.0,274.2 160.5,278.0 C160.0,281.8 159.7,288.0 159.5,290.0 Z" fill="url(#g107)" />
<path d="M434.5,307.0 C437.4,308.8 446.1,313.7 452.0,318.0 C457.9,322.3 464.4,327.0 469.7,332.7 C475.0,338.4 479.7,344.9 484.0,352.0 C488.3,359.1 491.9,368.0 495.4,375.5 C498.9,383.0 502.1,389.9 505.0,397.0 C507.9,404.1 510.2,411.0 512.5,418.2 C514.8,425.4 516.7,432.9 518.5,440.0 C520.3,447.1 522.0,453.8 523.2,461.0 C524.5,468.2 525.3,475.5 526.0,483.0 C526.7,490.5 527.2,502.2 527.5,506.0 C523.3,506.7 511.4,510.2 502.5,510.0 C493.6,509.8 478.8,505.8 474.0,505.0 C473.8,502.2 473.2,493.6 472.5,488.0 C471.8,482.4 470.8,477.1 469.7,471.6 C468.6,466.1 467.4,460.3 466.0,455.0 C464.6,449.7 463.2,445.9 461.0,439.6 C458.8,433.3 455.8,424.1 453.0,417.0 C450.2,409.9 447.3,403.3 444.1,397.0 C440.9,390.7 437.6,384.3 434.0,379.0 C430.4,373.7 426.2,368.8 422.7,365.0 C419.2,361.2 416.4,358.8 413.0,356.5 C409.6,354.2 404.2,351.9 402.5,351.0 C402.6,349.3 402.4,344.1 402.8,341.0 C403.2,337.9 403.7,335.4 404.6,332.7 C405.5,330.0 406.4,327.5 408.0,325.0 C409.6,322.5 411.7,320.1 414.2,317.8 C416.7,315.5 419.6,312.8 423.0,311.0 C426.4,309.2 432.6,307.7 434.5,307.0 Z" fill="url(#g108)" />
<path d="M474.0,505.0 C478.8,505.8 493.6,509.8 502.5,510.0 C511.4,510.2 523.3,506.7 527.5,506.0 L527.0,490.0 L473.0,490.0 Z" fill="url(#g109)" />
<path d="M402.5,351.0 L409.5,354.5 L443.3,312.3 L434.5,307.0 Z" fill="url(#g110)" />
<path d="M408.2,353.7 L414.8,357.9 L450.1,316.7 L441.5,311.2 Z" fill="url(#g111)" />
<path d="M413.6,356.9 L419.6,362.0 L456.8,321.6 L448.5,315.6 Z" fill="url(#g112)" />
<path d="M418.5,360.8 L424.0,366.5 L463.2,326.7 L455.1,320.3 Z" fill="url(#g113)" />
<path d="M423.0,365.3 L428.1,371.2 L469.1,332.2 L461.6,325.3 Z" fill="url(#g114)" />
<path d="M427.1,370.0 L432.0,376.2 L474.5,338.4 L467.8,330.7 Z" fill="url(#g115)" />
<path d="M431.1,374.9 L435.5,381.4 L479.4,345.0 L473.3,336.8 Z" fill="url(#g116)" />
<path d="M434.7,380.1 L438.7,386.8 L483.8,351.8 L478.3,343.2 Z" fill="url(#g117)" />
<path d="M438.0,385.4 L441.7,392.3 L487.8,359.0 L482.8,350.1 Z" fill="url(#g118)" />
<path d="M441.0,390.9 L444.6,398.0 L491.3,366.4 L486.9,357.2 Z" fill="url(#g119)" />
<path d="M443.9,396.5 L447.3,403.6 L494.7,373.9 L490.4,364.6 Z" fill="url(#g120)" />
<path d="M446.6,402.2 L449.8,409.4 L498.1,381.3 L493.8,372.0 Z" fill="url(#g121)" />
<path d="M449.2,407.9 L452.3,415.2 L501.5,388.8 L497.2,379.5 Z" fill="url(#g122)" />
<path d="M451.7,413.7 L454.5,421.1 L504.7,396.3 L500.7,386.9 Z" fill="url(#g123)" />
<path d="M454.0,419.6 L456.7,427.0 L507.6,403.9 L503.9,394.4 Z" fill="url(#g124)" />
<path d="M456.2,425.5 L458.7,432.9 L510.4,411.7 L507.0,402.0 Z" fill="url(#g125)" />
<path d="M458.2,431.4 L460.8,438.9 L512.9,419.5 L509.7,409.7 Z" fill="url(#g126)" />
<path d="M460.3,437.4 L462.8,444.8 L515.2,427.3 L512.3,417.5 Z" fill="url(#g127)" />
<path d="M462.3,443.4 L464.8,450.8 L517.3,435.2 L514.6,425.4 Z" fill="url(#g128)" />
<path d="M464.3,449.3 L466.5,456.9 L519.3,443.2 L516.8,433.3 Z" fill="url(#g129)" />
<path d="M466.1,455.4 L467.9,463.0 L521.2,451.2 L518.8,441.2 Z" fill="url(#g130)" />
<path d="M467.6,461.5 L469.2,469.2 L522.8,459.2 L520.7,449.2 Z" fill="url(#g131)" />
<path d="M468.9,467.6 L470.4,475.3 L524.2,467.3 L522.5,457.2 Z" fill="url(#g132)" />
<path d="M470.1,473.8 L471.5,481.5 L525.2,475.4 L523.9,465.2 Z" fill="url(#g133)" />
<path d="M471.3,480.0 L472.4,487.8 L526.0,483.5 L525.0,473.3 Z" fill="url(#g134)" />
<path d="M472.3,486.2 L473.1,494.0 L526.7,491.7 L525.9,481.5 Z" fill="url(#g135)" />
<path d="M473.0,492.5 L473.6,500.3 L527.2,499.9 L526.5,489.6 Z" fill="url(#g136)" />
<path d="M473.5,498.7 L474.0,505.0 L527.5,506.0 L527.0,497.8 Z" fill="url(#g137)" />
<path d="M474.0,505.0 C478.8,505.8 493.6,509.8 502.5,510.0 C511.4,510.2 523.3,506.7 527.5,506.0 L537.5,676.0 L542.5,800.0 L556.0,1032.5 C552.9,1033.3 543.5,1036.9 537.5,1037.5 C531.5,1038.1 525.4,1037.4 520.0,1036.0 C514.6,1034.6 507.5,1030.2 505.0,1029.0 L491.0,800.0 L486.0,696.0 Z" fill="url(#g138)" />
<path d="M299.0,444.0 L340.0,435.0 L387.5,464.0 C389.6,466.7 395.9,472.3 400.0,480.0 C404.1,487.7 409.0,500.8 412.0,510.0 C415.0,519.2 416.7,530.0 418.0,535.0 C419.3,540.0 419.7,539.2 420.0,540.0 L427.5,640.0 L436.2,804.0 L334.0,837.5 L321.0,696.0 Z" fill="#818183" />
<path d="M299.0,444.0 L300.0,412.5 L340.0,435.0 Z" fill="url(#g139)" />
<path d="M254.0,442.0 C260.0,442.7 282.5,445.7 290.0,446.0 C297.5,446.3 297.5,444.3 299.0,444.0 L321.0,696.0 L334.0,837.5 C331.7,838.1 325.2,840.4 320.0,841.0 C314.8,841.6 307.5,842.2 302.5,841.0 C297.5,839.8 292.1,835.2 290.0,834.0 L277.5,696.0 Z" fill="url(#g140)" />
<path d="M254.0,442.0 C254.0,436.7 253.0,418.7 254.0,410.0 C255.0,401.3 256.9,394.3 260.0,390.0 C263.1,385.7 269.2,384.7 272.5,384.0 C275.8,383.3 278.8,385.7 280.0,386.0 C280.8,388.3 281.7,395.6 285.0,400.0 C288.3,404.4 297.5,410.4 300.0,412.5 L299.0,444.0 C297.5,444.3 297.5,446.3 290.0,446.0 C282.5,445.7 260.0,442.7 254.0,442.0 Z" fill="url(#g141)" />
<path d="M280.0,386.0 L372.5,437.5 C372.8,439.2 371.5,443.1 374.0,447.5 C376.5,451.9 385.2,461.2 387.5,464.0 L300.0,412.5 C297.5,410.4 288.3,404.4 285.0,400.0 C281.7,395.6 280.8,388.3 280.0,386.0 Z" fill="url(#g142)" />
<path d="M372.5,437.5 C375.4,440.8 383.8,447.1 390.0,457.5 C396.2,467.9 405.0,486.2 410.0,500.0 C415.0,513.8 418.3,533.3 420.0,540.0 L418.0,535.0 C417.0,530.8 415.0,519.2 412.0,510.0 C409.0,500.8 404.1,487.7 400.0,480.0 C395.9,472.3 389.6,466.7 387.5,464.0 C385.2,461.2 376.5,451.9 374.0,447.5 C371.5,443.1 372.8,439.2 372.5,437.5 Z" fill="#48484a" />
<path d="M420.0,540.0 L427.5,640.0 L431.0,696.0 L436.5,800.0 L447.5,975.0 L452.5,982.5 L452.5,980.0 L440.0,800.0 L433.5,696.0 L430.0,640.0 L423.5,580.0 Z" fill="#48484a" />
<path d="M209.5,762.5 L207.0,757.5 L201.0,696.0 L172.5,436.0 L159.5,290.0 C159.7,288.0 160.0,281.8 160.5,278.0 C161.0,274.2 161.5,271.0 162.5,267.5 C163.5,264.0 164.8,259.9 166.5,257.0 C168.2,254.1 170.1,251.8 172.5,250.0 C174.9,248.2 177.9,247.2 181.0,246.5 C184.1,245.8 189.3,246.1 191.0,246.0 L402.5,351.0 C404.2,351.9 409.6,354.2 413.0,356.5 C416.4,358.8 419.2,361.2 422.7,365.0 C426.2,368.8 430.4,373.7 434.0,379.0 C437.6,384.3 440.9,390.7 444.1,397.0 C447.3,403.3 450.2,409.9 453.0,417.0 C455.8,424.1 458.8,433.3 461.0,439.6 C463.2,445.9 464.6,449.7 466.0,455.0 C467.4,460.3 468.6,466.1 469.7,471.6 C470.8,477.1 471.8,482.4 472.5,488.0 C473.2,493.6 473.8,502.2 474.0,505.0 L486.0,696.0 L491.0,800.0 L505.0,1029.0 L452.5,982.5 L452.5,980.0 L440.0,800.0 L433.5,696.0 L430.0,640.0 L423.5,580.0 L420.0,540.0 C418.3,533.3 415.0,513.8 410.0,500.0 C405.0,486.2 396.2,467.9 390.0,457.5 C383.8,447.1 375.4,440.8 372.5,437.5 L280.0,386.0 C278.8,385.7 275.8,383.3 272.5,384.0 C269.2,384.7 263.1,385.7 260.0,390.0 C256.9,394.3 255.0,401.3 254.0,410.0 C253.0,418.7 254.0,436.7 254.0,442.0 L277.5,696.0 L291.0,834.0 Z" fill="#3f3f41" />
<path d="M209.5,762.5 L207.0,757.5 L201.0,696.0 L172.5,436.0 L159.5,290.0 C159.7,288.0 160.0,281.8 160.5,278.0 C161.0,274.2 161.5,271.0 162.5,267.5 C163.5,264.0 164.8,259.9 166.5,257.0 C168.2,254.1 170.1,251.8 172.5,250.0 C174.9,248.2 177.9,247.2 181.0,246.5 C184.1,245.8 189.3,246.1 191.0,246.0 L402.5,351.0 C404.2,351.9 409.6,354.2 413.0,356.5 C416.4,358.8 419.2,361.2 422.7,365.0 C426.2,368.8 430.4,373.7 434.0,379.0 C437.6,384.3 440.9,390.7 444.1,397.0 C447.3,403.3 450.2,409.9 453.0,417.0 C455.8,424.1 458.8,433.3 461.0,439.6 C463.2,445.9 464.6,449.7 466.0,455.0 C467.4,460.3 468.6,466.1 469.7,471.6 C470.8,477.1 471.8,482.4 472.5,488.0 C473.2,493.6 473.8,502.2 474.0,505.0 L486.0,696.0 L491.0,800.0 L505.0,1029.0 L452.5,982.5 L452.5,980.0 L440.0,800.0 L433.5,696.0 L430.0,640.0 L423.5,580.0 L420.0,540.0 C418.3,533.3 415.0,513.8 410.0,500.0 C405.0,486.2 396.2,467.9 390.0,457.5 C383.8,447.1 375.4,440.8 372.5,437.5 L280.0,386.0 C278.8,385.7 275.8,383.3 272.5,384.0 C269.2,384.7 263.1,385.7 260.0,390.0 C256.9,394.3 255.0,401.3 254.0,410.0 C253.0,418.7 254.0,436.7 254.0,442.0 L277.5,696.0 L291.0,834.0 Z" fill="none" stroke="#000" stroke-width="2.6" stroke-linecap="round" stroke-linejoin="round" />
<path d="M447.2,968.0 C447.4,969.5 447.6,974.8 448.2,977.0 C448.8,979.2 449.6,980.0 450.5,981.0 C451.4,982.0 453.0,982.8 453.5,983.2" fill="none" stroke="#000" stroke-width="2.08" stroke-linecap="round" stroke-linejoin="round" />
<path d="M290.0,834.0 C292.1,835.2 297.5,839.8 302.5,841.0 C307.5,842.2 314.8,841.6 320.0,841.0 C325.2,840.4 331.7,838.1 334.0,837.5 L436.2,804.0" fill="none" stroke="#000" stroke-width="2.6" stroke-linecap="round" stroke-linejoin="round" />
<path d="M505.0,1029.0 C507.5,1030.2 514.6,1034.6 520.0,1036.0 C525.4,1037.4 531.5,1038.1 537.5,1037.5 C543.5,1036.9 552.9,1033.3 556.0,1032.5 L785.5,934.0 C787.1,932.9 792.9,930.2 795.0,927.5 C797.1,924.8 797.5,919.2 798.0,917.5" fill="none" stroke="#000" stroke-width="2.6" stroke-linecap="round" stroke-linejoin="round" />
<path d="M215.0,210.0 L450.0,175.5 L692.5,257.5" fill="none" stroke="#000" stroke-width="2.6" stroke-linecap="round" stroke-linejoin="round" />
<path d="M215.0,210.0 L434.5,307.0 L692.5,257.5" fill="none" stroke="#000" stroke-width="2.6" stroke-linecap="round" stroke-linejoin="round" />
<path d="M692.5,257.5 C694.4,258.9 700.0,262.6 704.0,266.0 C708.0,269.4 712.3,273.6 716.3,277.9 C720.3,282.1 724.2,286.6 728.0,291.5 C731.8,296.4 735.7,301.7 739.2,307.1 C742.7,312.5 745.9,318.1 749.0,324.0 C752.1,329.9 755.3,336.7 757.9,342.5 C760.5,348.3 762.4,353.4 764.5,359.0 C766.6,364.6 768.7,370.5 770.4,375.8 C772.1,381.1 773.3,385.8 774.5,391.0 C775.7,396.2 776.8,398.9 777.5,407.1 C778.2,415.3 778.8,434.5 779.0,440.0 L782.5,676.0 L785.5,934.0" fill="none" stroke="#000" stroke-width="2.6" stroke-linecap="round" stroke-linejoin="round" />
<path d="M527.5,506.0 L779.0,440.0 C780.7,439.3 786.5,437.7 789.0,436.0 C791.5,434.3 793.2,431.0 794.0,430.0" fill="none" stroke="#000" stroke-width="2.6" stroke-linecap="round" stroke-linejoin="round" />
<path d="M434.5,307.0 C437.4,308.8 446.1,313.7 452.0,318.0 C457.9,322.3 464.4,327.0 469.7,332.7 C475.0,338.4 479.7,344.9 484.0,352.0 C488.3,359.1 491.9,368.0 495.4,375.5 C498.9,383.0 502.1,389.9 505.0,397.0 C507.9,404.1 510.2,411.0 512.5,418.2 C514.8,425.4 516.7,432.9 518.5,440.0 C520.3,447.1 522.0,453.8 523.2,461.0 C524.5,468.2 525.3,475.5 526.0,483.0 C526.7,490.5 527.2,502.2 527.5,506.0 L537.5,676.0 L542.5,800.0 L556.0,1032.5" fill="none" stroke="#000" stroke-width="2.6" stroke-linecap="round" stroke-linejoin="round" />
<path d="M215.0,210.0 C212.0,212.5 201.0,219.0 197.0,225.0 C193.0,231.0 192.0,242.5 191.0,246.0" fill="none" stroke="#000" stroke-width="2.6" stroke-linecap="round" stroke-linejoin="round" />
<path d="M434.5,307.0 C432.6,307.7 426.4,309.2 423.0,311.0 C419.6,312.8 416.7,315.5 414.2,317.8 C411.7,320.1 409.6,322.5 408.0,325.0 C406.4,327.5 405.5,330.0 404.6,332.7 C403.7,335.4 403.2,337.9 402.8,341.0 C402.4,344.1 402.6,349.3 402.5,351.0" fill="none" stroke="#000" stroke-width="2.6" stroke-linecap="round" stroke-linejoin="round" />
<path d="M474.0,505.0 C478.8,505.8 493.6,509.8 502.5,510.0 C511.4,510.2 523.3,506.7 527.5,506.0" fill="none" stroke="#000" stroke-width="2.6" stroke-linecap="round" stroke-linejoin="round" />
<path d="M254.0,442.0 C257.0,442.7 266.0,445.2 272.0,446.0 C278.0,446.8 283.7,447.1 290.0,446.5 C296.3,445.9 301.7,444.4 310.0,442.5 C318.3,440.6 335.0,436.2 340.0,435.0" fill="none" stroke="#000" stroke-width="2.6" stroke-linecap="round" stroke-linejoin="round" />
<path d="M303.4,413.7 C302.8,414.8 300.4,417.3 299.5,420.0 C298.6,422.7 298.2,426.3 297.9,430.0 C297.6,433.7 297.7,440.0 297.6,442.0 L304.0,510.0 L321.0,696.0 L334.0,837.5" fill="none" stroke="#000" stroke-width="2.6" stroke-linecap="round" stroke-linejoin="round" />
<path d="M280.0,386.0 C280.5,388.0 281.2,394.4 283.0,398.0 C284.8,401.6 287.6,405.0 291.0,407.6 C294.4,410.2 301.3,412.7 303.4,413.7" fill="none" stroke="#000" stroke-width="2.6" stroke-linecap="round" stroke-linejoin="round" />
<path d="M372.5,437.5 C372.8,439.2 371.5,443.1 374.0,447.5 C376.5,451.9 385.2,461.2 387.5,464.0" fill="none" stroke="#000" stroke-width="2.6" stroke-linecap="round" stroke-linejoin="round" />
<path d="M997,0 L982,599" fill="none" stroke="#4a7fd6" stroke-width="1.9" stroke-linecap="round" stroke-linejoin="round" /></svg></body></html>
